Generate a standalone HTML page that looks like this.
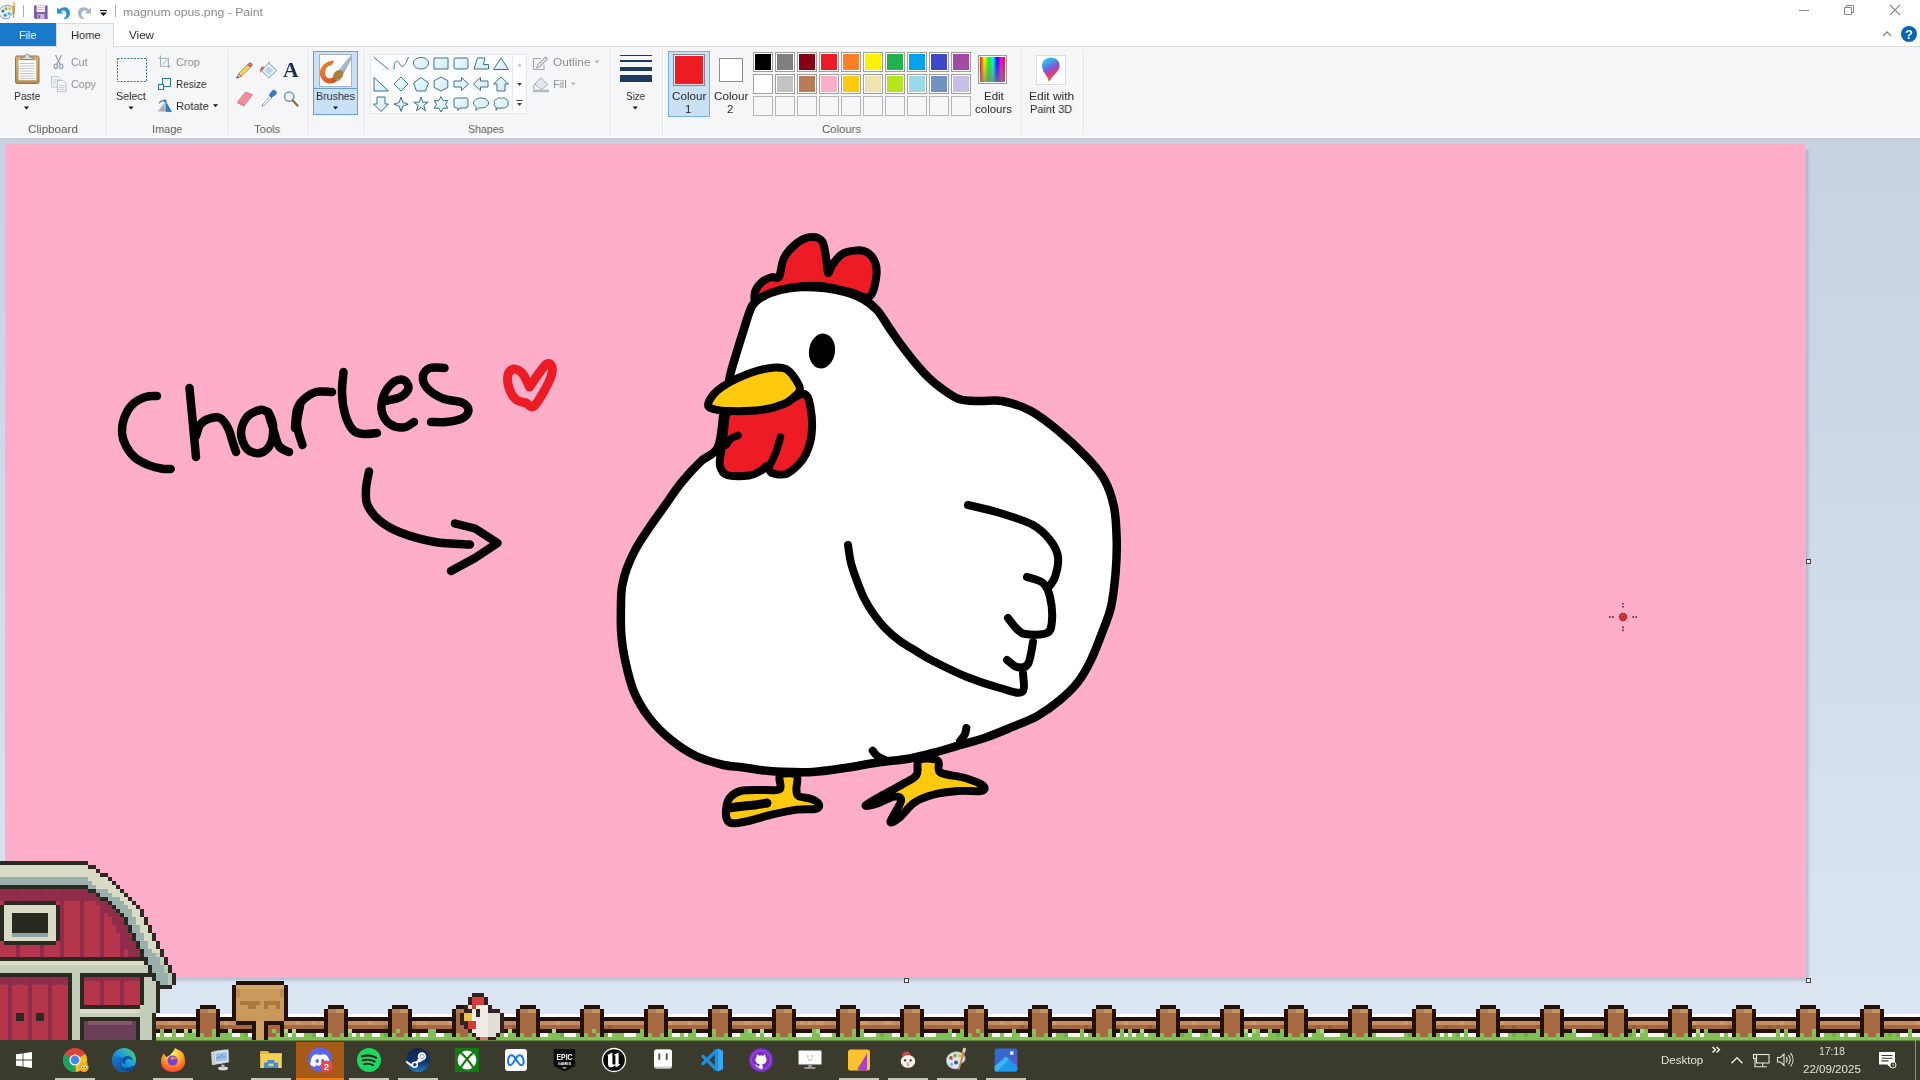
<!DOCTYPE html>
<html>
<head>
<meta charset="utf-8">
<title>magnum opus.png - Paint</title>
<style>
*{box-sizing:border-box;margin:0;padding:0}
html,body{width:1920px;height:1080px;overflow:hidden;background:#fff;font-family:"Liberation Sans",sans-serif;font-size:12px;color:#1e1e1e}
.abs{position:absolute}
svg{position:absolute;overflow:visible}
#titlebar{position:absolute;left:0;top:0;width:1920px;height:23px;background:#fff}
#tabrow{position:absolute;left:0;top:23px;width:1920px;height:24px;background:#fff;border-bottom:1px solid #dadbdc}
#ribbon{position:absolute;left:0;top:47px;width:1920px;height:91px;background:#f5f6f7}
#workspace{position:absolute;left:0;top:138px;width:1920px;height:878px;background:linear-gradient(to bottom,#c5cedc 0,#c9d2e2 6px,#c9d2e3 40px,#dbe4f1 860px,#dce5f2 100%)}
#canvas{position:absolute;left:5px;top:144px;width:1801px;height:834px;background:#ffaec9;overflow:hidden}
#canvas>svg{left:-5px;top:-144px}
#statusbar{position:absolute;left:0;top:1014px;width:1920px;height:26px;background:#fbfbfb}
#overlay{position:absolute;left:0;top:0;width:1920px;height:1040px;overflow:hidden}
#taskbar{position:absolute;left:0;top:1040px;width:1920px;height:40px;background:#3a3b2d;overflow:hidden}
.t{position:absolute;white-space:nowrap;line-height:14px;will-change:transform}
.sep{position:absolute;top:49px;width:1px;height:86px;background:#e2e3e4}
.glabel{position:absolute;top:122px;height:14px;line-height:14px;text-align:center;color:#5b5b5b;white-space:nowrap}
.dis{color:#8d8d8d}
</style>
</head>
<body>
<div id="titlebar">
</div>
<div id="tabrow">
</div>
<div id="ribbon">
</div>
<div id="chrome" class="abs" style="left:0;top:0;width:1920px;height:140px"><span class="t" style="left:123.00px;top:5.75px;font-size:11.5px;line-height:13.5px;color:#8b8b8b;transform:scaleX(1.0631);transform-origin:0 0;">magnum opus.png - Paint</span>
<div class="abs" style="left:0;top:23px;width:56px;height:23px;background:#1979ca"></div>
<div class="abs" style="left:56px;top:23px;width:58px;height:24px;background:#f5f6f7;border:1px solid #dadbdc;border-bottom:none"></div>
<span class="t" style="left:19.40px;top:28.78px;font-size:11.5px;line-height:13.5px;color:#fff;transform:scaleX(0.9444);transform-origin:0 0;">File</span>
<span class="t" style="left:70.60px;top:28.78px;font-size:11.5px;line-height:13.5px;color:#2a2a2a;transform:scaleX(0.9650);transform-origin:0 0;">Home</span>
<span class="t" style="left:129.40px;top:28.78px;font-size:11.5px;line-height:13.5px;color:#2a2a2a;transform:scaleX(1.0114);transform-origin:0 0;">View</span>
<div class="abs" style="left:106px;top:49px;width:1px;height:86px;background:#e5e6e8"></div><div class="abs" style="left:107px;top:49px;width:1px;height:86px;background:#fafafb"></div>
<div class="abs" style="left:228px;top:49px;width:1px;height:86px;background:#e5e6e8"></div><div class="abs" style="left:229px;top:49px;width:1px;height:86px;background:#fafafb"></div>
<div class="abs" style="left:308px;top:49px;width:1px;height:86px;background:#e5e6e8"></div><div class="abs" style="left:309px;top:49px;width:1px;height:86px;background:#fafafb"></div>
<div class="abs" style="left:364px;top:49px;width:1px;height:86px;background:#e5e6e8"></div><div class="abs" style="left:365px;top:49px;width:1px;height:86px;background:#fafafb"></div>
<div class="abs" style="left:610px;top:49px;width:1px;height:86px;background:#e5e6e8"></div><div class="abs" style="left:611px;top:49px;width:1px;height:86px;background:#fafafb"></div>
<div class="abs" style="left:662px;top:49px;width:1px;height:86px;background:#e5e6e8"></div><div class="abs" style="left:663px;top:49px;width:1px;height:86px;background:#fafafb"></div>
<div class="abs" style="left:1021px;top:49px;width:1px;height:86px;background:#e5e6e8"></div><div class="abs" style="left:1022px;top:49px;width:1px;height:86px;background:#fafafb"></div>
<div class="abs" style="left:1083px;top:49px;width:1px;height:86px;background:#e5e6e8"></div><div class="abs" style="left:1084px;top:49px;width:1px;height:86px;background:#fafafb"></div>
<span class="t" style="left:27.50px;top:123.25px;font-size:11.5px;line-height:13.5px;color:#5c5c5c;transform:scaleX(1.0158);transform-origin:0 0;">Clipboard</span>
<span class="t" style="left:151.50px;top:123.25px;font-size:11.5px;line-height:13.5px;color:#5c5c5c;transform:scaleX(0.9512);transform-origin:0 0;">Image</span>
<span class="t" style="left:254.00px;top:123.25px;font-size:11.5px;line-height:13.5px;color:#5c5c5c;transform:scaleX(0.9797);transform-origin:0 0;">Tools</span>
<span class="t" style="left:468.30px;top:123.25px;font-size:11.5px;line-height:13.5px;color:#5c5c5c;transform:scaleX(0.9230);transform-origin:0 0;">Shapes</span>
<span class="t" style="left:821.70px;top:123.25px;font-size:11.5px;line-height:13.5px;color:#5c5c5c;transform:scaleX(0.9842);transform-origin:0 0;">Colours</span>
<span class="t" style="left:13.50px;top:89.75px;font-size:11.5px;line-height:13.5px;color:#2a2a2a;transform:scaleX(0.8944);transform-origin:0 0;">Paste</span>
<span class="t" style="left:71.00px;top:55.75px;font-size:11.5px;line-height:13.5px;color:#8e8e8e;transform:scaleX(0.9220);transform-origin:0 0;">Cut</span>
<span class="t" style="left:71.00px;top:77.75px;font-size:11.5px;line-height:13.5px;color:#8e8e8e;transform:scaleX(0.9313);transform-origin:0 0;">Copy</span>
<span class="t" style="left:116.30px;top:89.75px;font-size:11.5px;line-height:13.5px;color:#2a2a2a;transform:scaleX(0.9324);transform-origin:0 0;">Select</span>
<span class="t" style="left:175.60px;top:55.75px;font-size:11.5px;line-height:13.5px;color:#8e8e8e;transform:scaleX(0.9549);transform-origin:0 0;">Crop</span>
<span class="t" style="left:175.60px;top:77.75px;font-size:11.5px;line-height:13.5px;color:#2a2a2a;transform:scaleX(0.8706);transform-origin:0 0;">Resize</span>
<span class="t" style="left:175.60px;top:99.75px;font-size:11.5px;line-height:13.5px;color:#2a2a2a;transform:scaleX(0.9710);transform-origin:0 0;">Rotate</span>
<span class="t" style="left:283.4px;top:60px;font-family:'Liberation Serif',serif;font-weight:bold;font-size:20px;line-height:20px;color:#1e3050;transform:scaleX(1.08);transform-origin:0 0">A</span>
<div class="abs" style="left:313px;top:51px;width:45px;height:64px;background:#c9e0f7;border:1px solid #62a2e4"></div><div class="abs" style="left:314px;top:88px;width:43px;height:1px;background:#62a2e4"></div>
<div class="abs" style="left:319px;top:54px;width:33px;height:33px;background:#fff;border:1px solid #a9b3bf"></div>
<span class="t" style="left:315.80px;top:89.75px;font-size:11.5px;line-height:13.5px;color:#2a2a2a;transform:scaleX(0.9245);transform-origin:0 0;">Brushes</span>
<div class="abs" style="left:370px;top:54px;width:157px;height:60px;background:#fcfdfe;border:1px solid #e3e6ea"></div><div class="abs" style="left:512px;top:55px;width:1px;height:58px;background:#e6e8eb"></div>
<span class="t" style="left:552.80px;top:55.75px;font-size:11.5px;line-height:13.5px;color:#8e8e8e;transform:scaleX(1.0292);transform-origin:0 0;">Outline</span>
<span class="t" style="left:552.80px;top:77.75px;font-size:11.5px;line-height:13.5px;color:#8e8e8e;transform:scaleX(0.9259);transform-origin:0 0;">Fill</span>
<span class="t" style="left:625.80px;top:89.75px;font-size:11.5px;line-height:13.5px;color:#2a2a2a;transform:scaleX(0.8493);transform-origin:0 0;">Size</span>
<div class="abs" style="left:668px;top:51px;width:42px;height:66px;background:#c9e0f7;border:1px solid #7aaee6"></div>
<div class="abs" style="left:673px;top:54px;width:32px;height:32px;background:#ed1c24;border:1px solid #7f8890;box-shadow:inset 0 0 0 1px #fbe9ea"></div>
<div class="abs" style="left:719px;top:58px;width:24px;height:24px;background:#fff;border:1px solid #8e8e8e"></div>
<span class="t" style="left:671.70px;top:89.75px;font-size:11.5px;line-height:13.5px;color:#2a2a2a;transform:scaleX(1.0125);transform-origin:0 0;">Colour</span>
<span class="t" style="left:685.10px;top:102.75px;font-size:11.5px;line-height:13.5px;color:#2a2a2a;transform:scaleX(1.0000);transform-origin:0 0;">1</span>
<span class="t" style="left:713.60px;top:89.75px;font-size:11.5px;line-height:13.5px;color:#2a2a2a;transform:scaleX(1.0155);transform-origin:0 0;">Colour</span>
<span class="t" style="left:727.10px;top:102.75px;font-size:11.5px;line-height:13.5px;color:#2a2a2a;transform:scaleX(1.0000);transform-origin:0 0;">2</span>
<div class="abs" style="left:753px;top:52px;width:20px;height:20px;background:#000000;border:1px solid #a0a0a0;box-shadow:inset 0 0 0 1px #fff"></div>
<div class="abs" style="left:775px;top:52px;width:20px;height:20px;background:#7f7f7f;border:1px solid #a0a0a0;box-shadow:inset 0 0 0 1px #fff"></div>
<div class="abs" style="left:797px;top:52px;width:20px;height:20px;background:#880015;border:1px solid #a0a0a0;box-shadow:inset 0 0 0 1px #fff"></div>
<div class="abs" style="left:819px;top:52px;width:20px;height:20px;background:#ed1c24;border:1px solid #a0a0a0;box-shadow:inset 0 0 0 1px #fff"></div>
<div class="abs" style="left:841px;top:52px;width:20px;height:20px;background:#ff7f27;border:1px solid #a0a0a0;box-shadow:inset 0 0 0 1px #fff"></div>
<div class="abs" style="left:863px;top:52px;width:20px;height:20px;background:#fff200;border:1px solid #a0a0a0;box-shadow:inset 0 0 0 1px #fff"></div>
<div class="abs" style="left:885px;top:52px;width:20px;height:20px;background:#22b14c;border:1px solid #a0a0a0;box-shadow:inset 0 0 0 1px #fff"></div>
<div class="abs" style="left:907px;top:52px;width:20px;height:20px;background:#00a2e8;border:1px solid #a0a0a0;box-shadow:inset 0 0 0 1px #fff"></div>
<div class="abs" style="left:929px;top:52px;width:20px;height:20px;background:#3f48cc;border:1px solid #a0a0a0;box-shadow:inset 0 0 0 1px #fff"></div>
<div class="abs" style="left:951px;top:52px;width:20px;height:20px;background:#a349a4;border:1px solid #a0a0a0;box-shadow:inset 0 0 0 1px #fff"></div>
<div class="abs" style="left:753px;top:74px;width:20px;height:20px;background:#ffffff;border:1px solid #a0a0a0;box-shadow:inset 0 0 0 1px #fff"></div>
<div class="abs" style="left:775px;top:74px;width:20px;height:20px;background:#c3c3c3;border:1px solid #a0a0a0;box-shadow:inset 0 0 0 1px #fff"></div>
<div class="abs" style="left:797px;top:74px;width:20px;height:20px;background:#b97a57;border:1px solid #a0a0a0;box-shadow:inset 0 0 0 1px #fff"></div>
<div class="abs" style="left:819px;top:74px;width:20px;height:20px;background:#ffaec9;border:1px solid #a0a0a0;box-shadow:inset 0 0 0 1px #fff"></div>
<div class="abs" style="left:841px;top:74px;width:20px;height:20px;background:#ffc90e;border:1px solid #a0a0a0;box-shadow:inset 0 0 0 1px #fff"></div>
<div class="abs" style="left:863px;top:74px;width:20px;height:20px;background:#efe4b0;border:1px solid #a0a0a0;box-shadow:inset 0 0 0 1px #fff"></div>
<div class="abs" style="left:885px;top:74px;width:20px;height:20px;background:#b5e61d;border:1px solid #a0a0a0;box-shadow:inset 0 0 0 1px #fff"></div>
<div class="abs" style="left:907px;top:74px;width:20px;height:20px;background:#99d9ea;border:1px solid #a0a0a0;box-shadow:inset 0 0 0 1px #fff"></div>
<div class="abs" style="left:929px;top:74px;width:20px;height:20px;background:#7092be;border:1px solid #a0a0a0;box-shadow:inset 0 0 0 1px #fff"></div>
<div class="abs" style="left:951px;top:74px;width:20px;height:20px;background:#c8bfe7;border:1px solid #a0a0a0;box-shadow:inset 0 0 0 1px #fff"></div>
<div class="abs" style="left:753px;top:96px;width:20px;height:20px;background:#f5f6f7;border:1px solid #b4b4b4"></div>
<div class="abs" style="left:775px;top:96px;width:20px;height:20px;background:#f5f6f7;border:1px solid #b4b4b4"></div>
<div class="abs" style="left:797px;top:96px;width:20px;height:20px;background:#f5f6f7;border:1px solid #b4b4b4"></div>
<div class="abs" style="left:819px;top:96px;width:20px;height:20px;background:#f5f6f7;border:1px solid #b4b4b4"></div>
<div class="abs" style="left:841px;top:96px;width:20px;height:20px;background:#f5f6f7;border:1px solid #b4b4b4"></div>
<div class="abs" style="left:863px;top:96px;width:20px;height:20px;background:#f5f6f7;border:1px solid #b4b4b4"></div>
<div class="abs" style="left:885px;top:96px;width:20px;height:20px;background:#f5f6f7;border:1px solid #b4b4b4"></div>
<div class="abs" style="left:907px;top:96px;width:20px;height:20px;background:#f5f6f7;border:1px solid #b4b4b4"></div>
<div class="abs" style="left:929px;top:96px;width:20px;height:20px;background:#f5f6f7;border:1px solid #b4b4b4"></div>
<div class="abs" style="left:951px;top:96px;width:20px;height:20px;background:#f5f6f7;border:1px solid #b4b4b4"></div>
<div class="abs" style="left:978px;top:55px;width:29px;height:29px;border:1px solid #9a9a9a;background:#fff;padding:1px"><div style="width:25px;height:25px;background:linear-gradient(to bottom,rgba(128,128,128,0) 0,rgba(128,128,128,.75) 100%),linear-gradient(to right,#f00 0,#ff0 17%,#0f0 36%,#0ff 52%,#00f 68%,#f0f 84%,#f00 100%)"></div></div>
<span class="t" style="left:983.60px;top:89.75px;font-size:11.5px;line-height:13.5px;color:#2a2a2a;transform:scaleX(0.9790);transform-origin:0 0;">Edit</span>
<span class="t" style="left:974.80px;top:102.75px;font-size:11.5px;line-height:13.5px;color:#2a2a2a;transform:scaleX(0.9981);transform-origin:0 0;">colours</span>
<div class="abs" style="left:1036px;top:55px;width:30px;height:30px;border:1px solid #dcdcdc;background:#fff"></div>
<span class="t" style="left:1028.60px;top:89.75px;font-size:11.5px;line-height:13.5px;color:#2a2a2a;transform:scaleX(1.0400);transform-origin:0 0;">Edit with</span>
<span class="t" style="left:1029.50px;top:102.75px;font-size:11.5px;line-height:13.5px;color:#2a2a2a;transform:scaleX(0.9568);transform-origin:0 0;">Paint 3D</span>
<svg width="1920" height="140" viewBox="0 0 1920 140" style="left:0;top:0">
<path d="M23.5 5v12M115.5 5v12" stroke="#acacac" stroke-width="1" fill="none"/>
<g><path d="M-1 12.5C-1 8 3 5.5 7.5 5.5C12.5 5.5 15 8.5 14 12C13.2 14.5 11 14 10 15.5C9.3 16.8 10.3 18 8.5 18.6C5 19.6 -1 17.5 -1 12.5Z" fill="#e9eef3" stroke="#7d93ad" stroke-width="1"/><circle cx="3" cy="11" r="1.5" fill="#6a6a6a"/><circle cx="6" cy="8.8" r="1.5" fill="#7fc241"/><circle cx="9.8" cy="8.6" r="1.5" fill="#e8c53a"/><circle cx="5.2" cy="15.2" r="1.6" fill="#2f9de0"/><circle cx="9" cy="13.5" r="1.4" fill="#4fb4ea"/><path d="M13.5 2.2L15.2 3L14.6 9L14 17.8L13 17.8L12.4 9Z" fill="#e08a2c"/><path d="M12.3 2.5L15.4 1.6L15 6L12.8 6Z" fill="#e8c9a6"/></g>
<g><path d="M34 5.5h13.6v13.6H35.4L34 17.7Z" fill="#7f5aa8"/><rect x="36.6" y="5.5" width="8.4" height="6.6" fill="#f3eef8"/><path d="M37.5 7.5h6.6M37.5 9.5h6.6" stroke="#c9b9dd" stroke-width="0.8"/><rect x="37.4" y="14" width="7" height="5.1" fill="#c9b6dc"/><rect x="38.4" y="15" width="1.8" height="3.4" fill="#7f5aa8"/></g>
<path d="M57 7.2L57 13.4L63.2 13.4L61 11.2C63.6 9.6 66.6 11.2 66.4 14.2C66.3 16.2 65 17.8 63.4 18.6L65 19.2C68.4 18 70.2 15.6 70 12.4C69.6 7.4 63.6 5.2 59.2 9.4Z" fill="#2b8fd8"/>
<path d="M91 7.2L91 13.4L84.8 13.4L87 11.2C84.4 9.6 81.4 11.2 81.6 14.2C81.7 16.2 83 17.8 84.6 18.6L83 19.2C79.6 18 77.8 15.6 78 12.4C78.4 7.4 84.4 5.2 88.8 9.4Z" fill="#a9b4c4"/>
<path d="M100 10.5h7" stroke="#111" stroke-width="1"/><path d="M100 12.5h7l-3.5 3.5Z" fill="#111"/>
<g stroke="#8a8a8a" stroke-width="1" fill="none"><path d="M1799 10.5h10"/><path d="M1844.5 7.5h7v7h-7Z"/><path d="M1846.5 7.5v-2h7v7h-2"/><path d="M1890 5l10 10M1900 5l-10 10" stroke-width="1.1"/></g>
<path d="M1883 36l4-4l4 4" stroke="#8a8a8a" stroke-width="1.3" fill="none"/>
<circle cx="1909" cy="34" r="8" fill="#0a64b4"/>
<text x="1909" y="38.6" text-anchor="middle" font-family="Liberation Sans,sans-serif" font-weight="bold" font-size="13" fill="#fff">?</text>
<path d="M24.0 106.5h5l-2.5 3Z" fill="#111"/>
<path d="M128.5 106.5h5l-2.5 3Z" fill="#111"/>
<path d="M213.0 104.2h5l-2.5 3Z" fill="#111"/>
<defs><linearGradient id="gclip" x1="0" y1="0" x2="0" y2="1"><stop offset="0" stop-color="#d6b177"/><stop offset="1" stop-color="#b98d4f"/></linearGradient></defs>
<g><rect x="15.5" y="56" width="23.5" height="27.5" rx="1.5" fill="url(#gclip)" stroke="#9a7440" stroke-width="1"/><rect x="18.3" y="60" width="18" height="20.2" fill="#fdfdfd" stroke="#c9b48f" stroke-width="0.6"/><path d="M20 63.5h14.5M20 66h14.5M20 68.5h14.5M20 71h14.5M20 73.5h14.5M20 76h14.5M20 78.3h14.5" stroke="#b9bcc2" stroke-width="0.9"/><path d="M21.5 59.5v-2.3h3.2c0.2-2 1.2-3 2.6-3s2.4 1 2.6 3h3.2v2.3Z" fill="#d8dce2" stroke="#70767f" stroke-width="0.8"/></g>
<g fill="none" stroke="#9aa6b6" stroke-width="1.4"><path d="M55.5 55l4.8 9.5M61.5 55l-4.8 9.5"/><ellipse cx="55.8" cy="66.3" rx="1.7" ry="2.2"/><ellipse cx="61.2" cy="66.3" rx="1.7" ry="2.2"/></g>
<g fill="#f4f6f9" stroke="#b4bdca" stroke-width="0.9"><path d="M51.5 76.5h6l2.5 2.5v8h-8.5Z"/><path d="M57.5 80.5h5.5l3 3v8.2h-8.5Z"/><path d="M53 80h5M53 82h3.5M53 84h3.5M59 85.5h5.5M59 87.5h5.5M59 89.5h5.5" stroke-width="0.7"/></g>
<rect x="117.5" y="58.5" width="29" height="23" fill="none" stroke="#3d6f96" stroke-width="1" stroke-dasharray="2 1.3"/>
<g fill="none" stroke="#a3aebd" stroke-width="1.1"><path d="M160.5 55.5v10.8h10.5M158 58.3h10.4v10"/><path d="M162.5 64.3l5-5" stroke="#b8c2d0"/></g>
<g fill="#f5f6f7" stroke="#2c77a6" stroke-width="1"><rect x="162.5" y="78.5" width="8" height="8"/><rect x="158.5" y="84.5" width="5" height="5" fill="#e6f1f8"/></g>
<defs><linearGradient id="grot" x1="0" y1="0" x2="1" y2="1"><stop offset="0" stop-color="#f0f1f3"/><stop offset="1" stop-color="#8d9199"/></linearGradient></defs>
<g><path d="M164.6 102v9.6h-7.2Z" fill="url(#grot)"/><path d="M165.8 102v9.6h5.6Z" fill="#2b7fc4" stroke="#1d5f9c" stroke-width="0.6"/><path d="M159.2 103.4c1-2.4 4-3.4 6.6-2.4" fill="none" stroke="#2d6cab" stroke-width="1.1"/><path d="M164.6 99l2.6 2l-3 1.4Z" fill="#2d6cab"/></g>
<g><path d="M238.6 73.6L247.6 64.6L250.4 67.4L241.4 76.4Z" fill="#efd55e" stroke="#8c7a2c" stroke-width="0.7"/><path d="M247.6 64.6l1.4-1.4c0.7-0.7 1.6-0.7 2.2-0.1l0.7 0.7c0.6 0.6 0.6 1.5-0.1 2.2l-1.4 1.4Z" fill="#d9707c" stroke="#9a4550" stroke-width="0.6"/><path d="M238.6 73.6L236.6 78.2L241.4 76.4Z" fill="#e7c9a0" stroke="#6b5a3a" stroke-width="0.6"/><path d="M236.6 78.2l0.8-1.9l1.2 1.2Z" fill="#333"/></g>
<g><path d="M268.6 63L276.8 70.4L268.6 78L261.6 70.6Z" fill="#e3eef8" stroke="#7c96b4" stroke-width="0.9"/><path d="M268.6 66.5L273 70.5L268.6 74.5L264.8 70.5Z" fill="#b9d6ee"/><path d="M263.4 66.2c-2.6 0.6-3.6 3.4-3 7c0.6-2.2 1.6-3.6 3.4-4.4Z" fill="#e2532c"/><path d="M268.6 63c-0.2-1.4 1-1.6 1.2-0.6" fill="none" stroke="#777" stroke-width="0.7"/></g>
<g><path d="M237.6 101.6L245.6 91.8L252.8 94.6L245 104.8Z" fill="#ef8f98" stroke="#d7737e" stroke-width="0.6"/><path d="M237.6 101.6L245 104.8L244.4 106.4L237.4 103.2Z" fill="#e07684"/></g>
<g><path d="M262.4 104.8L270.2 96.2L272 98L263.8 106Z" fill="#f3f6fa" stroke="#8a97a8" stroke-width="0.8"/><path d="M269.2 95.2l2.6-3.8c1-1.4 2.6-1.6 3.8-0.4s1 2.8-0.4 3.8l-3.8 2.6Z" fill="#2f7fc8" stroke="#1d5b98" stroke-width="0.6"/><path d="M262.4 104.8l-0.8 1.8l1.8-0.8Z" fill="#555"/></g>
<g><circle cx="289.2" cy="96.6" r="4.7" fill="#e9f1f9" stroke="#8896a8" stroke-width="1.5"/><path d="M292.8 100.4L297.4 105.6" stroke="#8a6a4a" stroke-width="2.2" stroke-linecap="round"/></g>
<defs><linearGradient id="gsw" x1="0" y1="0" x2="1" y2="1"><stop offset="0" stop-color="#f08a3a"/><stop offset="1" stop-color="#d9491c"/></linearGradient><linearGradient id="gfer" x1="0" y1="0" x2="1" y2="1"><stop offset="0" stop-color="#e8edf3"/><stop offset="1" stop-color="#6f86a6"/></linearGradient></defs>
<g><path d="M331.6 60.8C322 62.6 318 70.6 320.6 77C323.4 83.6 331.4 85.6 337 81L334 76.6C330.4 80 326.6 78.6 325.4 75C324 70.6 326.6 65.6 332.6 64.2Z" fill="url(#gsw)"/><path d="M331.6 60.8c1.2-0.6 2-0.2 2.2 0.8l-1.2 2.6Z" fill="#e8692c"/><path d="M350.4 55.4L351.6 59L343.6 73.4L338.6 69.8Z" fill="url(#gfer)"/><ellipse cx="338.2" cy="75" rx="5.6" ry="4.4" transform="rotate(-40 338.2 75)" fill="#b07d3c"/><path d="M333.4 79.6c1.8 2 5 1.4 7.4-0.8" stroke="#8e5d28" stroke-width="0.8" fill="none"/></g>
<path d="M333.0 106.5h5l-2.5 3Z" fill="#111"/>
<path d="M517 66.2h5l-2.5-3Z" fill="#c3c7cc"/><path d="M517 83h5l-2.5 3Z" fill="#444"/><path d="M516.5 100.5h6" stroke="#444" stroke-width="1"/><path d="M517 103h5l-2.5 3Z" fill="#444"/>
<defs><linearGradient id="gsh" x1="0" y1="0" x2="1" y2="1"><stop offset="0" stop-color="#f3fbff"/><stop offset="1" stop-color="#cfeaf8"/></linearGradient></defs>
<g stroke="#3f6f8f" stroke-width="1" stroke-linejoin="miter"><path transform="translate(371 54)" d="M2.5 3L17.5 15.5" fill="none"/><path transform="translate(391 54)" d="M3 15.5C3 6 6.5 5.5 8.5 9.5S12.5 15.5 17.5 3" fill="none"/><path transform="translate(411 54)" d="M10 3.5C14.4 3.5 17.5 6 17.5 9.2S14.4 15 10 15S2.5 12.4 2.5 9.2S5.6 3.5 10 3.5Z" fill="url(#gsh)"/><path transform="translate(431 54)" d="M3 4h14v11H3Z" fill="url(#gsh)"/><path transform="translate(451 54)" d="M5 4h10a2 2 0 0 1 2 2v7a2 2 0 0 1-2 2H5a2 2 0 0 1-2-2V6a2 2 0 0 1 2-2Z" fill="url(#gsh)"/><path transform="translate(471 54)" d="M6.5 4H14L12.4 10.5H17.5V15H3Z" fill="url(#gsh)"/><path transform="translate(491 54)" d="M10 4L17.5 15.5H2.5Z" fill="url(#gsh)"/><path transform="translate(371 74)" d="M3 3.5V17H17.5Z" fill="url(#gsh)"/><path transform="translate(391 74)" d="M10 3L17 10L10 17L3 10Z" fill="url(#gsh)"/><path transform="translate(411 74)" d="M10 3.5L17.5 9L14.5 17H5.5L2.5 9Z" fill="url(#gsh)"/><path transform="translate(431 74)" d="M10 3L16.8 6.6V13.6L10 17L3.2 13.6V6.6Z" fill="url(#gsh)"/><path transform="translate(451 74)" d="M3 7h7.5V3.5L17.5 10L10.5 16.5V13H3Z" fill="url(#gsh)"/><path transform="translate(471 74)" d="M17 7H9.5V3.5L2.5 10L9.5 16.5V13H17Z" fill="url(#gsh)"/><path transform="translate(491 74)" d="M10 3L17.5 10H14V17H6V10H2.5Z" fill="url(#gsh)"/><path transform="translate(371 94)" d="M6 3h8v7h3.5L10 17.5L2.5 10H6Z" fill="url(#gsh)"/><path transform="translate(391 94)" d="M10 3L11.8 8.4L17.2 10.2L11.8 12L10 17.4L8.2 12L2.8 10.2L8.2 8.4Z" fill="url(#gsh)"/><path transform="translate(411 94)" d="M10 3L11.8 8.2H17.2L12.8 11.4L14.5 16.8L10 13.5L5.5 16.8L7.2 11.4L2.8 8.2H8.2Z" fill="url(#gsh)"/><path transform="translate(431 94)" d="M10 2.6L12.2 6.6H16.8L14.5 10.4L16.8 14.2H12.2L10 18L7.8 14.2H3.2L5.5 10.4L3.2 6.6H7.8Z" fill="url(#gsh)"/><path transform="translate(451 94)" d="M5 4h10a2 2 0 0 1 2 2v6a2 2 0 0 1-2 2H9L6.8 16.6L7 14H5a2 2 0 0 1-2-2V6a2 2 0 0 1 2-2Z" fill="url(#gsh)"/><path transform="translate(471 94)" d="M10 4C14.2 4 17.5 6.2 17.5 9S14.2 14 10 14C9.2 14 8.4 13.9 7.7 13.8L4.8 16.5L5.4 12.9C3.6 12 2.5 10.6 2.5 9C2.5 6.2 5.8 4 10 4Z" fill="url(#gsh)"/><path transform="translate(491 94)" d="M6 5.2C7 3.4 9.4 3.6 10.2 4.6C11.4 3.2 14.4 3.6 14.8 5.4C16.8 5.4 18 7.4 16.8 9C18 10.6 17 12.8 15 12.8C14.4 14.4 12 14.6 11 13.6C10 14.8 7.6 14.6 7 13.4L5 16.4L5.2 13C3.2 12.6 2.6 10.4 3.8 9.2C2.4 7.8 3.6 5.2 6 5.2Z" fill="url(#gsh)"/></g>
<path d="M594.5 60.4h5l-2.5 3Z" fill="#b5b5b5"/>
<path d="M570.7 82.4h5l-2.5 3Z" fill="#b5b5b5"/>
<g fill="none" stroke="#a2a9b3" stroke-width="1.1"><path d="M541 58.5h-7.5v11h10.5v-4.5"/><path d="M536.5 68l1-3l8-8l2 2l-8 8Z" fill="#e8ebef"/></g>
<g><path d="M540.8 77.6L547.8 84.6L541.4 89.6L535 84Z" fill="#e4e8ee" stroke="#a2a9b3" stroke-width="1"/><path d="M535 84c-1.4 1.6-1.6 3.6-1 5.4" fill="none" stroke="#a2a9b3" stroke-width="1.1"/><rect x="533" y="89.6" width="16" height="2.6" fill="#b4bac4"/></g>
<g fill="#1e3a5f"><rect x="620" y="55" width="32" height="1"/><rect x="620" y="60" width="32" height="2"/><rect x="620" y="67" width="32" height="4"/><rect x="620" y="75" width="32" height="7"/></g>
<path d="M632.7 106.5h5l-2.5 3Z" fill="#111"/>
<defs><linearGradient id="gp3" x1="0.2" y1="0" x2="0.6" y2="1"><stop offset="0" stop-color="#35d2ea"/><stop offset="0.22" stop-color="#3fa4ea"/><stop offset="0.45" stop-color="#6f62da"/><stop offset="0.66" stop-color="#d9378c"/><stop offset="0.86" stop-color="#f0523a"/><stop offset="1" stop-color="#f7c948"/></linearGradient></defs>
<path d="M1051 57.6C1056.2 57.6 1059.6 61.2 1059.6 65.8C1059.6 70.8 1055 73.8 1052 77.4C1050.8 78.8 1050 80.4 1048.6 81.8C1048.4 79.4 1047.8 77.6 1046.2 75.4C1044 72.4 1042 69.8 1042 65.8C1042 61.2 1045.8 57.6 1051 57.6Z" fill="url(#gp3)"/>
</svg></div>
<div id="workspace"></div>
<div id="canvas"><svg width="1920" height="1080" viewBox="0 0 1920 1080">
<path d="M756.0 304.0C754.3 303.2 754.0 295.7 755.0 292.0C756.0 288.3 759.2 284.5 762.0 282.0C764.8 279.5 769.2 277.8 772.0 277.0C774.8 276.2 777.0 280.2 779.0 277.0C781.0 273.8 781.0 263.7 784.0 258.0C787.0 252.3 792.5 246.5 797.0 243.0C801.5 239.5 806.8 237.3 811.0 237.0C815.2 236.7 819.5 237.7 822.0 241.0C824.5 244.3 825.0 251.7 826.0 257.0C827.0 262.3 826.8 271.8 828.0 273.0C829.2 274.2 830.3 267.3 833.0 264.0C835.7 260.7 838.8 255.2 844.0 253.0C849.2 250.8 858.8 249.5 864.0 251.0C869.2 252.5 873.0 257.3 875.0 262.0C877.0 266.7 877.0 273.2 876.0 279.0C875.0 284.8 873.3 294.8 869.0 297.0C864.7 299.2 858.2 293.8 850.0 292.0C841.8 290.2 830.0 286.7 820.0 286.0C810.0 285.3 799.2 286.2 790.0 288.0C780.8 289.8 770.7 294.3 765.0 297.0C759.3 299.7 757.7 304.8 756.0 304.0Z" fill="#ed1c24" stroke="#000" stroke-width="8" stroke-linecap="round" stroke-linejoin="round" />
<path d="M752.0 306.0C755.0 300.7 757.3 299.7 762.0 297.0C766.7 294.3 773.5 291.7 780.0 290.0C786.5 288.3 793.5 287.3 801.0 287.0C808.5 286.7 817.7 287.2 825.0 288.0C832.3 288.8 838.7 290.2 845.0 292.0C851.3 293.8 857.7 296.0 863.0 299.0C868.3 302.0 872.5 305.0 877.0 310.0C881.5 315.0 885.8 323.0 890.0 329.0C894.2 335.0 897.5 340.0 902.0 346.0C906.5 352.0 912.5 359.7 917.0 365.0C921.5 370.3 925.0 374.2 929.0 378.0C933.0 381.8 936.0 384.5 941.0 388.0C946.0 391.5 952.5 396.8 959.0 399.0C965.5 401.2 972.8 400.7 980.0 401.0C987.2 401.3 993.7 399.4 1002.0 401.0C1010.3 402.6 1020.7 405.6 1030.0 410.5C1039.3 415.4 1048.7 422.8 1058.0 430.5C1067.3 438.2 1078.3 448.4 1086.0 456.5C1093.7 464.6 1099.3 470.6 1104.0 479.0C1108.7 487.4 1111.9 496.8 1114.0 507.0C1116.1 517.2 1116.4 529.0 1116.7 540.0C1117.0 551.0 1116.5 561.8 1115.6 573.0C1114.6 584.2 1113.3 597.0 1111.0 607.0C1108.7 617.0 1105.3 624.2 1102.0 633.0C1098.7 641.8 1095.0 651.8 1091.0 660.0C1087.0 668.2 1083.2 675.3 1078.0 682.0C1072.8 688.7 1066.7 694.4 1060.0 700.0C1053.3 705.6 1045.8 711.1 1038.0 715.6C1030.2 720.1 1021.9 723.0 1013.0 726.7C1004.1 730.4 993.7 734.9 984.5 738.0C975.3 741.1 965.4 743.4 958.0 745.6C950.6 747.8 948.0 748.9 940.0 751.0C932.0 753.1 920.3 756.6 910.0 758.5C899.7 760.4 888.8 760.9 878.0 762.5C867.2 764.1 855.8 766.4 845.0 768.0C834.2 769.6 823.7 771.4 813.0 772.0C802.3 772.6 789.8 772.1 781.0 771.8C772.2 771.5 766.8 770.8 760.0 770.0C753.2 769.2 746.1 767.8 740.0 767.0C733.9 766.2 730.8 766.8 723.5 765.0C716.2 763.2 704.9 760.3 696.0 756.0C687.1 751.7 677.8 745.4 670.0 739.0C662.2 732.6 655.0 725.3 649.0 717.5C643.0 709.7 637.9 701.2 634.0 692.0C630.1 682.8 627.6 671.6 625.5 662.0C623.4 652.4 622.0 644.3 621.3 634.5C620.5 624.7 620.9 610.9 621.0 603.0C621.1 595.1 621.0 592.8 622.0 587.0C623.0 581.2 624.4 575.0 626.8 568.5C629.2 562.0 632.3 555.1 636.2 548.0C640.1 540.9 645.4 533.3 650.4 526.0C655.4 518.7 660.8 511.3 666.0 504.0C671.2 496.7 676.0 489.1 681.8 482.0C687.6 474.9 694.7 467.3 700.7 461.5C706.7 455.7 714.1 455.6 718.0 447.0C721.9 438.4 722.0 421.8 724.0 410.0C726.0 398.2 728.2 384.7 730.0 376.0C731.8 367.3 732.7 365.8 735.0 358.0C737.3 350.2 741.2 337.7 744.0 329.0C746.8 320.3 749.0 311.3 752.0 306.0Z" fill="#fff" stroke="#000" stroke-width="8.5" stroke-linecap="round" stroke-linejoin="round" />
<path d="M872.7 750.7C873.5 751.6 875.4 754.7 877.6 756.3C879.8 757.9 884.6 759.7 886.0 760.4" fill="none" stroke="#000" stroke-width="8" stroke-linecap="round" stroke-linejoin="round" />
<path d="M966.4 728.0C966.1 729.1 965.9 732.3 964.8 734.5C963.7 736.7 960.8 739.9 960.0 741.0" fill="none" stroke="#000" stroke-width="8" stroke-linecap="round" stroke-linejoin="round" />
<path d="M848.0 545.0C848.5 548.0 849.5 557.0 851.0 563.0C852.5 569.0 854.8 575.2 857.0 581.0C859.2 586.8 861.3 592.7 864.0 598.0C866.7 603.3 869.5 608.0 873.0 613.0C876.5 618.0 880.5 623.3 885.0 628.0C889.5 632.7 894.8 637.2 900.0 641.0C905.2 644.8 910.5 647.7 916.0 651.0C921.5 654.3 924.5 656.7 933.0 661.0C941.5 665.3 955.8 672.5 967.0 677.0C978.2 681.5 990.8 685.5 1000.0 688.0C1009.2 690.5 1018.2 694.5 1022.0 692.0C1025.8 689.5 1022.8 676.2 1023.0 673.0" fill="none" stroke="#000" stroke-width="8" stroke-linecap="round" stroke-linejoin="round" />
<path d="M1007.0 660.0C1008.7 661.2 1013.5 666.3 1017.0 667.0C1020.5 667.7 1025.3 668.2 1028.0 664.0C1030.7 659.8 1032.2 645.7 1033.0 642.0" fill="none" stroke="#000" stroke-width="8" stroke-linecap="round" stroke-linejoin="round" />
<path d="M1008.0 618.0C1009.3 619.7 1013.2 625.3 1016.0 628.0C1018.8 630.7 1019.8 633.2 1025.0 634.0C1030.2 634.8 1042.5 635.3 1047.0 633.0C1051.5 630.7 1051.5 626.0 1052.0 620.0C1052.5 614.0 1051.5 603.2 1050.0 597.0C1048.5 590.8 1046.8 586.3 1043.0 583.0C1039.2 579.7 1029.7 578.0 1027.0 577.0" fill="none" stroke="#000" stroke-width="8" stroke-linecap="round" stroke-linejoin="round" />
<path d="M968.0 505.0C973.3 506.3 989.2 509.7 1000.0 513.0C1010.8 516.3 1024.7 520.5 1033.0 525.0C1041.3 529.5 1045.8 534.7 1050.0 540.0C1054.2 545.3 1057.2 550.8 1058.0 557.0C1058.8 563.2 1056.7 571.8 1055.0 577.0C1053.3 582.2 1049.2 586.2 1048.0 588.0" fill="none" stroke="#000" stroke-width="8" stroke-linecap="round" stroke-linejoin="round" />
<path d="M780.0 775.0C777.3 777.3 782.5 786.5 780.0 789.0C777.5 791.5 771.6 789.7 765.0 790.0C758.4 790.3 746.3 789.8 740.5 791.0C734.7 792.2 732.3 795.1 730.0 797.5C727.7 799.9 727.2 802.1 726.6 805.6C726.0 809.1 725.7 815.5 726.6 818.5C727.5 821.5 728.7 822.9 732.3 823.3C735.9 823.7 741.7 822.5 748.4 821.0C755.1 819.5 764.6 816.3 772.7 814.4C780.8 812.5 789.8 810.5 797.0 809.6C804.2 808.7 812.4 809.7 816.0 808.8C819.6 807.9 819.5 805.6 818.7 804.0C817.9 802.4 814.8 800.3 811.4 799.0C808.0 797.7 801.0 797.6 798.5 796.0C796.0 794.4 796.8 792.9 796.4 789.4C796.0 785.9 799.1 777.4 796.4 775.0C793.7 772.6 782.7 772.7 780.0 775.0Z" fill="#ffc90e" stroke="#000" stroke-width="8" stroke-linecap="round" stroke-linejoin="round" />
<path d="M729.0 808.0C731.5 807.7 739.7 806.5 744.0 806.0C748.3 805.5 751.2 805.5 755.0 805.0C758.8 804.5 765.0 803.3 767.0 803.0" fill="none" stroke="#000" stroke-width="9" stroke-linecap="round" stroke-linejoin="round" />
<path d="M919.0 760.0C915.5 762.4 919.3 770.9 916.5 775.0C913.7 779.1 907.9 781.0 902.0 784.5C896.1 788.0 887.1 792.5 881.0 796.0C874.9 799.5 866.1 804.2 865.5 805.5C864.9 806.8 872.8 805.0 877.5 803.5C882.2 802.0 890.1 796.9 894.0 796.5C897.9 796.1 901.6 796.8 901.0 801.0C900.4 805.2 890.8 818.7 890.5 821.5C890.2 824.3 895.0 821.2 899.0 818.0C903.0 814.8 908.7 806.4 914.5 802.5C920.3 798.6 926.8 796.4 934.0 794.5C941.2 792.6 950.2 791.6 958.0 791.0C965.8 790.4 976.8 791.9 981.0 791.0C985.2 790.1 985.7 787.7 983.0 785.5C980.3 783.3 972.1 780.2 965.0 778.0C957.9 775.8 945.1 775.4 940.5 772.5C935.9 769.6 941.1 762.6 937.5 760.5C933.9 758.4 922.5 757.6 919.0 760.0Z" fill="#ffc90e" stroke="#000" stroke-width="8" stroke-linecap="round" stroke-linejoin="round" />
<path d="M728.0 412.0C723.7 415.7 725.2 425.3 724.0 432.0C722.8 438.7 721.7 446.3 721.0 452.0C720.3 457.7 719.0 462.2 720.0 466.0C721.0 469.8 722.2 473.4 727.0 475.0C731.8 476.6 743.2 476.3 749.0 475.5C754.8 474.7 759.0 471.6 762.0 470.0C765.0 468.4 765.3 465.5 767.0 466.0C768.7 466.5 768.8 471.7 772.0 473.0C775.2 474.3 781.7 475.3 786.0 474.0C790.3 472.7 794.7 468.3 798.0 465.0C801.3 461.7 803.8 459.0 806.0 454.0C808.2 449.0 810.7 442.2 811.5 435.0C812.3 427.8 812.2 417.8 811.0 411.0C809.8 404.2 809.2 395.0 804.0 394.0C798.8 393.0 789.0 402.3 780.0 405.0C771.0 407.7 758.7 408.8 750.0 410.0C741.3 411.2 732.3 408.3 728.0 412.0Z" fill="#ed1c24" stroke="#000" stroke-width="8" stroke-linecap="round" stroke-linejoin="round" />
<path d="M738.0 435.5C736.8 436.0 733.0 436.9 731.0 438.5C729.0 440.1 726.8 443.9 726.0 445.0" fill="none" stroke="#000" stroke-width="7.5" stroke-linecap="round" stroke-linejoin="round" />
<path d="M780.5 437.0C779.8 439.5 777.9 447.0 776.0 452.0C774.1 457.0 770.2 464.5 769.0 467.0" fill="none" stroke="#000" stroke-width="7.5" stroke-linecap="round" stroke-linejoin="round" />
<path d="M708.0 405.0C708.0 402.7 710.7 398.0 713.0 395.0C715.3 392.0 717.8 389.8 722.0 387.0C726.2 384.2 732.0 380.8 738.0 378.0C744.0 375.2 751.8 372.2 758.0 370.5C764.2 368.8 770.3 367.8 775.0 367.5C779.7 367.2 782.8 367.4 786.0 369.0C789.2 370.6 791.7 373.7 794.0 377.0C796.3 380.3 800.0 385.7 800.0 389.0C800.0 392.3 796.7 394.5 794.0 397.0C791.3 399.5 789.5 401.8 784.0 404.0C778.5 406.2 770.2 408.8 761.0 410.0C751.8 411.2 737.0 411.2 729.0 411.0C721.0 410.8 716.5 410.0 713.0 409.0C709.5 408.0 708.0 407.3 708.0 405.0Z" fill="#ffc90e" stroke="#000" stroke-width="8" stroke-linecap="round" stroke-linejoin="round" />
<ellipse cx="822" cy="351" rx="13" ry="17.5" fill="#000" transform="rotate(8 822 351)"/>
<path d="M157.0 396.0C155.1 396.2 149.5 395.6 145.4 397.0C141.3 398.4 136.0 400.9 132.4 404.5C128.8 408.1 125.7 413.9 124.0 418.7C122.3 423.4 121.7 428.4 122.0 433.0C122.3 437.6 123.8 441.9 126.0 446.0C128.2 450.1 131.1 454.4 135.0 457.6C138.9 460.8 144.8 463.5 149.3 465.4C153.9 467.2 158.7 468.1 162.3 468.7C165.9 469.3 169.3 468.9 170.7 469.0" fill="none" stroke="#000" stroke-width="8.5" stroke-linecap="round" stroke-linejoin="round" />
<path d="M189.5 388.0C189.9 392.3 191.2 406.0 192.0 414.0C192.8 422.0 193.3 428.8 194.0 436.0C194.7 443.2 195.7 453.5 196.0 457.0" fill="none" stroke="#000" stroke-width="8.5" stroke-linecap="round" stroke-linejoin="round" />
<path d="M196.0 436.0C196.7 434.2 198.0 427.8 200.0 425.0C202.0 422.2 204.7 420.2 208.0 419.0C211.3 417.8 216.7 416.5 220.0 418.0C223.3 419.5 226.0 424.3 228.0 428.0C230.0 431.7 230.7 436.0 232.0 440.0C233.3 444.0 235.3 450.0 236.0 452.0" fill="none" stroke="#000" stroke-width="8.5" stroke-linecap="round" stroke-linejoin="round" />
<path d="M268.0 412.0C266.7 411.7 263.5 409.2 260.0 410.0C256.5 410.8 250.2 413.2 247.0 417.0C243.8 420.8 241.0 427.7 241.0 433.0C241.0 438.3 243.8 445.7 247.0 449.0C250.2 452.3 256.1 453.8 260.0 453.0C263.9 452.2 268.3 448.7 270.5 444.0C272.7 439.3 273.4 430.3 273.0 425.0C272.6 419.7 268.0 411.5 268.0 412.0C268.0 412.5 271.2 422.3 273.0 428.0C274.8 433.7 276.3 442.0 279.0 446.0C281.7 450.0 287.3 451.0 289.0 452.0" fill="none" stroke="#000" stroke-width="8.5" stroke-linecap="round" stroke-linejoin="round" />
<path d="M300.0 406.0C299.5 409.2 296.6 418.5 297.0 425.0C297.4 431.5 301.6 441.7 302.5 445.0" fill="none" stroke="#000" stroke-width="8.5" stroke-linecap="round" stroke-linejoin="round" />
<path d="M295.0 428.0C295.3 425.0 295.7 414.7 297.0 410.0C298.3 405.3 299.8 403.0 303.0 400.0C306.2 397.0 311.2 393.3 316.0 392.0C320.8 390.7 329.3 392.0 332.0 392.0" fill="none" stroke="#000" stroke-width="8.5" stroke-linecap="round" stroke-linejoin="round" />
<path d="M343.5 372.0C343.2 375.5 341.8 386.0 342.0 393.0C342.2 400.0 343.2 407.8 345.0 414.0C346.8 420.2 349.9 426.7 353.0 430.0C356.1 433.3 359.5 433.5 363.5 434.0C367.5 434.5 374.8 433.2 377.0 433.0" fill="none" stroke="#000" stroke-width="8.5" stroke-linecap="round" stroke-linejoin="round" />
<path d="M385.0 401.0C387.6 400.3 396.6 399.2 400.5 397.0C404.4 394.8 408.0 390.8 408.5 388.0C409.0 385.2 406.1 380.9 403.5 380.0C400.9 379.1 396.3 379.8 393.0 382.5C389.7 385.2 385.3 391.1 383.5 396.0C381.7 400.9 380.9 407.3 382.0 412.0C383.1 416.7 386.4 421.4 390.0 424.0C393.6 426.6 399.5 427.8 403.5 427.5C407.5 427.2 412.2 422.9 414.0 422.0" fill="none" stroke="#000" stroke-width="8.5" stroke-linecap="round" stroke-linejoin="round" />
<path d="M444.5 368.0C442.1 368.0 433.6 366.7 430.0 368.0C426.4 369.3 423.5 372.7 423.0 376.0C422.5 379.3 423.7 384.2 427.0 388.0C430.3 391.8 437.2 396.1 443.0 398.5C448.8 400.9 457.8 400.5 462.0 402.5C466.2 404.5 468.5 407.8 468.5 410.5C468.5 413.2 465.8 416.6 462.0 418.5C458.2 420.4 451.2 421.4 446.0 422.0C440.8 422.6 433.5 422.0 431.0 422.0" fill="none" stroke="#000" stroke-width="8.5" stroke-linecap="round" stroke-linejoin="round" />
<path d="M529.5 387.0C528.3 384.8 525.2 376.5 522.5 373.5C519.8 370.5 515.9 368.8 513.5 369.0C511.1 369.2 508.8 371.8 508.0 375.0C507.2 378.2 507.7 383.9 509.0 388.0C510.3 392.1 513.2 397.0 516.0 399.5C518.8 402.0 523.1 401.8 526.0 403.0C528.9 404.2 530.7 408.2 533.5 406.5C536.3 404.8 540.0 398.2 543.0 393.0C546.0 387.8 550.1 379.6 551.5 375.0C552.9 370.4 552.3 367.3 551.5 365.5C550.7 363.7 548.5 362.8 546.5 364.0C544.5 365.2 542.3 368.7 539.5 372.5C536.7 376.3 531.2 384.6 529.5 387.0" fill="none" stroke="#ed1c24" stroke-width="9" stroke-linecap="round" stroke-linejoin="round" />
<path d="M369.0 471.5C368.5 474.4 366.2 483.4 366.0 489.0C365.8 494.6 365.2 499.8 367.5 505.0C369.8 510.2 374.0 515.9 379.5 520.5C385.0 525.1 391.2 528.9 400.5 532.5C409.8 536.1 423.4 540.0 435.0 542.0C446.6 544.0 464.2 544.1 470.0 544.5" fill="none" stroke="#000" stroke-width="8.5" stroke-linecap="round" stroke-linejoin="round" />
<path d="M455.0 523.5L475.0 528.5L497.5 543.0L475.0 558.0L451.0 571.0" fill="none" stroke="#000" stroke-width="8.5" stroke-linecap="round" stroke-linejoin="round" />
</svg></div>
<div class="abs" style="left:1806px;top:150px;width:5px;height:833px;background:linear-gradient(to right,rgba(150,160,185,.62),rgba(170,180,205,.28) 60%,rgba(190,200,220,0))"></div>
<div class="abs" style="left:10px;top:978px;width:1796px;height:5px;background:linear-gradient(to bottom,rgba(150,160,185,.62),rgba(170,180,205,.28) 60%,rgba(190,200,220,0))"></div>
<div class="abs" style="left:1806px;top:978px;width:5px;height:5px;background:radial-gradient(circle at 0 0,rgba(150,160,185,.62),rgba(190,200,220,0) 5px)"></div>
<div class="abs" style="left:1806px;top:559px;width:5px;height:5px;background:#fff;border:1px solid #3f4048"></div>
<div class="abs" style="left:904px;top:978px;width:5px;height:5px;background:#fff;border:1px solid #3f4048"></div>
<div class="abs" style="left:1806px;top:978px;width:5px;height:5px;background:#fff;border:1px solid #3f4048"></div>
<svg width="40" height="40" viewBox="1603 597 40 40" style="left:1603px;top:597px"><circle cx="1623" cy="617" r="4.2" fill="#c4242e"/><circle cx="1623" cy="617" r="2" fill="none" stroke="#e0525a" stroke-width="0.8"/><g stroke="#4d1230" stroke-width="1.4" stroke-dasharray="1.6 1.4" fill="none"><path d="M1609 617h5.2M1632.4 617h5.2M1623 603v5.2M1623 626.6v5.2"/></g></svg>
<!--ribbon-bottom--><div class="abs" style="left:0;top:136px;width:1920px;height:2px;background:#fafbfc"></div>
<div id="statusbar"></div>
<div id="overlay"><svg width="1920" height="1040" viewBox="0 0 1920 1040" shape-rendering="crispEdges" style="left:0;top:0">
<rect x="0" y="861" width="88" height="4" fill="#2b2a21"/>
<rect x="0" y="865" width="88" height="4" fill="#d9dbc6"/>
<rect x="88" y="865" width="8" height="4" fill="#2b2a21"/>
<rect x="0" y="869" width="96" height="4" fill="#d9dbc6"/>
<rect x="96" y="869" width="4" height="4" fill="#2b2a21"/>
<rect x="0" y="873" width="100" height="4" fill="#d9dbc6"/>
<rect x="100" y="873" width="8" height="4" fill="#2b2a21"/>
<rect x="0" y="877" width="88" height="4" fill="#9bafad"/>
<rect x="88" y="877" width="20" height="4" fill="#d9dbc6"/>
<rect x="108" y="877" width="4" height="4" fill="#2b2a21"/>
<rect x="0" y="881" width="92" height="4" fill="#9bafad"/>
<rect x="92" y="881" width="20" height="4" fill="#d9dbc6"/>
<rect x="112" y="881" width="4" height="4" fill="#2b2a21"/>
<rect x="0" y="885" width="88" height="4" fill="#2b2a21"/>
<rect x="88" y="885" width="8" height="4" fill="#9bafad"/>
<rect x="96" y="885" width="20" height="4" fill="#d9dbc6"/>
<rect x="116" y="885" width="4" height="4" fill="#2b2a21"/>
<rect x="0" y="889" width="16" height="4" fill="#922c4b"/>
<rect x="16" y="889" width="4" height="4" fill="#8e2b4c"/>
<rect x="20" y="889" width="20" height="4" fill="#922c4b"/>
<rect x="40" y="889" width="4" height="4" fill="#8e2b4c"/>
<rect x="44" y="889" width="16" height="4" fill="#922c4b"/>
<rect x="60" y="889" width="4" height="4" fill="#8e2b4c"/>
<rect x="64" y="889" width="24" height="4" fill="#922c4b"/>
<rect x="88" y="889" width="8" height="4" fill="#2b2a21"/>
<rect x="96" y="889" width="12" height="4" fill="#9bafad"/>
<rect x="108" y="889" width="12" height="4" fill="#d9dbc6"/>
<rect x="120" y="889" width="4" height="4" fill="#2b2a21"/>
<rect x="0" y="893" width="16" height="4" fill="#922c4b"/>
<rect x="16" y="893" width="4" height="4" fill="#8e2b4c"/>
<rect x="20" y="893" width="20" height="4" fill="#922c4b"/>
<rect x="40" y="893" width="4" height="4" fill="#8e2b4c"/>
<rect x="44" y="893" width="16" height="4" fill="#922c4b"/>
<rect x="60" y="893" width="4" height="4" fill="#8e2b4c"/>
<rect x="64" y="893" width="16" height="4" fill="#922c4b"/>
<rect x="80" y="893" width="4" height="4" fill="#8e2b4c"/>
<rect x="84" y="893" width="12" height="4" fill="#922c4b"/>
<rect x="96" y="893" width="4" height="4" fill="#2b2a21"/>
<rect x="100" y="893" width="12" height="4" fill="#9bafad"/>
<rect x="112" y="893" width="12" height="4" fill="#d9dbc6"/>
<rect x="124" y="893" width="4" height="4" fill="#2b2a21"/>
<rect x="0" y="897" width="16" height="4" fill="#922c4b"/>
<rect x="16" y="897" width="4" height="4" fill="#8e2b4c"/>
<rect x="20" y="897" width="20" height="4" fill="#922c4b"/>
<rect x="40" y="897" width="4" height="4" fill="#8e2b4c"/>
<rect x="44" y="897" width="16" height="4" fill="#922c4b"/>
<rect x="60" y="897" width="4" height="4" fill="#8e2b4c"/>
<rect x="64" y="897" width="16" height="4" fill="#922c4b"/>
<rect x="80" y="897" width="4" height="4" fill="#8e2b4c"/>
<rect x="84" y="897" width="16" height="4" fill="#922c4b"/>
<rect x="100" y="897" width="8" height="4" fill="#2b2a21"/>
<rect x="108" y="897" width="12" height="4" fill="#9bafad"/>
<rect x="120" y="897" width="8" height="4" fill="#d9dbc6"/>
<rect x="128" y="897" width="4" height="4" fill="#2b2a21"/>
<rect x="0" y="901" width="4" height="4" fill="#b5364a"/>
<rect x="4" y="901" width="52" height="4" fill="#2b2a21"/>
<rect x="56" y="901" width="4" height="4" fill="#b5364a"/>
<rect x="60" y="901" width="4" height="4" fill="#8e2b4c"/>
<rect x="64" y="901" width="16" height="4" fill="#b5364a"/>
<rect x="80" y="901" width="4" height="4" fill="#8e2b4c"/>
<rect x="84" y="901" width="12" height="4" fill="#b5364a"/>
<rect x="96" y="901" width="12" height="4" fill="#922c4b"/>
<rect x="108" y="901" width="4" height="4" fill="#2b2a21"/>
<rect x="112" y="901" width="12" height="4" fill="#9bafad"/>
<rect x="124" y="901" width="8" height="4" fill="#d9dbc6"/>
<rect x="132" y="901" width="4" height="4" fill="#2b2a21"/>
<rect x="0" y="905" width="4" height="4" fill="#2b2a21"/>
<rect x="4" y="905" width="52" height="4" fill="#d9dbc6"/>
<rect x="56" y="905" width="4" height="4" fill="#2b2a21"/>
<rect x="60" y="905" width="4" height="4" fill="#8e2b4c"/>
<rect x="64" y="905" width="16" height="4" fill="#b5364a"/>
<rect x="80" y="905" width="4" height="4" fill="#8e2b4c"/>
<rect x="84" y="905" width="16" height="4" fill="#b5364a"/>
<rect x="100" y="905" width="12" height="4" fill="#922c4b"/>
<rect x="112" y="905" width="4" height="4" fill="#2b2a21"/>
<rect x="116" y="905" width="12" height="4" fill="#9bafad"/>
<rect x="128" y="905" width="8" height="4" fill="#d9dbc6"/>
<rect x="136" y="905" width="4" height="4" fill="#2b2a21"/>
<rect x="0" y="909" width="4" height="4" fill="#2b2a21"/>
<rect x="4" y="909" width="52" height="4" fill="#d9dbc6"/>
<rect x="56" y="909" width="4" height="4" fill="#2b2a21"/>
<rect x="60" y="909" width="4" height="4" fill="#8e2b4c"/>
<rect x="64" y="909" width="16" height="4" fill="#b5364a"/>
<rect x="80" y="909" width="4" height="4" fill="#8e2b4c"/>
<rect x="84" y="909" width="16" height="4" fill="#b5364a"/>
<rect x="100" y="909" width="4" height="4" fill="#8e2b4c"/>
<rect x="104" y="909" width="12" height="4" fill="#922c4b"/>
<rect x="116" y="909" width="4" height="4" fill="#2b2a21"/>
<rect x="120" y="909" width="12" height="4" fill="#9bafad"/>
<rect x="132" y="909" width="8" height="4" fill="#d9dbc6"/>
<rect x="140" y="909" width="4" height="4" fill="#2b2a21"/>
<rect x="0" y="913" width="4" height="4" fill="#2b2a21"/>
<rect x="4" y="913" width="8" height="4" fill="#d9dbc6"/>
<rect x="12" y="913" width="36" height="4" fill="#27291f"/>
<rect x="48" y="913" width="8" height="4" fill="#d9dbc6"/>
<rect x="56" y="913" width="4" height="4" fill="#2b2a21"/>
<rect x="60" y="913" width="4" height="4" fill="#8e2b4c"/>
<rect x="64" y="913" width="16" height="4" fill="#b5364a"/>
<rect x="80" y="913" width="4" height="4" fill="#8e2b4c"/>
<rect x="84" y="913" width="16" height="4" fill="#b5364a"/>
<rect x="100" y="913" width="4" height="4" fill="#8e2b4c"/>
<rect x="104" y="913" width="4" height="4" fill="#b5364a"/>
<rect x="108" y="913" width="12" height="4" fill="#922c4b"/>
<rect x="120" y="913" width="4" height="4" fill="#2b2a21"/>
<rect x="124" y="913" width="8" height="4" fill="#9bafad"/>
<rect x="132" y="913" width="8" height="4" fill="#d9dbc6"/>
<rect x="140" y="913" width="4" height="4" fill="#2b2a21"/>
<rect x="0" y="917" width="4" height="4" fill="#2b2a21"/>
<rect x="4" y="917" width="8" height="4" fill="#d9dbc6"/>
<rect x="12" y="917" width="36" height="4" fill="#27291f"/>
<rect x="48" y="917" width="8" height="4" fill="#d9dbc6"/>
<rect x="56" y="917" width="4" height="4" fill="#2b2a21"/>
<rect x="60" y="917" width="4" height="4" fill="#8e2b4c"/>
<rect x="64" y="917" width="16" height="4" fill="#b5364a"/>
<rect x="80" y="917" width="4" height="4" fill="#8e2b4c"/>
<rect x="84" y="917" width="16" height="4" fill="#b5364a"/>
<rect x="100" y="917" width="4" height="4" fill="#8e2b4c"/>
<rect x="104" y="917" width="8" height="4" fill="#b5364a"/>
<rect x="112" y="917" width="12" height="4" fill="#922c4b"/>
<rect x="124" y="917" width="4" height="4" fill="#2b2a21"/>
<rect x="128" y="917" width="8" height="4" fill="#9bafad"/>
<rect x="136" y="917" width="8" height="4" fill="#d9dbc6"/>
<rect x="144" y="917" width="4" height="4" fill="#2b2a21"/>
<rect x="0" y="921" width="4" height="4" fill="#2b2a21"/>
<rect x="4" y="921" width="8" height="4" fill="#d9dbc6"/>
<rect x="12" y="921" width="36" height="4" fill="#27291f"/>
<rect x="48" y="921" width="8" height="4" fill="#d9dbc6"/>
<rect x="56" y="921" width="4" height="4" fill="#2b2a21"/>
<rect x="60" y="921" width="4" height="4" fill="#8e2b4c"/>
<rect x="64" y="921" width="16" height="4" fill="#b5364a"/>
<rect x="80" y="921" width="4" height="4" fill="#8e2b4c"/>
<rect x="84" y="921" width="16" height="4" fill="#b5364a"/>
<rect x="100" y="921" width="4" height="4" fill="#8e2b4c"/>
<rect x="104" y="921" width="8" height="4" fill="#b5364a"/>
<rect x="112" y="921" width="12" height="4" fill="#922c4b"/>
<rect x="124" y="921" width="4" height="4" fill="#2b2a21"/>
<rect x="128" y="921" width="8" height="4" fill="#9bafad"/>
<rect x="136" y="921" width="8" height="4" fill="#d9dbc6"/>
<rect x="144" y="921" width="4" height="4" fill="#2b2a21"/>
<rect x="0" y="925" width="4" height="4" fill="#2b2a21"/>
<rect x="4" y="925" width="8" height="4" fill="#d9dbc6"/>
<rect x="12" y="925" width="36" height="4" fill="#27291f"/>
<rect x="48" y="925" width="8" height="4" fill="#d9dbc6"/>
<rect x="56" y="925" width="4" height="4" fill="#2b2a21"/>
<rect x="60" y="925" width="4" height="4" fill="#8e2b4c"/>
<rect x="64" y="925" width="16" height="4" fill="#b5364a"/>
<rect x="80" y="925" width="4" height="4" fill="#8e2b4c"/>
<rect x="84" y="925" width="16" height="4" fill="#b5364a"/>
<rect x="100" y="925" width="4" height="4" fill="#8e2b4c"/>
<rect x="104" y="925" width="12" height="4" fill="#b5364a"/>
<rect x="116" y="925" width="12" height="4" fill="#922c4b"/>
<rect x="128" y="925" width="4" height="4" fill="#2b2a21"/>
<rect x="132" y="925" width="8" height="4" fill="#9bafad"/>
<rect x="140" y="925" width="8" height="4" fill="#d9dbc6"/>
<rect x="148" y="925" width="4" height="4" fill="#2b2a21"/>
<rect x="0" y="929" width="4" height="4" fill="#2b2a21"/>
<rect x="4" y="929" width="8" height="4" fill="#d9dbc6"/>
<rect x="12" y="929" width="36" height="4" fill="#27291f"/>
<rect x="48" y="929" width="8" height="4" fill="#d9dbc6"/>
<rect x="56" y="929" width="4" height="4" fill="#2b2a21"/>
<rect x="60" y="929" width="4" height="4" fill="#8e2b4c"/>
<rect x="64" y="929" width="16" height="4" fill="#b5364a"/>
<rect x="80" y="929" width="4" height="4" fill="#8e2b4c"/>
<rect x="84" y="929" width="16" height="4" fill="#b5364a"/>
<rect x="100" y="929" width="4" height="4" fill="#8e2b4c"/>
<rect x="104" y="929" width="12" height="4" fill="#b5364a"/>
<rect x="116" y="929" width="12" height="4" fill="#922c4b"/>
<rect x="128" y="929" width="4" height="4" fill="#2b2a21"/>
<rect x="132" y="929" width="8" height="4" fill="#9bafad"/>
<rect x="140" y="929" width="8" height="4" fill="#d9dbc6"/>
<rect x="148" y="929" width="4" height="4" fill="#2b2a21"/>
<rect x="0" y="933" width="4" height="4" fill="#2b2a21"/>
<rect x="4" y="933" width="8" height="4" fill="#d9dbc6"/>
<rect x="12" y="933" width="36" height="4" fill="#8fa3a5"/>
<rect x="48" y="933" width="8" height="4" fill="#d9dbc6"/>
<rect x="56" y="933" width="4" height="4" fill="#2b2a21"/>
<rect x="60" y="933" width="4" height="4" fill="#8e2b4c"/>
<rect x="64" y="933" width="16" height="4" fill="#b5364a"/>
<rect x="80" y="933" width="4" height="4" fill="#8e2b4c"/>
<rect x="84" y="933" width="16" height="4" fill="#b5364a"/>
<rect x="100" y="933" width="4" height="4" fill="#8e2b4c"/>
<rect x="104" y="933" width="16" height="4" fill="#b5364a"/>
<rect x="120" y="933" width="12" height="4" fill="#922c4b"/>
<rect x="132" y="933" width="4" height="4" fill="#2b2a21"/>
<rect x="136" y="933" width="8" height="4" fill="#9bafad"/>
<rect x="144" y="933" width="8" height="4" fill="#d9dbc6"/>
<rect x="152" y="933" width="4" height="4" fill="#2b2a21"/>
<rect x="0" y="937" width="4" height="4" fill="#2b2a21"/>
<rect x="4" y="937" width="52" height="4" fill="#d9dbc6"/>
<rect x="56" y="937" width="4" height="4" fill="#2b2a21"/>
<rect x="60" y="937" width="4" height="4" fill="#8e2b4c"/>
<rect x="64" y="937" width="16" height="4" fill="#b5364a"/>
<rect x="80" y="937" width="4" height="4" fill="#8e2b4c"/>
<rect x="84" y="937" width="16" height="4" fill="#b5364a"/>
<rect x="100" y="937" width="4" height="4" fill="#8e2b4c"/>
<rect x="104" y="937" width="16" height="4" fill="#b5364a"/>
<rect x="120" y="937" width="12" height="4" fill="#922c4b"/>
<rect x="132" y="937" width="4" height="4" fill="#2b2a21"/>
<rect x="136" y="937" width="8" height="4" fill="#9bafad"/>
<rect x="144" y="937" width="8" height="4" fill="#d9dbc6"/>
<rect x="152" y="937" width="4" height="4" fill="#2b2a21"/>
<rect x="0" y="941" width="4" height="4" fill="#b5364a"/>
<rect x="4" y="941" width="52" height="4" fill="#2b2a21"/>
<rect x="56" y="941" width="4" height="4" fill="#b5364a"/>
<rect x="60" y="941" width="4" height="4" fill="#8e2b4c"/>
<rect x="64" y="941" width="16" height="4" fill="#b5364a"/>
<rect x="80" y="941" width="4" height="4" fill="#8e2b4c"/>
<rect x="84" y="941" width="16" height="4" fill="#b5364a"/>
<rect x="100" y="941" width="4" height="4" fill="#8e2b4c"/>
<rect x="104" y="941" width="16" height="4" fill="#b5364a"/>
<rect x="120" y="941" width="4" height="4" fill="#8e2b4c"/>
<rect x="124" y="941" width="12" height="4" fill="#922c4b"/>
<rect x="136" y="941" width="4" height="4" fill="#2b2a21"/>
<rect x="140" y="941" width="8" height="4" fill="#9bafad"/>
<rect x="148" y="941" width="8" height="4" fill="#d9dbc6"/>
<rect x="156" y="941" width="4" height="4" fill="#2b2a21"/>
<rect x="0" y="945" width="16" height="4" fill="#b5364a"/>
<rect x="16" y="945" width="4" height="4" fill="#8e2b4c"/>
<rect x="20" y="945" width="20" height="4" fill="#b5364a"/>
<rect x="40" y="945" width="4" height="4" fill="#8e2b4c"/>
<rect x="44" y="945" width="16" height="4" fill="#b5364a"/>
<rect x="60" y="945" width="4" height="4" fill="#8e2b4c"/>
<rect x="64" y="945" width="16" height="4" fill="#b5364a"/>
<rect x="80" y="945" width="4" height="4" fill="#8e2b4c"/>
<rect x="84" y="945" width="16" height="4" fill="#b5364a"/>
<rect x="100" y="945" width="4" height="4" fill="#8e2b4c"/>
<rect x="104" y="945" width="16" height="4" fill="#b5364a"/>
<rect x="120" y="945" width="4" height="4" fill="#8e2b4c"/>
<rect x="124" y="945" width="12" height="4" fill="#922c4b"/>
<rect x="136" y="945" width="4" height="4" fill="#2b2a21"/>
<rect x="140" y="945" width="8" height="4" fill="#9bafad"/>
<rect x="148" y="945" width="8" height="4" fill="#d9dbc6"/>
<rect x="156" y="945" width="4" height="4" fill="#2b2a21"/>
<rect x="0" y="949" width="16" height="4" fill="#b5364a"/>
<rect x="16" y="949" width="4" height="4" fill="#8e2b4c"/>
<rect x="20" y="949" width="20" height="4" fill="#b5364a"/>
<rect x="40" y="949" width="4" height="4" fill="#8e2b4c"/>
<rect x="44" y="949" width="16" height="4" fill="#b5364a"/>
<rect x="60" y="949" width="4" height="4" fill="#8e2b4c"/>
<rect x="64" y="949" width="16" height="4" fill="#b5364a"/>
<rect x="80" y="949" width="4" height="4" fill="#8e2b4c"/>
<rect x="84" y="949" width="16" height="4" fill="#b5364a"/>
<rect x="100" y="949" width="4" height="4" fill="#8e2b4c"/>
<rect x="104" y="949" width="16" height="4" fill="#b5364a"/>
<rect x="120" y="949" width="4" height="4" fill="#8e2b4c"/>
<rect x="124" y="949" width="4" height="4" fill="#b5364a"/>
<rect x="128" y="949" width="12" height="4" fill="#922c4b"/>
<rect x="140" y="949" width="4" height="4" fill="#2b2a21"/>
<rect x="144" y="949" width="8" height="4" fill="#9bafad"/>
<rect x="152" y="949" width="8" height="4" fill="#d9dbc6"/>
<rect x="160" y="949" width="4" height="4" fill="#2b2a21"/>
<rect x="0" y="953" width="16" height="4" fill="#b5364a"/>
<rect x="16" y="953" width="4" height="4" fill="#8e2b4c"/>
<rect x="20" y="953" width="20" height="4" fill="#b5364a"/>
<rect x="40" y="953" width="4" height="4" fill="#8e2b4c"/>
<rect x="44" y="953" width="16" height="4" fill="#b5364a"/>
<rect x="60" y="953" width="4" height="4" fill="#8e2b4c"/>
<rect x="64" y="953" width="16" height="4" fill="#b5364a"/>
<rect x="80" y="953" width="4" height="4" fill="#8e2b4c"/>
<rect x="84" y="953" width="16" height="4" fill="#b5364a"/>
<rect x="100" y="953" width="4" height="4" fill="#8e2b4c"/>
<rect x="104" y="953" width="16" height="4" fill="#b5364a"/>
<rect x="120" y="953" width="4" height="4" fill="#8e2b4c"/>
<rect x="124" y="953" width="4" height="4" fill="#b5364a"/>
<rect x="128" y="953" width="12" height="4" fill="#922c4b"/>
<rect x="140" y="953" width="4" height="4" fill="#2b2a21"/>
<rect x="144" y="953" width="12" height="4" fill="#9bafad"/>
<rect x="156" y="953" width="4" height="4" fill="#c4cfbb"/>
<rect x="160" y="953" width="4" height="4" fill="#2b2a21"/>
<rect x="0" y="957" width="148" height="4" fill="#2b2a21"/>
<rect x="148" y="957" width="12" height="4" fill="#9bafad"/>
<rect x="160" y="957" width="4" height="4" fill="#c4cfbb"/>
<rect x="164" y="957" width="4" height="4" fill="#2b2a21"/>
<rect x="0" y="961" width="144" height="4" fill="#d9dbc6"/>
<rect x="144" y="961" width="4" height="4" fill="#2b2a21"/>
<rect x="148" y="961" width="12" height="4" fill="#9bafad"/>
<rect x="160" y="961" width="4" height="4" fill="#c4cfbb"/>
<rect x="164" y="961" width="4" height="4" fill="#2b2a21"/>
<rect x="0" y="965" width="148" height="4" fill="#c4cfbb"/>
<rect x="148" y="965" width="4" height="4" fill="#2b2a21"/>
<rect x="152" y="965" width="12" height="4" fill="#9bafad"/>
<rect x="164" y="965" width="4" height="4" fill="#c4cfbb"/>
<rect x="168" y="965" width="4" height="4" fill="#2b2a21"/>
<rect x="0" y="969" width="148" height="4" fill="#c4cfbb"/>
<rect x="148" y="969" width="4" height="4" fill="#2b2a21"/>
<rect x="152" y="969" width="12" height="4" fill="#9bafad"/>
<rect x="164" y="969" width="4" height="4" fill="#b7c6bf"/>
<rect x="168" y="969" width="4" height="4" fill="#2b2a21"/>
<rect x="0" y="973" width="72" height="4" fill="#2b2a21"/>
<rect x="72" y="973" width="8" height="4" fill="#c4cfbb"/>
<rect x="80" y="973" width="76" height="4" fill="#2b2a21"/>
<rect x="156" y="973" width="12" height="4" fill="#9bafad"/>
<rect x="168" y="973" width="4" height="4" fill="#b7c6bf"/>
<rect x="172" y="973" width="4" height="4" fill="#2b2a21"/>
<rect x="0" y="977" width="8" height="4" fill="#922c4b"/>
<rect x="8" y="977" width="4" height="4" fill="#8e2b4c"/>
<rect x="12" y="977" width="16" height="4" fill="#922c4b"/>
<rect x="28" y="977" width="4" height="4" fill="#8e2b4c"/>
<rect x="32" y="977" width="16" height="4" fill="#922c4b"/>
<rect x="48" y="977" width="4" height="4" fill="#8e2b4c"/>
<rect x="52" y="977" width="16" height="4" fill="#922c4b"/>
<rect x="68" y="977" width="4" height="4" fill="#2b2a21"/>
<rect x="72" y="977" width="8" height="4" fill="#c4cfbb"/>
<rect x="80" y="977" width="4" height="4" fill="#2b2a21"/>
<rect x="84" y="977" width="16" height="4" fill="#922c4b"/>
<rect x="100" y="977" width="4" height="4" fill="#8e2b4c"/>
<rect x="104" y="977" width="16" height="4" fill="#922c4b"/>
<rect x="120" y="977" width="4" height="4" fill="#8e2b4c"/>
<rect x="124" y="977" width="16" height="4" fill="#922c4b"/>
<rect x="140" y="977" width="4" height="4" fill="#2b2a21"/>
<rect x="144" y="977" width="8" height="4" fill="#c4cfbb"/>
<rect x="152" y="977" width="4" height="4" fill="#2b2a21"/>
<rect x="156" y="977" width="12" height="4" fill="#9bafad"/>
<rect x="168" y="977" width="4" height="4" fill="#b7c6bf"/>
<rect x="172" y="977" width="4" height="4" fill="#2b2a21"/>
<rect x="0" y="981" width="8" height="4" fill="#922c4b"/>
<rect x="8" y="981" width="4" height="4" fill="#8e2b4c"/>
<rect x="12" y="981" width="16" height="4" fill="#922c4b"/>
<rect x="28" y="981" width="4" height="4" fill="#8e2b4c"/>
<rect x="32" y="981" width="16" height="4" fill="#922c4b"/>
<rect x="48" y="981" width="4" height="4" fill="#8e2b4c"/>
<rect x="52" y="981" width="16" height="4" fill="#922c4b"/>
<rect x="68" y="981" width="4" height="4" fill="#2b2a21"/>
<rect x="72" y="981" width="8" height="4" fill="#c4cfbb"/>
<rect x="80" y="981" width="4" height="4" fill="#2b2a21"/>
<rect x="84" y="981" width="16" height="4" fill="#b5364a"/>
<rect x="100" y="981" width="4" height="4" fill="#8e2b4c"/>
<rect x="104" y="981" width="16" height="4" fill="#b5364a"/>
<rect x="120" y="981" width="4" height="4" fill="#8e2b4c"/>
<rect x="124" y="981" width="16" height="4" fill="#b5364a"/>
<rect x="140" y="981" width="4" height="4" fill="#2b2a21"/>
<rect x="144" y="981" width="12" height="4" fill="#c4cfbb"/>
<rect x="156" y="981" width="4" height="4" fill="#2b2a21"/>
<rect x="160" y="981" width="8" height="4" fill="#9bafad"/>
<rect x="168" y="981" width="4" height="4" fill="#b7c6bf"/>
<rect x="172" y="981" width="4" height="4" fill="#2b2a21"/>
<rect x="236" y="981" width="48" height="4" fill="#24120a"/>
<rect x="0" y="985" width="8" height="4" fill="#b5364a"/>
<rect x="8" y="985" width="4" height="4" fill="#8e2b4c"/>
<rect x="12" y="985" width="16" height="4" fill="#b5364a"/>
<rect x="28" y="985" width="4" height="4" fill="#8e2b4c"/>
<rect x="32" y="985" width="16" height="4" fill="#b5364a"/>
<rect x="48" y="985" width="4" height="4" fill="#8e2b4c"/>
<rect x="52" y="985" width="16" height="4" fill="#b5364a"/>
<rect x="68" y="985" width="4" height="4" fill="#2b2a21"/>
<rect x="72" y="985" width="8" height="4" fill="#c4cfbb"/>
<rect x="80" y="985" width="4" height="4" fill="#2b2a21"/>
<rect x="84" y="985" width="16" height="4" fill="#b5364a"/>
<rect x="100" y="985" width="4" height="4" fill="#8e2b4c"/>
<rect x="104" y="985" width="16" height="4" fill="#b5364a"/>
<rect x="120" y="985" width="4" height="4" fill="#8e2b4c"/>
<rect x="124" y="985" width="16" height="4" fill="#b5364a"/>
<rect x="140" y="985" width="4" height="4" fill="#2b2a21"/>
<rect x="144" y="985" width="12" height="4" fill="#c4cfbb"/>
<rect x="156" y="985" width="16" height="4" fill="#2b2a21"/>
<rect x="232" y="985" width="4" height="4" fill="#24120a"/>
<rect x="236" y="985" width="48" height="4" fill="#d3a666"/>
<rect x="284" y="985" width="4" height="4" fill="#24120a"/>
<rect x="0" y="989" width="8" height="4" fill="#b5364a"/>
<rect x="8" y="989" width="4" height="4" fill="#8e2b4c"/>
<rect x="12" y="989" width="16" height="4" fill="#b5364a"/>
<rect x="28" y="989" width="4" height="4" fill="#8e2b4c"/>
<rect x="32" y="989" width="16" height="4" fill="#b5364a"/>
<rect x="48" y="989" width="4" height="4" fill="#8e2b4c"/>
<rect x="52" y="989" width="16" height="4" fill="#b5364a"/>
<rect x="68" y="989" width="4" height="4" fill="#2b2a21"/>
<rect x="72" y="989" width="8" height="4" fill="#c4cfbb"/>
<rect x="80" y="989" width="4" height="4" fill="#2b2a21"/>
<rect x="84" y="989" width="16" height="4" fill="#b5364a"/>
<rect x="100" y="989" width="4" height="4" fill="#8e2b4c"/>
<rect x="104" y="989" width="16" height="4" fill="#b5364a"/>
<rect x="120" y="989" width="4" height="4" fill="#8e2b4c"/>
<rect x="124" y="989" width="16" height="4" fill="#b5364a"/>
<rect x="140" y="989" width="4" height="4" fill="#2b2a21"/>
<rect x="144" y="989" width="12" height="4" fill="#c4cfbb"/>
<rect x="156" y="989" width="4" height="4" fill="#2b2a21"/>
<rect x="232" y="989" width="4" height="4" fill="#24120a"/>
<rect x="236" y="989" width="4" height="4" fill="#b98a4c"/>
<rect x="240" y="989" width="40" height="4" fill="#c99a5b"/>
<rect x="280" y="989" width="4" height="4" fill="#b98a4c"/>
<rect x="284" y="989" width="4" height="4" fill="#24120a"/>
<rect x="0" y="993" width="8" height="4" fill="#b5364a"/>
<rect x="8" y="993" width="4" height="4" fill="#8e2b4c"/>
<rect x="12" y="993" width="16" height="4" fill="#b5364a"/>
<rect x="28" y="993" width="4" height="4" fill="#8e2b4c"/>
<rect x="32" y="993" width="16" height="4" fill="#b5364a"/>
<rect x="48" y="993" width="4" height="4" fill="#8e2b4c"/>
<rect x="52" y="993" width="16" height="4" fill="#b5364a"/>
<rect x="68" y="993" width="4" height="4" fill="#2b2a21"/>
<rect x="72" y="993" width="8" height="4" fill="#c4cfbb"/>
<rect x="80" y="993" width="4" height="4" fill="#2b2a21"/>
<rect x="84" y="993" width="16" height="4" fill="#b5364a"/>
<rect x="100" y="993" width="4" height="4" fill="#8e2b4c"/>
<rect x="104" y="993" width="16" height="4" fill="#b5364a"/>
<rect x="120" y="993" width="4" height="4" fill="#8e2b4c"/>
<rect x="124" y="993" width="16" height="4" fill="#b5364a"/>
<rect x="140" y="993" width="4" height="4" fill="#2b2a21"/>
<rect x="144" y="993" width="12" height="4" fill="#c4cfbb"/>
<rect x="156" y="993" width="4" height="4" fill="#2b2a21"/>
<rect x="232" y="993" width="4" height="4" fill="#24120a"/>
<rect x="236" y="993" width="4" height="4" fill="#b98a4c"/>
<rect x="240" y="993" width="40" height="4" fill="#c99a5b"/>
<rect x="280" y="993" width="4" height="4" fill="#b98a4c"/>
<rect x="284" y="993" width="4" height="4" fill="#24120a"/>
<rect x="472" y="993" width="12" height="4" fill="#33211f"/>
<rect x="0" y="997" width="8" height="4" fill="#b5364a"/>
<rect x="8" y="997" width="4" height="4" fill="#8e2b4c"/>
<rect x="12" y="997" width="16" height="4" fill="#b5364a"/>
<rect x="28" y="997" width="4" height="4" fill="#8e2b4c"/>
<rect x="32" y="997" width="16" height="4" fill="#b5364a"/>
<rect x="48" y="997" width="4" height="4" fill="#8e2b4c"/>
<rect x="52" y="997" width="16" height="4" fill="#b5364a"/>
<rect x="68" y="997" width="4" height="4" fill="#2b2a21"/>
<rect x="72" y="997" width="8" height="4" fill="#c4cfbb"/>
<rect x="80" y="997" width="4" height="4" fill="#2b2a21"/>
<rect x="84" y="997" width="16" height="4" fill="#b5364a"/>
<rect x="100" y="997" width="4" height="4" fill="#8e2b4c"/>
<rect x="104" y="997" width="16" height="4" fill="#b5364a"/>
<rect x="120" y="997" width="4" height="4" fill="#8e2b4c"/>
<rect x="124" y="997" width="16" height="4" fill="#b5364a"/>
<rect x="140" y="997" width="4" height="4" fill="#2b2a21"/>
<rect x="144" y="997" width="12" height="4" fill="#c4cfbb"/>
<rect x="156" y="997" width="4" height="4" fill="#2b2a21"/>
<rect x="232" y="997" width="4" height="4" fill="#24120a"/>
<rect x="236" y="997" width="48" height="4" fill="#c99a5b"/>
<rect x="284" y="997" width="4" height="4" fill="#24120a"/>
<rect x="468" y="997" width="4" height="4" fill="#33211f"/>
<rect x="472" y="997" width="12" height="4" fill="#d63b3a"/>
<rect x="484" y="997" width="4" height="4" fill="#33211f"/>
<rect x="0" y="1001" width="8" height="4" fill="#b5364a"/>
<rect x="8" y="1001" width="4" height="4" fill="#8e2b4c"/>
<rect x="12" y="1001" width="16" height="4" fill="#b5364a"/>
<rect x="28" y="1001" width="4" height="4" fill="#8e2b4c"/>
<rect x="32" y="1001" width="16" height="4" fill="#b5364a"/>
<rect x="48" y="1001" width="4" height="4" fill="#8e2b4c"/>
<rect x="52" y="1001" width="16" height="4" fill="#b5364a"/>
<rect x="68" y="1001" width="4" height="4" fill="#2b2a21"/>
<rect x="72" y="1001" width="8" height="4" fill="#c4cfbb"/>
<rect x="80" y="1001" width="4" height="4" fill="#2b2a21"/>
<rect x="84" y="1001" width="16" height="4" fill="#b5364a"/>
<rect x="100" y="1001" width="4" height="4" fill="#8e2b4c"/>
<rect x="104" y="1001" width="16" height="4" fill="#b5364a"/>
<rect x="120" y="1001" width="4" height="4" fill="#8e2b4c"/>
<rect x="124" y="1001" width="16" height="4" fill="#b5364a"/>
<rect x="140" y="1001" width="4" height="4" fill="#2b2a21"/>
<rect x="144" y="1001" width="12" height="4" fill="#c4cfbb"/>
<rect x="156" y="1001" width="4" height="4" fill="#2b2a21"/>
<rect x="232" y="1001" width="4" height="4" fill="#24120a"/>
<rect x="236" y="1001" width="4" height="4" fill="#c99a5b"/>
<rect x="240" y="1001" width="20" height="4" fill="#a87a3e"/>
<rect x="260" y="1001" width="4" height="4" fill="#c99a5b"/>
<rect x="264" y="1001" width="16" height="4" fill="#a87a3e"/>
<rect x="280" y="1001" width="4" height="4" fill="#c99a5b"/>
<rect x="284" y="1001" width="4" height="4" fill="#24120a"/>
<rect x="468" y="1001" width="4" height="4" fill="#33211f"/>
<rect x="472" y="1001" width="12" height="4" fill="#d63b3a"/>
<rect x="484" y="1001" width="4" height="4" fill="#33211f"/>
<rect x="0" y="1005" width="8" height="4" fill="#b5364a"/>
<rect x="8" y="1005" width="4" height="4" fill="#8e2b4c"/>
<rect x="12" y="1005" width="16" height="4" fill="#b5364a"/>
<rect x="28" y="1005" width="4" height="4" fill="#8e2b4c"/>
<rect x="32" y="1005" width="16" height="4" fill="#b5364a"/>
<rect x="48" y="1005" width="4" height="4" fill="#8e2b4c"/>
<rect x="52" y="1005" width="16" height="4" fill="#b5364a"/>
<rect x="68" y="1005" width="4" height="4" fill="#2b2a21"/>
<rect x="72" y="1005" width="8" height="4" fill="#c4cfbb"/>
<rect x="80" y="1005" width="60" height="4" fill="#2b2a21"/>
<rect x="140" y="1005" width="16" height="4" fill="#c4cfbb"/>
<rect x="156" y="1005" width="4" height="4" fill="#2b2a21"/>
<rect x="200" y="1005" width="16" height="4" fill="#24120a"/>
<rect x="232" y="1005" width="4" height="4" fill="#24120a"/>
<rect x="236" y="1005" width="12" height="4" fill="#c99a5b"/>
<rect x="248" y="1005" width="8" height="4" fill="#a87a3e"/>
<rect x="256" y="1005" width="8" height="4" fill="#c99a5b"/>
<rect x="264" y="1005" width="4" height="4" fill="#a87a3e"/>
<rect x="268" y="1005" width="8" height="4" fill="#c99a5b"/>
<rect x="276" y="1005" width="4" height="4" fill="#a87a3e"/>
<rect x="280" y="1005" width="4" height="4" fill="#c99a5b"/>
<rect x="284" y="1005" width="4" height="4" fill="#24120a"/>
<rect x="328" y="1005" width="16" height="4" fill="#24120a"/>
<rect x="392" y="1005" width="16" height="4" fill="#24120a"/>
<rect x="456" y="1005" width="8" height="4" fill="#24120a"/>
<rect x="464" y="1005" width="4" height="4" fill="#33211f"/>
<rect x="468" y="1005" width="4" height="4" fill="#e3dccf"/>
<rect x="472" y="1005" width="4" height="4" fill="#d63b3a"/>
<rect x="476" y="1005" width="12" height="4" fill="#f0ebe4"/>
<rect x="488" y="1005" width="4" height="4" fill="#33211f"/>
<rect x="520" y="1005" width="16" height="4" fill="#24120a"/>
<rect x="584" y="1005" width="16" height="4" fill="#24120a"/>
<rect x="648" y="1005" width="16" height="4" fill="#24120a"/>
<rect x="712" y="1005" width="16" height="4" fill="#24120a"/>
<rect x="776" y="1005" width="16" height="4" fill="#24120a"/>
<rect x="840" y="1005" width="16" height="4" fill="#24120a"/>
<rect x="904" y="1005" width="16" height="4" fill="#24120a"/>
<rect x="968" y="1005" width="16" height="4" fill="#24120a"/>
<rect x="1032" y="1005" width="16" height="4" fill="#24120a"/>
<rect x="1096" y="1005" width="16" height="4" fill="#24120a"/>
<rect x="1160" y="1005" width="16" height="4" fill="#24120a"/>
<rect x="1224" y="1005" width="16" height="4" fill="#24120a"/>
<rect x="1288" y="1005" width="16" height="4" fill="#24120a"/>
<rect x="1352" y="1005" width="16" height="4" fill="#24120a"/>
<rect x="1416" y="1005" width="16" height="4" fill="#24120a"/>
<rect x="1480" y="1005" width="16" height="4" fill="#24120a"/>
<rect x="1544" y="1005" width="16" height="4" fill="#24120a"/>
<rect x="1608" y="1005" width="16" height="4" fill="#24120a"/>
<rect x="1672" y="1005" width="16" height="4" fill="#24120a"/>
<rect x="1736" y="1005" width="16" height="4" fill="#24120a"/>
<rect x="1800" y="1005" width="16" height="4" fill="#24120a"/>
<rect x="1864" y="1005" width="16" height="4" fill="#24120a"/>
<rect x="0" y="1009" width="8" height="4" fill="#b5364a"/>
<rect x="8" y="1009" width="4" height="4" fill="#8e2b4c"/>
<rect x="12" y="1009" width="16" height="4" fill="#b5364a"/>
<rect x="28" y="1009" width="4" height="4" fill="#8e2b4c"/>
<rect x="32" y="1009" width="16" height="4" fill="#b5364a"/>
<rect x="48" y="1009" width="4" height="4" fill="#8e2b4c"/>
<rect x="52" y="1009" width="16" height="4" fill="#b5364a"/>
<rect x="68" y="1009" width="4" height="4" fill="#2b2a21"/>
<rect x="72" y="1009" width="8" height="4" fill="#c4cfbb"/>
<rect x="80" y="1009" width="60" height="4" fill="#d9dbc6"/>
<rect x="140" y="1009" width="16" height="4" fill="#c4cfbb"/>
<rect x="156" y="1009" width="4" height="4" fill="#2b2a21"/>
<rect x="196" y="1009" width="4" height="4" fill="#24120a"/>
<rect x="200" y="1009" width="8" height="4" fill="#b87c52"/>
<rect x="208" y="1009" width="8" height="4" fill="#c9925f"/>
<rect x="216" y="1009" width="4" height="4" fill="#24120a"/>
<rect x="232" y="1009" width="4" height="4" fill="#24120a"/>
<rect x="236" y="1009" width="48" height="4" fill="#c99a5b"/>
<rect x="284" y="1009" width="4" height="4" fill="#24120a"/>
<rect x="324" y="1009" width="4" height="4" fill="#24120a"/>
<rect x="328" y="1009" width="8" height="4" fill="#b87c52"/>
<rect x="336" y="1009" width="8" height="4" fill="#c9925f"/>
<rect x="344" y="1009" width="4" height="4" fill="#24120a"/>
<rect x="388" y="1009" width="4" height="4" fill="#24120a"/>
<rect x="392" y="1009" width="8" height="4" fill="#b87c52"/>
<rect x="400" y="1009" width="8" height="4" fill="#c9925f"/>
<rect x="408" y="1009" width="4" height="4" fill="#24120a"/>
<rect x="452" y="1009" width="4" height="4" fill="#24120a"/>
<rect x="456" y="1009" width="8" height="4" fill="#b87c52"/>
<rect x="464" y="1009" width="8" height="4" fill="#33211f"/>
<rect x="472" y="1009" width="4" height="4" fill="#f0ebe4"/>
<rect x="476" y="1009" width="4" height="4" fill="#2a2a24"/>
<rect x="480" y="1009" width="8" height="4" fill="#f0ebe4"/>
<rect x="488" y="1009" width="12" height="4" fill="#33211f"/>
<rect x="516" y="1009" width="4" height="4" fill="#24120a"/>
<rect x="520" y="1009" width="8" height="4" fill="#b87c52"/>
<rect x="528" y="1009" width="8" height="4" fill="#c9925f"/>
<rect x="536" y="1009" width="4" height="4" fill="#24120a"/>
<rect x="580" y="1009" width="4" height="4" fill="#24120a"/>
<rect x="584" y="1009" width="8" height="4" fill="#b87c52"/>
<rect x="592" y="1009" width="8" height="4" fill="#c9925f"/>
<rect x="600" y="1009" width="4" height="4" fill="#24120a"/>
<rect x="644" y="1009" width="4" height="4" fill="#24120a"/>
<rect x="648" y="1009" width="8" height="4" fill="#b87c52"/>
<rect x="656" y="1009" width="8" height="4" fill="#c9925f"/>
<rect x="664" y="1009" width="4" height="4" fill="#24120a"/>
<rect x="708" y="1009" width="4" height="4" fill="#24120a"/>
<rect x="712" y="1009" width="8" height="4" fill="#b87c52"/>
<rect x="720" y="1009" width="8" height="4" fill="#c9925f"/>
<rect x="728" y="1009" width="4" height="4" fill="#24120a"/>
<rect x="772" y="1009" width="4" height="4" fill="#24120a"/>
<rect x="776" y="1009" width="8" height="4" fill="#b87c52"/>
<rect x="784" y="1009" width="8" height="4" fill="#c9925f"/>
<rect x="792" y="1009" width="4" height="4" fill="#24120a"/>
<rect x="836" y="1009" width="4" height="4" fill="#24120a"/>
<rect x="840" y="1009" width="8" height="4" fill="#b87c52"/>
<rect x="848" y="1009" width="8" height="4" fill="#c9925f"/>
<rect x="856" y="1009" width="4" height="4" fill="#24120a"/>
<rect x="900" y="1009" width="4" height="4" fill="#24120a"/>
<rect x="904" y="1009" width="8" height="4" fill="#b87c52"/>
<rect x="912" y="1009" width="8" height="4" fill="#c9925f"/>
<rect x="920" y="1009" width="4" height="4" fill="#24120a"/>
<rect x="964" y="1009" width="4" height="4" fill="#24120a"/>
<rect x="968" y="1009" width="8" height="4" fill="#b87c52"/>
<rect x="976" y="1009" width="8" height="4" fill="#c9925f"/>
<rect x="984" y="1009" width="4" height="4" fill="#24120a"/>
<rect x="1028" y="1009" width="4" height="4" fill="#24120a"/>
<rect x="1032" y="1009" width="8" height="4" fill="#b87c52"/>
<rect x="1040" y="1009" width="8" height="4" fill="#c9925f"/>
<rect x="1048" y="1009" width="4" height="4" fill="#24120a"/>
<rect x="1092" y="1009" width="4" height="4" fill="#24120a"/>
<rect x="1096" y="1009" width="8" height="4" fill="#b87c52"/>
<rect x="1104" y="1009" width="8" height="4" fill="#c9925f"/>
<rect x="1112" y="1009" width="4" height="4" fill="#24120a"/>
<rect x="1156" y="1009" width="4" height="4" fill="#24120a"/>
<rect x="1160" y="1009" width="8" height="4" fill="#b87c52"/>
<rect x="1168" y="1009" width="8" height="4" fill="#c9925f"/>
<rect x="1176" y="1009" width="4" height="4" fill="#24120a"/>
<rect x="1220" y="1009" width="4" height="4" fill="#24120a"/>
<rect x="1224" y="1009" width="8" height="4" fill="#b87c52"/>
<rect x="1232" y="1009" width="8" height="4" fill="#c9925f"/>
<rect x="1240" y="1009" width="4" height="4" fill="#24120a"/>
<rect x="1284" y="1009" width="4" height="4" fill="#24120a"/>
<rect x="1288" y="1009" width="8" height="4" fill="#b87c52"/>
<rect x="1296" y="1009" width="8" height="4" fill="#c9925f"/>
<rect x="1304" y="1009" width="4" height="4" fill="#24120a"/>
<rect x="1348" y="1009" width="4" height="4" fill="#24120a"/>
<rect x="1352" y="1009" width="8" height="4" fill="#b87c52"/>
<rect x="1360" y="1009" width="8" height="4" fill="#c9925f"/>
<rect x="1368" y="1009" width="4" height="4" fill="#24120a"/>
<rect x="1412" y="1009" width="4" height="4" fill="#24120a"/>
<rect x="1416" y="1009" width="8" height="4" fill="#b87c52"/>
<rect x="1424" y="1009" width="8" height="4" fill="#c9925f"/>
<rect x="1432" y="1009" width="4" height="4" fill="#24120a"/>
<rect x="1476" y="1009" width="4" height="4" fill="#24120a"/>
<rect x="1480" y="1009" width="8" height="4" fill="#b87c52"/>
<rect x="1488" y="1009" width="8" height="4" fill="#c9925f"/>
<rect x="1496" y="1009" width="4" height="4" fill="#24120a"/>
<rect x="1540" y="1009" width="4" height="4" fill="#24120a"/>
<rect x="1544" y="1009" width="8" height="4" fill="#b87c52"/>
<rect x="1552" y="1009" width="8" height="4" fill="#c9925f"/>
<rect x="1560" y="1009" width="4" height="4" fill="#24120a"/>
<rect x="1604" y="1009" width="4" height="4" fill="#24120a"/>
<rect x="1608" y="1009" width="8" height="4" fill="#b87c52"/>
<rect x="1616" y="1009" width="8" height="4" fill="#c9925f"/>
<rect x="1624" y="1009" width="4" height="4" fill="#24120a"/>
<rect x="1668" y="1009" width="4" height="4" fill="#24120a"/>
<rect x="1672" y="1009" width="8" height="4" fill="#b87c52"/>
<rect x="1680" y="1009" width="8" height="4" fill="#c9925f"/>
<rect x="1688" y="1009" width="4" height="4" fill="#24120a"/>
<rect x="1732" y="1009" width="4" height="4" fill="#24120a"/>
<rect x="1736" y="1009" width="8" height="4" fill="#b87c52"/>
<rect x="1744" y="1009" width="8" height="4" fill="#c9925f"/>
<rect x="1752" y="1009" width="4" height="4" fill="#24120a"/>
<rect x="1796" y="1009" width="4" height="4" fill="#24120a"/>
<rect x="1800" y="1009" width="8" height="4" fill="#b87c52"/>
<rect x="1808" y="1009" width="8" height="4" fill="#c9925f"/>
<rect x="1816" y="1009" width="4" height="4" fill="#24120a"/>
<rect x="1860" y="1009" width="4" height="4" fill="#24120a"/>
<rect x="1864" y="1009" width="8" height="4" fill="#b87c52"/>
<rect x="1872" y="1009" width="8" height="4" fill="#c9925f"/>
<rect x="1880" y="1009" width="4" height="4" fill="#24120a"/>
<rect x="0" y="1013" width="8" height="4" fill="#b5364a"/>
<rect x="8" y="1013" width="4" height="4" fill="#8e2b4c"/>
<rect x="12" y="1013" width="4" height="4" fill="#b5364a"/>
<rect x="16" y="1013" width="8" height="4" fill="#2b2a21"/>
<rect x="24" y="1013" width="4" height="4" fill="#b5364a"/>
<rect x="28" y="1013" width="4" height="4" fill="#8e2b4c"/>
<rect x="32" y="1013" width="4" height="4" fill="#b5364a"/>
<rect x="36" y="1013" width="8" height="4" fill="#2b2a21"/>
<rect x="44" y="1013" width="4" height="4" fill="#b5364a"/>
<rect x="48" y="1013" width="4" height="4" fill="#8e2b4c"/>
<rect x="52" y="1013" width="16" height="4" fill="#b5364a"/>
<rect x="68" y="1013" width="4" height="4" fill="#2b2a21"/>
<rect x="72" y="1013" width="80" height="4" fill="#c4cfbb"/>
<rect x="152" y="1013" width="4" height="4" fill="#2b2a21"/>
<rect x="196" y="1013" width="4" height="4" fill="#24120a"/>
<rect x="200" y="1013" width="16" height="4" fill="#a66a43"/>
<rect x="216" y="1013" width="4" height="4" fill="#24120a"/>
<rect x="232" y="1013" width="4" height="4" fill="#24120a"/>
<rect x="236" y="1013" width="48" height="4" fill="#c99a5b"/>
<rect x="284" y="1013" width="4" height="4" fill="#24120a"/>
<rect x="324" y="1013" width="4" height="4" fill="#24120a"/>
<rect x="328" y="1013" width="16" height="4" fill="#a66a43"/>
<rect x="344" y="1013" width="4" height="4" fill="#24120a"/>
<rect x="388" y="1013" width="4" height="4" fill="#24120a"/>
<rect x="392" y="1013" width="16" height="4" fill="#a66a43"/>
<rect x="408" y="1013" width="4" height="4" fill="#24120a"/>
<rect x="452" y="1013" width="4" height="4" fill="#24120a"/>
<rect x="456" y="1013" width="4" height="4" fill="#a66a43"/>
<rect x="460" y="1013" width="4" height="4" fill="#33211f"/>
<rect x="464" y="1013" width="8" height="4" fill="#e8c24c"/>
<rect x="472" y="1013" width="4" height="4" fill="#f0ebe4"/>
<rect x="476" y="1013" width="4" height="4" fill="#2a2a24"/>
<rect x="480" y="1013" width="8" height="4" fill="#f0ebe4"/>
<rect x="488" y="1013" width="12" height="4" fill="#e2ddd6"/>
<rect x="500" y="1013" width="4" height="4" fill="#33211f"/>
<rect x="516" y="1013" width="4" height="4" fill="#24120a"/>
<rect x="520" y="1013" width="16" height="4" fill="#a66a43"/>
<rect x="536" y="1013" width="4" height="4" fill="#24120a"/>
<rect x="580" y="1013" width="4" height="4" fill="#24120a"/>
<rect x="584" y="1013" width="16" height="4" fill="#a66a43"/>
<rect x="600" y="1013" width="4" height="4" fill="#24120a"/>
<rect x="644" y="1013" width="4" height="4" fill="#24120a"/>
<rect x="648" y="1013" width="16" height="4" fill="#a66a43"/>
<rect x="664" y="1013" width="4" height="4" fill="#24120a"/>
<rect x="708" y="1013" width="4" height="4" fill="#24120a"/>
<rect x="712" y="1013" width="16" height="4" fill="#a66a43"/>
<rect x="728" y="1013" width="4" height="4" fill="#24120a"/>
<rect x="772" y="1013" width="4" height="4" fill="#24120a"/>
<rect x="776" y="1013" width="16" height="4" fill="#a66a43"/>
<rect x="792" y="1013" width="4" height="4" fill="#24120a"/>
<rect x="836" y="1013" width="4" height="4" fill="#24120a"/>
<rect x="840" y="1013" width="16" height="4" fill="#a66a43"/>
<rect x="856" y="1013" width="4" height="4" fill="#24120a"/>
<rect x="900" y="1013" width="4" height="4" fill="#24120a"/>
<rect x="904" y="1013" width="16" height="4" fill="#a66a43"/>
<rect x="920" y="1013" width="4" height="4" fill="#24120a"/>
<rect x="964" y="1013" width="4" height="4" fill="#24120a"/>
<rect x="968" y="1013" width="16" height="4" fill="#a66a43"/>
<rect x="984" y="1013" width="4" height="4" fill="#24120a"/>
<rect x="1028" y="1013" width="4" height="4" fill="#24120a"/>
<rect x="1032" y="1013" width="16" height="4" fill="#a66a43"/>
<rect x="1048" y="1013" width="4" height="4" fill="#24120a"/>
<rect x="1092" y="1013" width="4" height="4" fill="#24120a"/>
<rect x="1096" y="1013" width="16" height="4" fill="#a66a43"/>
<rect x="1112" y="1013" width="4" height="4" fill="#24120a"/>
<rect x="1156" y="1013" width="4" height="4" fill="#24120a"/>
<rect x="1160" y="1013" width="16" height="4" fill="#a66a43"/>
<rect x="1176" y="1013" width="4" height="4" fill="#24120a"/>
<rect x="1220" y="1013" width="4" height="4" fill="#24120a"/>
<rect x="1224" y="1013" width="16" height="4" fill="#a66a43"/>
<rect x="1240" y="1013" width="4" height="4" fill="#24120a"/>
<rect x="1284" y="1013" width="4" height="4" fill="#24120a"/>
<rect x="1288" y="1013" width="16" height="4" fill="#a66a43"/>
<rect x="1304" y="1013" width="4" height="4" fill="#24120a"/>
<rect x="1348" y="1013" width="4" height="4" fill="#24120a"/>
<rect x="1352" y="1013" width="16" height="4" fill="#a66a43"/>
<rect x="1368" y="1013" width="4" height="4" fill="#24120a"/>
<rect x="1412" y="1013" width="4" height="4" fill="#24120a"/>
<rect x="1416" y="1013" width="16" height="4" fill="#a66a43"/>
<rect x="1432" y="1013" width="4" height="4" fill="#24120a"/>
<rect x="1476" y="1013" width="4" height="4" fill="#24120a"/>
<rect x="1480" y="1013" width="16" height="4" fill="#a66a43"/>
<rect x="1496" y="1013" width="4" height="4" fill="#24120a"/>
<rect x="1540" y="1013" width="4" height="4" fill="#24120a"/>
<rect x="1544" y="1013" width="16" height="4" fill="#a66a43"/>
<rect x="1560" y="1013" width="4" height="4" fill="#24120a"/>
<rect x="1604" y="1013" width="4" height="4" fill="#24120a"/>
<rect x="1608" y="1013" width="16" height="4" fill="#a66a43"/>
<rect x="1624" y="1013" width="4" height="4" fill="#24120a"/>
<rect x="1668" y="1013" width="4" height="4" fill="#24120a"/>
<rect x="1672" y="1013" width="16" height="4" fill="#a66a43"/>
<rect x="1688" y="1013" width="4" height="4" fill="#24120a"/>
<rect x="1732" y="1013" width="4" height="4" fill="#24120a"/>
<rect x="1736" y="1013" width="16" height="4" fill="#a66a43"/>
<rect x="1752" y="1013" width="4" height="4" fill="#24120a"/>
<rect x="1796" y="1013" width="4" height="4" fill="#24120a"/>
<rect x="1800" y="1013" width="16" height="4" fill="#a66a43"/>
<rect x="1816" y="1013" width="4" height="4" fill="#24120a"/>
<rect x="1860" y="1013" width="4" height="4" fill="#24120a"/>
<rect x="1864" y="1013" width="16" height="4" fill="#a66a43"/>
<rect x="1880" y="1013" width="4" height="4" fill="#24120a"/>
<rect x="0" y="1017" width="8" height="4" fill="#b5364a"/>
<rect x="8" y="1017" width="4" height="4" fill="#8e2b4c"/>
<rect x="12" y="1017" width="4" height="4" fill="#b5364a"/>
<rect x="16" y="1017" width="8" height="4" fill="#2b2a21"/>
<rect x="24" y="1017" width="4" height="4" fill="#b5364a"/>
<rect x="28" y="1017" width="4" height="4" fill="#8e2b4c"/>
<rect x="32" y="1017" width="4" height="4" fill="#b5364a"/>
<rect x="36" y="1017" width="8" height="4" fill="#2b2a21"/>
<rect x="44" y="1017" width="4" height="4" fill="#b5364a"/>
<rect x="48" y="1017" width="4" height="4" fill="#8e2b4c"/>
<rect x="52" y="1017" width="16" height="4" fill="#b5364a"/>
<rect x="68" y="1017" width="4" height="4" fill="#2b2a21"/>
<rect x="72" y="1017" width="8" height="4" fill="#c4cfbb"/>
<rect x="80" y="1017" width="60" height="4" fill="#2b2a21"/>
<rect x="140" y="1017" width="12" height="4" fill="#c4cfbb"/>
<rect x="152" y="1017" width="4" height="4" fill="#2b2a21"/>
<rect x="156" y="1017" width="44" height="4" fill="#24120a"/>
<rect x="200" y="1017" width="16" height="4" fill="#a66a43"/>
<rect x="216" y="1017" width="20" height="4" fill="#24120a"/>
<rect x="236" y="1017" width="48" height="4" fill="#c99a5b"/>
<rect x="284" y="1017" width="44" height="4" fill="#24120a"/>
<rect x="328" y="1017" width="16" height="4" fill="#a66a43"/>
<rect x="344" y="1017" width="48" height="4" fill="#24120a"/>
<rect x="392" y="1017" width="16" height="4" fill="#a66a43"/>
<rect x="408" y="1017" width="48" height="4" fill="#24120a"/>
<rect x="456" y="1017" width="4" height="4" fill="#a66a43"/>
<rect x="460" y="1017" width="4" height="4" fill="#33211f"/>
<rect x="464" y="1017" width="8" height="4" fill="#e8c24c"/>
<rect x="472" y="1017" width="16" height="4" fill="#f0ebe4"/>
<rect x="488" y="1017" width="12" height="4" fill="#e2ddd6"/>
<rect x="500" y="1017" width="4" height="4" fill="#33211f"/>
<rect x="504" y="1017" width="16" height="4" fill="#24120a"/>
<rect x="520" y="1017" width="16" height="4" fill="#a66a43"/>
<rect x="536" y="1017" width="48" height="4" fill="#24120a"/>
<rect x="584" y="1017" width="16" height="4" fill="#a66a43"/>
<rect x="600" y="1017" width="48" height="4" fill="#24120a"/>
<rect x="648" y="1017" width="16" height="4" fill="#a66a43"/>
<rect x="664" y="1017" width="48" height="4" fill="#24120a"/>
<rect x="712" y="1017" width="16" height="4" fill="#a66a43"/>
<rect x="728" y="1017" width="48" height="4" fill="#24120a"/>
<rect x="776" y="1017" width="16" height="4" fill="#a66a43"/>
<rect x="792" y="1017" width="48" height="4" fill="#24120a"/>
<rect x="840" y="1017" width="16" height="4" fill="#a66a43"/>
<rect x="856" y="1017" width="48" height="4" fill="#24120a"/>
<rect x="904" y="1017" width="16" height="4" fill="#a66a43"/>
<rect x="920" y="1017" width="48" height="4" fill="#24120a"/>
<rect x="968" y="1017" width="16" height="4" fill="#a66a43"/>
<rect x="984" y="1017" width="48" height="4" fill="#24120a"/>
<rect x="1032" y="1017" width="16" height="4" fill="#a66a43"/>
<rect x="1048" y="1017" width="48" height="4" fill="#24120a"/>
<rect x="1096" y="1017" width="16" height="4" fill="#a66a43"/>
<rect x="1112" y="1017" width="48" height="4" fill="#24120a"/>
<rect x="1160" y="1017" width="16" height="4" fill="#a66a43"/>
<rect x="1176" y="1017" width="48" height="4" fill="#24120a"/>
<rect x="1224" y="1017" width="16" height="4" fill="#a66a43"/>
<rect x="1240" y="1017" width="48" height="4" fill="#24120a"/>
<rect x="1288" y="1017" width="16" height="4" fill="#a66a43"/>
<rect x="1304" y="1017" width="48" height="4" fill="#24120a"/>
<rect x="1352" y="1017" width="16" height="4" fill="#a66a43"/>
<rect x="1368" y="1017" width="48" height="4" fill="#24120a"/>
<rect x="1416" y="1017" width="16" height="4" fill="#a66a43"/>
<rect x="1432" y="1017" width="48" height="4" fill="#24120a"/>
<rect x="1480" y="1017" width="16" height="4" fill="#a66a43"/>
<rect x="1496" y="1017" width="48" height="4" fill="#24120a"/>
<rect x="1544" y="1017" width="16" height="4" fill="#a66a43"/>
<rect x="1560" y="1017" width="48" height="4" fill="#24120a"/>
<rect x="1608" y="1017" width="16" height="4" fill="#a66a43"/>
<rect x="1624" y="1017" width="48" height="4" fill="#24120a"/>
<rect x="1672" y="1017" width="16" height="4" fill="#a66a43"/>
<rect x="1688" y="1017" width="48" height="4" fill="#24120a"/>
<rect x="1736" y="1017" width="16" height="4" fill="#a66a43"/>
<rect x="1752" y="1017" width="48" height="4" fill="#24120a"/>
<rect x="1800" y="1017" width="16" height="4" fill="#a66a43"/>
<rect x="1816" y="1017" width="48" height="4" fill="#24120a"/>
<rect x="1864" y="1017" width="16" height="4" fill="#a66a43"/>
<rect x="1880" y="1017" width="40" height="4" fill="#24120a"/>
<rect x="0" y="1021" width="8" height="4" fill="#b5364a"/>
<rect x="8" y="1021" width="4" height="4" fill="#8e2b4c"/>
<rect x="12" y="1021" width="16" height="4" fill="#b5364a"/>
<rect x="28" y="1021" width="4" height="4" fill="#8e2b4c"/>
<rect x="32" y="1021" width="16" height="4" fill="#b5364a"/>
<rect x="48" y="1021" width="4" height="4" fill="#8e2b4c"/>
<rect x="52" y="1021" width="16" height="4" fill="#b5364a"/>
<rect x="68" y="1021" width="4" height="4" fill="#2b2a21"/>
<rect x="72" y="1021" width="8" height="4" fill="#c4cfbb"/>
<rect x="80" y="1021" width="4" height="4" fill="#2b2a21"/>
<rect x="84" y="1021" width="4" height="4" fill="#6a3f57"/>
<rect x="88" y="1021" width="44" height="4" fill="#87566a"/>
<rect x="132" y="1021" width="4" height="4" fill="#6a3f57"/>
<rect x="136" y="1021" width="4" height="4" fill="#2b2a21"/>
<rect x="140" y="1021" width="12" height="4" fill="#c4cfbb"/>
<rect x="152" y="1021" width="4" height="4" fill="#2b2a21"/>
<rect x="156" y="1021" width="12" height="4" fill="#c58d61"/>
<rect x="168" y="1021" width="12" height="4" fill="#cf9a6c"/>
<rect x="180" y="1021" width="16" height="4" fill="#c58d61"/>
<rect x="196" y="1021" width="4" height="4" fill="#24120a"/>
<rect x="200" y="1021" width="16" height="4" fill="#a66a43"/>
<rect x="216" y="1021" width="4" height="4" fill="#24120a"/>
<rect x="220" y="1021" width="4" height="4" fill="#c58d61"/>
<rect x="224" y="1021" width="4" height="4" fill="#cf9a6c"/>
<rect x="228" y="1021" width="8" height="4" fill="#c58d61"/>
<rect x="236" y="1021" width="20" height="4" fill="#24120a"/>
<rect x="256" y="1021" width="8" height="4" fill="#d1a263"/>
<rect x="264" y="1021" width="20" height="4" fill="#24120a"/>
<rect x="284" y="1021" width="12" height="4" fill="#c58d61"/>
<rect x="296" y="1021" width="4" height="4" fill="#cf9a6c"/>
<rect x="300" y="1021" width="12" height="4" fill="#c58d61"/>
<rect x="312" y="1021" width="4" height="4" fill="#cf9a6c"/>
<rect x="316" y="1021" width="4" height="4" fill="#c58d61"/>
<rect x="320" y="1021" width="4" height="4" fill="#cf9a6c"/>
<rect x="324" y="1021" width="4" height="4" fill="#24120a"/>
<rect x="328" y="1021" width="16" height="4" fill="#a66a43"/>
<rect x="344" y="1021" width="4" height="4" fill="#24120a"/>
<rect x="348" y="1021" width="20" height="4" fill="#c58d61"/>
<rect x="368" y="1021" width="4" height="4" fill="#cf9a6c"/>
<rect x="372" y="1021" width="16" height="4" fill="#c58d61"/>
<rect x="388" y="1021" width="4" height="4" fill="#24120a"/>
<rect x="392" y="1021" width="16" height="4" fill="#a66a43"/>
<rect x="408" y="1021" width="4" height="4" fill="#24120a"/>
<rect x="412" y="1021" width="4" height="4" fill="#c58d61"/>
<rect x="416" y="1021" width="12" height="4" fill="#cf9a6c"/>
<rect x="428" y="1021" width="20" height="4" fill="#c58d61"/>
<rect x="448" y="1021" width="4" height="4" fill="#cf9a6c"/>
<rect x="452" y="1021" width="4" height="4" fill="#24120a"/>
<rect x="456" y="1021" width="4" height="4" fill="#a66a43"/>
<rect x="460" y="1021" width="8" height="4" fill="#33211f"/>
<rect x="468" y="1021" width="8" height="4" fill="#d63b3a"/>
<rect x="476" y="1021" width="12" height="4" fill="#f0ebe4"/>
<rect x="488" y="1021" width="12" height="4" fill="#e2ddd6"/>
<rect x="500" y="1021" width="4" height="4" fill="#33211f"/>
<rect x="504" y="1021" width="12" height="4" fill="#c58d61"/>
<rect x="516" y="1021" width="4" height="4" fill="#24120a"/>
<rect x="520" y="1021" width="16" height="4" fill="#a66a43"/>
<rect x="536" y="1021" width="4" height="4" fill="#24120a"/>
<rect x="540" y="1021" width="16" height="4" fill="#c58d61"/>
<rect x="556" y="1021" width="4" height="4" fill="#cf9a6c"/>
<rect x="560" y="1021" width="20" height="4" fill="#c58d61"/>
<rect x="580" y="1021" width="4" height="4" fill="#24120a"/>
<rect x="584" y="1021" width="16" height="4" fill="#a66a43"/>
<rect x="600" y="1021" width="4" height="4" fill="#24120a"/>
<rect x="604" y="1021" width="40" height="4" fill="#c58d61"/>
<rect x="644" y="1021" width="4" height="4" fill="#24120a"/>
<rect x="648" y="1021" width="16" height="4" fill="#a66a43"/>
<rect x="664" y="1021" width="4" height="4" fill="#24120a"/>
<rect x="668" y="1021" width="4" height="4" fill="#cf9a6c"/>
<rect x="672" y="1021" width="16" height="4" fill="#c58d61"/>
<rect x="688" y="1021" width="4" height="4" fill="#cf9a6c"/>
<rect x="692" y="1021" width="16" height="4" fill="#c58d61"/>
<rect x="708" y="1021" width="4" height="4" fill="#24120a"/>
<rect x="712" y="1021" width="16" height="4" fill="#a66a43"/>
<rect x="728" y="1021" width="4" height="4" fill="#24120a"/>
<rect x="732" y="1021" width="12" height="4" fill="#c58d61"/>
<rect x="744" y="1021" width="8" height="4" fill="#cf9a6c"/>
<rect x="752" y="1021" width="20" height="4" fill="#c58d61"/>
<rect x="772" y="1021" width="4" height="4" fill="#24120a"/>
<rect x="776" y="1021" width="16" height="4" fill="#a66a43"/>
<rect x="792" y="1021" width="4" height="4" fill="#24120a"/>
<rect x="796" y="1021" width="4" height="4" fill="#c58d61"/>
<rect x="800" y="1021" width="4" height="4" fill="#cf9a6c"/>
<rect x="804" y="1021" width="4" height="4" fill="#c58d61"/>
<rect x="808" y="1021" width="4" height="4" fill="#cf9a6c"/>
<rect x="812" y="1021" width="4" height="4" fill="#c58d61"/>
<rect x="816" y="1021" width="8" height="4" fill="#cf9a6c"/>
<rect x="824" y="1021" width="12" height="4" fill="#c58d61"/>
<rect x="836" y="1021" width="4" height="4" fill="#24120a"/>
<rect x="840" y="1021" width="16" height="4" fill="#a66a43"/>
<rect x="856" y="1021" width="4" height="4" fill="#24120a"/>
<rect x="860" y="1021" width="8" height="4" fill="#cf9a6c"/>
<rect x="868" y="1021" width="16" height="4" fill="#c58d61"/>
<rect x="884" y="1021" width="8" height="4" fill="#cf9a6c"/>
<rect x="892" y="1021" width="8" height="4" fill="#c58d61"/>
<rect x="900" y="1021" width="4" height="4" fill="#24120a"/>
<rect x="904" y="1021" width="16" height="4" fill="#a66a43"/>
<rect x="920" y="1021" width="4" height="4" fill="#24120a"/>
<rect x="924" y="1021" width="28" height="4" fill="#c58d61"/>
<rect x="952" y="1021" width="8" height="4" fill="#cf9a6c"/>
<rect x="960" y="1021" width="4" height="4" fill="#c58d61"/>
<rect x="964" y="1021" width="4" height="4" fill="#24120a"/>
<rect x="968" y="1021" width="16" height="4" fill="#a66a43"/>
<rect x="984" y="1021" width="4" height="4" fill="#24120a"/>
<rect x="988" y="1021" width="12" height="4" fill="#c58d61"/>
<rect x="1000" y="1021" width="4" height="4" fill="#cf9a6c"/>
<rect x="1004" y="1021" width="8" height="4" fill="#c58d61"/>
<rect x="1012" y="1021" width="12" height="4" fill="#cf9a6c"/>
<rect x="1024" y="1021" width="4" height="4" fill="#c58d61"/>
<rect x="1028" y="1021" width="4" height="4" fill="#24120a"/>
<rect x="1032" y="1021" width="16" height="4" fill="#a66a43"/>
<rect x="1048" y="1021" width="4" height="4" fill="#24120a"/>
<rect x="1052" y="1021" width="4" height="4" fill="#cf9a6c"/>
<rect x="1056" y="1021" width="36" height="4" fill="#c58d61"/>
<rect x="1092" y="1021" width="4" height="4" fill="#24120a"/>
<rect x="1096" y="1021" width="16" height="4" fill="#a66a43"/>
<rect x="1112" y="1021" width="4" height="4" fill="#24120a"/>
<rect x="1116" y="1021" width="8" height="4" fill="#c58d61"/>
<rect x="1124" y="1021" width="4" height="4" fill="#cf9a6c"/>
<rect x="1128" y="1021" width="28" height="4" fill="#c58d61"/>
<rect x="1156" y="1021" width="4" height="4" fill="#24120a"/>
<rect x="1160" y="1021" width="16" height="4" fill="#a66a43"/>
<rect x="1176" y="1021" width="4" height="4" fill="#24120a"/>
<rect x="1180" y="1021" width="12" height="4" fill="#c58d61"/>
<rect x="1192" y="1021" width="4" height="4" fill="#cf9a6c"/>
<rect x="1196" y="1021" width="24" height="4" fill="#c58d61"/>
<rect x="1220" y="1021" width="4" height="4" fill="#24120a"/>
<rect x="1224" y="1021" width="16" height="4" fill="#a66a43"/>
<rect x="1240" y="1021" width="4" height="4" fill="#24120a"/>
<rect x="1244" y="1021" width="8" height="4" fill="#c58d61"/>
<rect x="1252" y="1021" width="4" height="4" fill="#cf9a6c"/>
<rect x="1256" y="1021" width="28" height="4" fill="#c58d61"/>
<rect x="1284" y="1021" width="4" height="4" fill="#24120a"/>
<rect x="1288" y="1021" width="16" height="4" fill="#a66a43"/>
<rect x="1304" y="1021" width="4" height="4" fill="#24120a"/>
<rect x="1308" y="1021" width="40" height="4" fill="#c58d61"/>
<rect x="1348" y="1021" width="4" height="4" fill="#24120a"/>
<rect x="1352" y="1021" width="16" height="4" fill="#a66a43"/>
<rect x="1368" y="1021" width="4" height="4" fill="#24120a"/>
<rect x="1372" y="1021" width="32" height="4" fill="#c58d61"/>
<rect x="1404" y="1021" width="4" height="4" fill="#cf9a6c"/>
<rect x="1408" y="1021" width="4" height="4" fill="#c58d61"/>
<rect x="1412" y="1021" width="4" height="4" fill="#24120a"/>
<rect x="1416" y="1021" width="16" height="4" fill="#a66a43"/>
<rect x="1432" y="1021" width="4" height="4" fill="#24120a"/>
<rect x="1436" y="1021" width="4" height="4" fill="#cf9a6c"/>
<rect x="1440" y="1021" width="20" height="4" fill="#c58d61"/>
<rect x="1460" y="1021" width="4" height="4" fill="#cf9a6c"/>
<rect x="1464" y="1021" width="12" height="4" fill="#c58d61"/>
<rect x="1476" y="1021" width="4" height="4" fill="#24120a"/>
<rect x="1480" y="1021" width="16" height="4" fill="#a66a43"/>
<rect x="1496" y="1021" width="4" height="4" fill="#24120a"/>
<rect x="1500" y="1021" width="4" height="4" fill="#cf9a6c"/>
<rect x="1504" y="1021" width="36" height="4" fill="#c58d61"/>
<rect x="1540" y="1021" width="4" height="4" fill="#24120a"/>
<rect x="1544" y="1021" width="16" height="4" fill="#a66a43"/>
<rect x="1560" y="1021" width="4" height="4" fill="#24120a"/>
<rect x="1564" y="1021" width="40" height="4" fill="#c58d61"/>
<rect x="1604" y="1021" width="4" height="4" fill="#24120a"/>
<rect x="1608" y="1021" width="16" height="4" fill="#a66a43"/>
<rect x="1624" y="1021" width="4" height="4" fill="#24120a"/>
<rect x="1628" y="1021" width="40" height="4" fill="#c58d61"/>
<rect x="1668" y="1021" width="4" height="4" fill="#24120a"/>
<rect x="1672" y="1021" width="16" height="4" fill="#a66a43"/>
<rect x="1688" y="1021" width="4" height="4" fill="#24120a"/>
<rect x="1692" y="1021" width="4" height="4" fill="#cf9a6c"/>
<rect x="1696" y="1021" width="24" height="4" fill="#c58d61"/>
<rect x="1720" y="1021" width="4" height="4" fill="#cf9a6c"/>
<rect x="1724" y="1021" width="8" height="4" fill="#c58d61"/>
<rect x="1732" y="1021" width="4" height="4" fill="#24120a"/>
<rect x="1736" y="1021" width="16" height="4" fill="#a66a43"/>
<rect x="1752" y="1021" width="4" height="4" fill="#24120a"/>
<rect x="1756" y="1021" width="24" height="4" fill="#c58d61"/>
<rect x="1780" y="1021" width="4" height="4" fill="#cf9a6c"/>
<rect x="1784" y="1021" width="12" height="4" fill="#c58d61"/>
<rect x="1796" y="1021" width="4" height="4" fill="#24120a"/>
<rect x="1800" y="1021" width="16" height="4" fill="#a66a43"/>
<rect x="1816" y="1021" width="4" height="4" fill="#24120a"/>
<rect x="1820" y="1021" width="40" height="4" fill="#c58d61"/>
<rect x="1860" y="1021" width="4" height="4" fill="#24120a"/>
<rect x="1864" y="1021" width="16" height="4" fill="#a66a43"/>
<rect x="1880" y="1021" width="4" height="4" fill="#24120a"/>
<rect x="1884" y="1021" width="32" height="4" fill="#c58d61"/>
<rect x="1916" y="1021" width="4" height="4" fill="#cf9a6c"/>
<rect x="0" y="1025" width="8" height="4" fill="#b5364a"/>
<rect x="8" y="1025" width="4" height="4" fill="#8e2b4c"/>
<rect x="12" y="1025" width="16" height="4" fill="#b5364a"/>
<rect x="28" y="1025" width="4" height="4" fill="#8e2b4c"/>
<rect x="32" y="1025" width="16" height="4" fill="#b5364a"/>
<rect x="48" y="1025" width="4" height="4" fill="#8e2b4c"/>
<rect x="52" y="1025" width="16" height="4" fill="#b5364a"/>
<rect x="68" y="1025" width="4" height="4" fill="#2b2a21"/>
<rect x="72" y="1025" width="8" height="4" fill="#c4cfbb"/>
<rect x="80" y="1025" width="4" height="4" fill="#2b2a21"/>
<rect x="84" y="1025" width="52" height="4" fill="#6a3f57"/>
<rect x="136" y="1025" width="4" height="4" fill="#2b2a21"/>
<rect x="140" y="1025" width="12" height="4" fill="#c4cfbb"/>
<rect x="152" y="1025" width="4" height="4" fill="#2b2a21"/>
<rect x="156" y="1025" width="4" height="4" fill="#a3693f"/>
<rect x="160" y="1025" width="4" height="4" fill="#955e38"/>
<rect x="164" y="1025" width="32" height="4" fill="#a3693f"/>
<rect x="196" y="1025" width="4" height="4" fill="#24120a"/>
<rect x="200" y="1025" width="16" height="4" fill="#a66a43"/>
<rect x="216" y="1025" width="4" height="4" fill="#24120a"/>
<rect x="220" y="1025" width="4" height="4" fill="#955e38"/>
<rect x="224" y="1025" width="28" height="4" fill="#a3693f"/>
<rect x="252" y="1025" width="4" height="4" fill="#24120a"/>
<rect x="256" y="1025" width="8" height="4" fill="#d1a263"/>
<rect x="264" y="1025" width="4" height="4" fill="#24120a"/>
<rect x="268" y="1025" width="12" height="4" fill="#a66a43"/>
<rect x="280" y="1025" width="4" height="4" fill="#24120a"/>
<rect x="284" y="1025" width="40" height="4" fill="#a3693f"/>
<rect x="324" y="1025" width="4" height="4" fill="#24120a"/>
<rect x="328" y="1025" width="16" height="4" fill="#a66a43"/>
<rect x="344" y="1025" width="4" height="4" fill="#24120a"/>
<rect x="348" y="1025" width="36" height="4" fill="#a3693f"/>
<rect x="384" y="1025" width="4" height="4" fill="#955e38"/>
<rect x="388" y="1025" width="4" height="4" fill="#24120a"/>
<rect x="392" y="1025" width="16" height="4" fill="#a66a43"/>
<rect x="408" y="1025" width="4" height="4" fill="#24120a"/>
<rect x="412" y="1025" width="4" height="4" fill="#955e38"/>
<rect x="416" y="1025" width="36" height="4" fill="#a3693f"/>
<rect x="452" y="1025" width="4" height="4" fill="#24120a"/>
<rect x="456" y="1025" width="8" height="4" fill="#a66a43"/>
<rect x="464" y="1025" width="4" height="4" fill="#33211f"/>
<rect x="468" y="1025" width="8" height="4" fill="#d63b3a"/>
<rect x="476" y="1025" width="12" height="4" fill="#f0ebe4"/>
<rect x="488" y="1025" width="12" height="4" fill="#e2ddd6"/>
<rect x="500" y="1025" width="4" height="4" fill="#33211f"/>
<rect x="504" y="1025" width="8" height="4" fill="#a3693f"/>
<rect x="512" y="1025" width="4" height="4" fill="#955e38"/>
<rect x="516" y="1025" width="4" height="4" fill="#24120a"/>
<rect x="520" y="1025" width="16" height="4" fill="#a66a43"/>
<rect x="536" y="1025" width="4" height="4" fill="#24120a"/>
<rect x="540" y="1025" width="40" height="4" fill="#a3693f"/>
<rect x="580" y="1025" width="4" height="4" fill="#24120a"/>
<rect x="584" y="1025" width="16" height="4" fill="#a66a43"/>
<rect x="600" y="1025" width="4" height="4" fill="#24120a"/>
<rect x="604" y="1025" width="4" height="4" fill="#a3693f"/>
<rect x="608" y="1025" width="4" height="4" fill="#955e38"/>
<rect x="612" y="1025" width="32" height="4" fill="#a3693f"/>
<rect x="644" y="1025" width="4" height="4" fill="#24120a"/>
<rect x="648" y="1025" width="16" height="4" fill="#a66a43"/>
<rect x="664" y="1025" width="4" height="4" fill="#24120a"/>
<rect x="668" y="1025" width="40" height="4" fill="#a3693f"/>
<rect x="708" y="1025" width="4" height="4" fill="#24120a"/>
<rect x="712" y="1025" width="16" height="4" fill="#a66a43"/>
<rect x="728" y="1025" width="4" height="4" fill="#24120a"/>
<rect x="732" y="1025" width="40" height="4" fill="#a3693f"/>
<rect x="772" y="1025" width="4" height="4" fill="#24120a"/>
<rect x="776" y="1025" width="16" height="4" fill="#a66a43"/>
<rect x="792" y="1025" width="4" height="4" fill="#24120a"/>
<rect x="796" y="1025" width="40" height="4" fill="#a3693f"/>
<rect x="836" y="1025" width="4" height="4" fill="#24120a"/>
<rect x="840" y="1025" width="16" height="4" fill="#a66a43"/>
<rect x="856" y="1025" width="4" height="4" fill="#24120a"/>
<rect x="860" y="1025" width="40" height="4" fill="#a3693f"/>
<rect x="900" y="1025" width="4" height="4" fill="#24120a"/>
<rect x="904" y="1025" width="16" height="4" fill="#a66a43"/>
<rect x="920" y="1025" width="4" height="4" fill="#24120a"/>
<rect x="924" y="1025" width="40" height="4" fill="#a3693f"/>
<rect x="964" y="1025" width="4" height="4" fill="#24120a"/>
<rect x="968" y="1025" width="16" height="4" fill="#a66a43"/>
<rect x="984" y="1025" width="4" height="4" fill="#24120a"/>
<rect x="988" y="1025" width="32" height="4" fill="#a3693f"/>
<rect x="1020" y="1025" width="4" height="4" fill="#955e38"/>
<rect x="1024" y="1025" width="4" height="4" fill="#a3693f"/>
<rect x="1028" y="1025" width="4" height="4" fill="#24120a"/>
<rect x="1032" y="1025" width="16" height="4" fill="#a66a43"/>
<rect x="1048" y="1025" width="4" height="4" fill="#24120a"/>
<rect x="1052" y="1025" width="32" height="4" fill="#a3693f"/>
<rect x="1084" y="1025" width="4" height="4" fill="#955e38"/>
<rect x="1088" y="1025" width="4" height="4" fill="#a3693f"/>
<rect x="1092" y="1025" width="4" height="4" fill="#24120a"/>
<rect x="1096" y="1025" width="16" height="4" fill="#a66a43"/>
<rect x="1112" y="1025" width="4" height="4" fill="#24120a"/>
<rect x="1116" y="1025" width="4" height="4" fill="#955e38"/>
<rect x="1120" y="1025" width="28" height="4" fill="#a3693f"/>
<rect x="1148" y="1025" width="4" height="4" fill="#955e38"/>
<rect x="1152" y="1025" width="4" height="4" fill="#a3693f"/>
<rect x="1156" y="1025" width="4" height="4" fill="#24120a"/>
<rect x="1160" y="1025" width="16" height="4" fill="#a66a43"/>
<rect x="1176" y="1025" width="4" height="4" fill="#24120a"/>
<rect x="1180" y="1025" width="40" height="4" fill="#a3693f"/>
<rect x="1220" y="1025" width="4" height="4" fill="#24120a"/>
<rect x="1224" y="1025" width="16" height="4" fill="#a66a43"/>
<rect x="1240" y="1025" width="4" height="4" fill="#24120a"/>
<rect x="1244" y="1025" width="36" height="4" fill="#a3693f"/>
<rect x="1280" y="1025" width="4" height="4" fill="#955e38"/>
<rect x="1284" y="1025" width="4" height="4" fill="#24120a"/>
<rect x="1288" y="1025" width="16" height="4" fill="#a66a43"/>
<rect x="1304" y="1025" width="4" height="4" fill="#24120a"/>
<rect x="1308" y="1025" width="8" height="4" fill="#a3693f"/>
<rect x="1316" y="1025" width="4" height="4" fill="#955e38"/>
<rect x="1320" y="1025" width="8" height="4" fill="#a3693f"/>
<rect x="1328" y="1025" width="4" height="4" fill="#955e38"/>
<rect x="1332" y="1025" width="16" height="4" fill="#a3693f"/>
<rect x="1348" y="1025" width="4" height="4" fill="#24120a"/>
<rect x="1352" y="1025" width="16" height="4" fill="#a66a43"/>
<rect x="1368" y="1025" width="4" height="4" fill="#24120a"/>
<rect x="1372" y="1025" width="40" height="4" fill="#a3693f"/>
<rect x="1412" y="1025" width="4" height="4" fill="#24120a"/>
<rect x="1416" y="1025" width="16" height="4" fill="#a66a43"/>
<rect x="1432" y="1025" width="4" height="4" fill="#24120a"/>
<rect x="1436" y="1025" width="8" height="4" fill="#a3693f"/>
<rect x="1444" y="1025" width="4" height="4" fill="#955e38"/>
<rect x="1448" y="1025" width="28" height="4" fill="#a3693f"/>
<rect x="1476" y="1025" width="4" height="4" fill="#24120a"/>
<rect x="1480" y="1025" width="16" height="4" fill="#a66a43"/>
<rect x="1496" y="1025" width="4" height="4" fill="#24120a"/>
<rect x="1500" y="1025" width="4" height="4" fill="#955e38"/>
<rect x="1504" y="1025" width="8" height="4" fill="#a3693f"/>
<rect x="1512" y="1025" width="4" height="4" fill="#955e38"/>
<rect x="1516" y="1025" width="20" height="4" fill="#a3693f"/>
<rect x="1536" y="1025" width="4" height="4" fill="#955e38"/>
<rect x="1540" y="1025" width="4" height="4" fill="#24120a"/>
<rect x="1544" y="1025" width="16" height="4" fill="#a66a43"/>
<rect x="1560" y="1025" width="4" height="4" fill="#24120a"/>
<rect x="1564" y="1025" width="40" height="4" fill="#a3693f"/>
<rect x="1604" y="1025" width="4" height="4" fill="#24120a"/>
<rect x="1608" y="1025" width="16" height="4" fill="#a66a43"/>
<rect x="1624" y="1025" width="4" height="4" fill="#24120a"/>
<rect x="1628" y="1025" width="4" height="4" fill="#a3693f"/>
<rect x="1632" y="1025" width="4" height="4" fill="#955e38"/>
<rect x="1636" y="1025" width="8" height="4" fill="#a3693f"/>
<rect x="1644" y="1025" width="4" height="4" fill="#955e38"/>
<rect x="1648" y="1025" width="20" height="4" fill="#a3693f"/>
<rect x="1668" y="1025" width="4" height="4" fill="#24120a"/>
<rect x="1672" y="1025" width="16" height="4" fill="#a66a43"/>
<rect x="1688" y="1025" width="4" height="4" fill="#24120a"/>
<rect x="1692" y="1025" width="4" height="4" fill="#955e38"/>
<rect x="1696" y="1025" width="32" height="4" fill="#a3693f"/>
<rect x="1728" y="1025" width="4" height="4" fill="#955e38"/>
<rect x="1732" y="1025" width="4" height="4" fill="#24120a"/>
<rect x="1736" y="1025" width="16" height="4" fill="#a66a43"/>
<rect x="1752" y="1025" width="4" height="4" fill="#24120a"/>
<rect x="1756" y="1025" width="12" height="4" fill="#a3693f"/>
<rect x="1768" y="1025" width="4" height="4" fill="#955e38"/>
<rect x="1772" y="1025" width="4" height="4" fill="#a3693f"/>
<rect x="1776" y="1025" width="4" height="4" fill="#955e38"/>
<rect x="1780" y="1025" width="16" height="4" fill="#a3693f"/>
<rect x="1796" y="1025" width="4" height="4" fill="#24120a"/>
<rect x="1800" y="1025" width="16" height="4" fill="#a66a43"/>
<rect x="1816" y="1025" width="4" height="4" fill="#24120a"/>
<rect x="1820" y="1025" width="40" height="4" fill="#a3693f"/>
<rect x="1860" y="1025" width="4" height="4" fill="#24120a"/>
<rect x="1864" y="1025" width="16" height="4" fill="#a66a43"/>
<rect x="1880" y="1025" width="4" height="4" fill="#24120a"/>
<rect x="1884" y="1025" width="36" height="4" fill="#a3693f"/>
<rect x="0" y="1029" width="8" height="4" fill="#b5364a"/>
<rect x="8" y="1029" width="4" height="4" fill="#8e2b4c"/>
<rect x="12" y="1029" width="16" height="4" fill="#b5364a"/>
<rect x="28" y="1029" width="4" height="4" fill="#8e2b4c"/>
<rect x="32" y="1029" width="16" height="4" fill="#b5364a"/>
<rect x="48" y="1029" width="4" height="4" fill="#8e2b4c"/>
<rect x="52" y="1029" width="16" height="4" fill="#b5364a"/>
<rect x="68" y="1029" width="4" height="4" fill="#2b2a21"/>
<rect x="72" y="1029" width="8" height="4" fill="#c4cfbb"/>
<rect x="80" y="1029" width="4" height="4" fill="#2b2a21"/>
<rect x="84" y="1029" width="52" height="4" fill="#6a3f57"/>
<rect x="136" y="1029" width="4" height="4" fill="#2b2a21"/>
<rect x="140" y="1029" width="12" height="4" fill="#c4cfbb"/>
<rect x="152" y="1029" width="4" height="4" fill="#2b2a21"/>
<rect x="156" y="1029" width="4" height="4" fill="#24120a"/>
<rect x="160" y="1029" width="4" height="4" fill="#80c054"/>
<rect x="164" y="1029" width="8" height="4" fill="#24120a"/>
<rect x="172" y="1029" width="4" height="4" fill="#80c054"/>
<rect x="176" y="1029" width="8" height="4" fill="#24120a"/>
<rect x="184" y="1029" width="4" height="4" fill="#a7d98a"/>
<rect x="188" y="1029" width="4" height="4" fill="#24120a"/>
<rect x="192" y="1029" width="4" height="4" fill="#a7d98a"/>
<rect x="196" y="1029" width="4" height="4" fill="#24120a"/>
<rect x="200" y="1029" width="12" height="4" fill="#a66a43"/>
<rect x="212" y="1029" width="4" height="4" fill="#8fbf5e"/>
<rect x="216" y="1029" width="12" height="4" fill="#24120a"/>
<rect x="228" y="1029" width="4" height="4" fill="#a7d98a"/>
<rect x="232" y="1029" width="24" height="4" fill="#24120a"/>
<rect x="256" y="1029" width="8" height="4" fill="#d1a263"/>
<rect x="264" y="1029" width="4" height="4" fill="#24120a"/>
<rect x="268" y="1029" width="4" height="4" fill="#a66a43"/>
<rect x="272" y="1029" width="4" height="4" fill="#8fbf5e"/>
<rect x="276" y="1029" width="4" height="4" fill="#a66a43"/>
<rect x="280" y="1029" width="4" height="4" fill="#24120a"/>
<rect x="284" y="1029" width="4" height="4" fill="#a7d98a"/>
<rect x="288" y="1029" width="4" height="4" fill="#24120a"/>
<rect x="292" y="1029" width="4" height="4" fill="#a7d98a"/>
<rect x="296" y="1029" width="32" height="4" fill="#24120a"/>
<rect x="328" y="1029" width="16" height="4" fill="#a66a43"/>
<rect x="344" y="1029" width="4" height="4" fill="#24120a"/>
<rect x="348" y="1029" width="4" height="4" fill="#a7d98a"/>
<rect x="352" y="1029" width="40" height="4" fill="#24120a"/>
<rect x="392" y="1029" width="4" height="4" fill="#a66a43"/>
<rect x="396" y="1029" width="4" height="4" fill="#8fbf5e"/>
<rect x="400" y="1029" width="8" height="4" fill="#a66a43"/>
<rect x="408" y="1029" width="20" height="4" fill="#24120a"/>
<rect x="428" y="1029" width="8" height="4" fill="#80c054"/>
<rect x="436" y="1029" width="20" height="4" fill="#24120a"/>
<rect x="456" y="1029" width="12" height="4" fill="#a66a43"/>
<rect x="468" y="1029" width="4" height="4" fill="#33211f"/>
<rect x="472" y="1029" width="16" height="4" fill="#f0ebe4"/>
<rect x="488" y="1029" width="12" height="4" fill="#e2ddd6"/>
<rect x="500" y="1029" width="4" height="4" fill="#33211f"/>
<rect x="504" y="1029" width="4" height="4" fill="#24120a"/>
<rect x="508" y="1029" width="4" height="4" fill="#a7d98a"/>
<rect x="512" y="1029" width="8" height="4" fill="#24120a"/>
<rect x="520" y="1029" width="16" height="4" fill="#a66a43"/>
<rect x="536" y="1029" width="16" height="4" fill="#24120a"/>
<rect x="552" y="1029" width="4" height="4" fill="#a7d98a"/>
<rect x="556" y="1029" width="28" height="4" fill="#24120a"/>
<rect x="584" y="1029" width="8" height="4" fill="#a66a43"/>
<rect x="592" y="1029" width="4" height="4" fill="#8fbf5e"/>
<rect x="596" y="1029" width="4" height="4" fill="#a66a43"/>
<rect x="600" y="1029" width="40" height="4" fill="#24120a"/>
<rect x="640" y="1029" width="4" height="4" fill="#80c054"/>
<rect x="644" y="1029" width="4" height="4" fill="#24120a"/>
<rect x="648" y="1029" width="16" height="4" fill="#a66a43"/>
<rect x="664" y="1029" width="4" height="4" fill="#24120a"/>
<rect x="668" y="1029" width="4" height="4" fill="#80c054"/>
<rect x="672" y="1029" width="20" height="4" fill="#24120a"/>
<rect x="692" y="1029" width="4" height="4" fill="#80c054"/>
<rect x="696" y="1029" width="16" height="4" fill="#24120a"/>
<rect x="712" y="1029" width="4" height="4" fill="#8fbf5e"/>
<rect x="716" y="1029" width="12" height="4" fill="#a66a43"/>
<rect x="728" y="1029" width="16" height="4" fill="#24120a"/>
<rect x="744" y="1029" width="4" height="4" fill="#80c054"/>
<rect x="748" y="1029" width="4" height="4" fill="#a7d98a"/>
<rect x="752" y="1029" width="8" height="4" fill="#24120a"/>
<rect x="760" y="1029" width="4" height="4" fill="#a7d98a"/>
<rect x="764" y="1029" width="12" height="4" fill="#24120a"/>
<rect x="776" y="1029" width="16" height="4" fill="#a66a43"/>
<rect x="792" y="1029" width="20" height="4" fill="#24120a"/>
<rect x="812" y="1029" width="4" height="4" fill="#80c054"/>
<rect x="816" y="1029" width="4" height="4" fill="#a7d98a"/>
<rect x="820" y="1029" width="20" height="4" fill="#24120a"/>
<rect x="840" y="1029" width="12" height="4" fill="#a66a43"/>
<rect x="852" y="1029" width="4" height="4" fill="#8fbf5e"/>
<rect x="856" y="1029" width="4" height="4" fill="#24120a"/>
<rect x="860" y="1029" width="4" height="4" fill="#80c054"/>
<rect x="864" y="1029" width="40" height="4" fill="#24120a"/>
<rect x="904" y="1029" width="16" height="4" fill="#a66a43"/>
<rect x="920" y="1029" width="28" height="4" fill="#24120a"/>
<rect x="948" y="1029" width="4" height="4" fill="#80c054"/>
<rect x="952" y="1029" width="8" height="4" fill="#24120a"/>
<rect x="960" y="1029" width="4" height="4" fill="#80c054"/>
<rect x="964" y="1029" width="4" height="4" fill="#24120a"/>
<rect x="968" y="1029" width="8" height="4" fill="#a66a43"/>
<rect x="976" y="1029" width="4" height="4" fill="#8fbf5e"/>
<rect x="980" y="1029" width="4" height="4" fill="#a66a43"/>
<rect x="984" y="1029" width="28" height="4" fill="#24120a"/>
<rect x="1012" y="1029" width="4" height="4" fill="#80c054"/>
<rect x="1016" y="1029" width="16" height="4" fill="#24120a"/>
<rect x="1032" y="1029" width="4" height="4" fill="#8fbf5e"/>
<rect x="1036" y="1029" width="12" height="4" fill="#a66a43"/>
<rect x="1048" y="1029" width="32" height="4" fill="#24120a"/>
<rect x="1080" y="1029" width="4" height="4" fill="#80c054"/>
<rect x="1084" y="1029" width="12" height="4" fill="#24120a"/>
<rect x="1096" y="1029" width="12" height="4" fill="#a66a43"/>
<rect x="1108" y="1029" width="4" height="4" fill="#8fbf5e"/>
<rect x="1112" y="1029" width="8" height="4" fill="#24120a"/>
<rect x="1120" y="1029" width="4" height="4" fill="#80c054"/>
<rect x="1124" y="1029" width="4" height="4" fill="#24120a"/>
<rect x="1128" y="1029" width="4" height="4" fill="#80c054"/>
<rect x="1132" y="1029" width="8" height="4" fill="#24120a"/>
<rect x="1140" y="1029" width="4" height="4" fill="#a7d98a"/>
<rect x="1144" y="1029" width="16" height="4" fill="#24120a"/>
<rect x="1160" y="1029" width="16" height="4" fill="#a66a43"/>
<rect x="1176" y="1029" width="12" height="4" fill="#24120a"/>
<rect x="1188" y="1029" width="4" height="4" fill="#80c054"/>
<rect x="1192" y="1029" width="16" height="4" fill="#24120a"/>
<rect x="1208" y="1029" width="4" height="4" fill="#80c054"/>
<rect x="1212" y="1029" width="12" height="4" fill="#24120a"/>
<rect x="1224" y="1029" width="16" height="4" fill="#a66a43"/>
<rect x="1240" y="1029" width="4" height="4" fill="#24120a"/>
<rect x="1244" y="1029" width="4" height="4" fill="#a7d98a"/>
<rect x="1248" y="1029" width="4" height="4" fill="#24120a"/>
<rect x="1252" y="1029" width="4" height="4" fill="#a7d98a"/>
<rect x="1256" y="1029" width="4" height="4" fill="#80c054"/>
<rect x="1260" y="1029" width="8" height="4" fill="#24120a"/>
<rect x="1268" y="1029" width="4" height="4" fill="#80c054"/>
<rect x="1272" y="1029" width="8" height="4" fill="#24120a"/>
<rect x="1280" y="1029" width="4" height="4" fill="#80c054"/>
<rect x="1284" y="1029" width="4" height="4" fill="#24120a"/>
<rect x="1288" y="1029" width="16" height="4" fill="#a66a43"/>
<rect x="1304" y="1029" width="12" height="4" fill="#24120a"/>
<rect x="1316" y="1029" width="4" height="4" fill="#80c054"/>
<rect x="1320" y="1029" width="4" height="4" fill="#a7d98a"/>
<rect x="1324" y="1029" width="28" height="4" fill="#24120a"/>
<rect x="1352" y="1029" width="16" height="4" fill="#a66a43"/>
<rect x="1368" y="1029" width="48" height="4" fill="#24120a"/>
<rect x="1416" y="1029" width="16" height="4" fill="#a66a43"/>
<rect x="1432" y="1029" width="32" height="4" fill="#24120a"/>
<rect x="1464" y="1029" width="4" height="4" fill="#80c054"/>
<rect x="1468" y="1029" width="12" height="4" fill="#24120a"/>
<rect x="1480" y="1029" width="16" height="4" fill="#a66a43"/>
<rect x="1496" y="1029" width="40" height="4" fill="#24120a"/>
<rect x="1536" y="1029" width="4" height="4" fill="#80c054"/>
<rect x="1540" y="1029" width="4" height="4" fill="#24120a"/>
<rect x="1544" y="1029" width="16" height="4" fill="#a66a43"/>
<rect x="1560" y="1029" width="12" height="4" fill="#24120a"/>
<rect x="1572" y="1029" width="4" height="4" fill="#a7d98a"/>
<rect x="1576" y="1029" width="32" height="4" fill="#24120a"/>
<rect x="1608" y="1029" width="16" height="4" fill="#a66a43"/>
<rect x="1624" y="1029" width="8" height="4" fill="#24120a"/>
<rect x="1632" y="1029" width="4" height="4" fill="#80c054"/>
<rect x="1636" y="1029" width="4" height="4" fill="#24120a"/>
<rect x="1640" y="1029" width="4" height="4" fill="#a7d98a"/>
<rect x="1644" y="1029" width="4" height="4" fill="#80c054"/>
<rect x="1648" y="1029" width="24" height="4" fill="#24120a"/>
<rect x="1672" y="1029" width="16" height="4" fill="#a66a43"/>
<rect x="1688" y="1029" width="8" height="4" fill="#24120a"/>
<rect x="1696" y="1029" width="4" height="4" fill="#a7d98a"/>
<rect x="1700" y="1029" width="4" height="4" fill="#24120a"/>
<rect x="1704" y="1029" width="4" height="4" fill="#80c054"/>
<rect x="1708" y="1029" width="28" height="4" fill="#24120a"/>
<rect x="1736" y="1029" width="16" height="4" fill="#a66a43"/>
<rect x="1752" y="1029" width="24" height="4" fill="#24120a"/>
<rect x="1776" y="1029" width="4" height="4" fill="#80c054"/>
<rect x="1780" y="1029" width="4" height="4" fill="#24120a"/>
<rect x="1784" y="1029" width="4" height="4" fill="#80c054"/>
<rect x="1788" y="1029" width="12" height="4" fill="#24120a"/>
<rect x="1800" y="1029" width="12" height="4" fill="#a66a43"/>
<rect x="1812" y="1029" width="4" height="4" fill="#8fbf5e"/>
<rect x="1816" y="1029" width="48" height="4" fill="#24120a"/>
<rect x="1864" y="1029" width="16" height="4" fill="#a66a43"/>
<rect x="1880" y="1029" width="28" height="4" fill="#24120a"/>
<rect x="1908" y="1029" width="4" height="4" fill="#80c054"/>
<rect x="1912" y="1029" width="8" height="4" fill="#24120a"/>
<rect x="0" y="1033" width="8" height="4" fill="#b5364a"/>
<rect x="8" y="1033" width="4" height="4" fill="#8e2b4c"/>
<rect x="12" y="1033" width="16" height="4" fill="#b5364a"/>
<rect x="28" y="1033" width="4" height="4" fill="#8e2b4c"/>
<rect x="32" y="1033" width="16" height="4" fill="#b5364a"/>
<rect x="48" y="1033" width="4" height="4" fill="#8e2b4c"/>
<rect x="52" y="1033" width="16" height="4" fill="#b5364a"/>
<rect x="68" y="1033" width="4" height="4" fill="#2b2a21"/>
<rect x="72" y="1033" width="8" height="4" fill="#c4cfbb"/>
<rect x="80" y="1033" width="4" height="4" fill="#2b2a21"/>
<rect x="84" y="1033" width="52" height="4" fill="#6a3f57"/>
<rect x="136" y="1033" width="4" height="4" fill="#2b2a21"/>
<rect x="140" y="1033" width="12" height="4" fill="#c4cfbb"/>
<rect x="152" y="1033" width="4" height="4" fill="#2b2a21"/>
<rect x="156" y="1033" width="4" height="4" fill="#f6faee"/>
<rect x="160" y="1033" width="4" height="4" fill="#80c054"/>
<rect x="164" y="1033" width="8" height="4" fill="#f6faee"/>
<rect x="172" y="1033" width="4" height="4" fill="#80c054"/>
<rect x="176" y="1033" width="8" height="4" fill="#f6faee"/>
<rect x="184" y="1033" width="12" height="4" fill="#80c054"/>
<rect x="196" y="1033" width="4" height="4" fill="#24120a"/>
<rect x="200" y="1033" width="4" height="4" fill="#80c054"/>
<rect x="204" y="1033" width="8" height="4" fill="#a66a43"/>
<rect x="212" y="1033" width="4" height="4" fill="#80c054"/>
<rect x="216" y="1033" width="4" height="4" fill="#24120a"/>
<rect x="220" y="1033" width="12" height="4" fill="#80c054"/>
<rect x="232" y="1033" width="8" height="4" fill="#f6faee"/>
<rect x="240" y="1033" width="4" height="4" fill="#80c054"/>
<rect x="244" y="1033" width="4" height="4" fill="#6bb043"/>
<rect x="248" y="1033" width="4" height="4" fill="#f6faee"/>
<rect x="252" y="1033" width="4" height="4" fill="#24120a"/>
<rect x="256" y="1033" width="8" height="4" fill="#d1a263"/>
<rect x="264" y="1033" width="4" height="4" fill="#24120a"/>
<rect x="268" y="1033" width="8" height="4" fill="#a66a43"/>
<rect x="276" y="1033" width="4" height="4" fill="#80c054"/>
<rect x="280" y="1033" width="4" height="4" fill="#24120a"/>
<rect x="284" y="1033" width="4" height="4" fill="#80c054"/>
<rect x="288" y="1033" width="4" height="4" fill="#f6faee"/>
<rect x="292" y="1033" width="4" height="4" fill="#80c054"/>
<rect x="296" y="1033" width="8" height="4" fill="#f6faee"/>
<rect x="304" y="1033" width="8" height="4" fill="#80c054"/>
<rect x="312" y="1033" width="4" height="4" fill="#6bb043"/>
<rect x="316" y="1033" width="8" height="4" fill="#f6faee"/>
<rect x="324" y="1033" width="4" height="4" fill="#24120a"/>
<rect x="328" y="1033" width="4" height="4" fill="#80c054"/>
<rect x="332" y="1033" width="8" height="4" fill="#a66a43"/>
<rect x="340" y="1033" width="4" height="4" fill="#80c054"/>
<rect x="344" y="1033" width="4" height="4" fill="#24120a"/>
<rect x="348" y="1033" width="4" height="4" fill="#80c054"/>
<rect x="352" y="1033" width="4" height="4" fill="#f6faee"/>
<rect x="356" y="1033" width="4" height="4" fill="#80c054"/>
<rect x="360" y="1033" width="4" height="4" fill="#f6faee"/>
<rect x="364" y="1033" width="8" height="4" fill="#80c054"/>
<rect x="372" y="1033" width="8" height="4" fill="#f6faee"/>
<rect x="380" y="1033" width="4" height="4" fill="#80c054"/>
<rect x="384" y="1033" width="4" height="4" fill="#6bb043"/>
<rect x="388" y="1033" width="4" height="4" fill="#24120a"/>
<rect x="392" y="1033" width="4" height="4" fill="#80c054"/>
<rect x="396" y="1033" width="8" height="4" fill="#a66a43"/>
<rect x="404" y="1033" width="4" height="4" fill="#80c054"/>
<rect x="408" y="1033" width="4" height="4" fill="#24120a"/>
<rect x="412" y="1033" width="4" height="4" fill="#f6faee"/>
<rect x="416" y="1033" width="4" height="4" fill="#80c054"/>
<rect x="420" y="1033" width="8" height="4" fill="#f6faee"/>
<rect x="428" y="1033" width="8" height="4" fill="#80c054"/>
<rect x="436" y="1033" width="8" height="4" fill="#f6faee"/>
<rect x="444" y="1033" width="8" height="4" fill="#80c054"/>
<rect x="452" y="1033" width="4" height="4" fill="#24120a"/>
<rect x="456" y="1033" width="4" height="4" fill="#80c054"/>
<rect x="460" y="1033" width="8" height="4" fill="#a66a43"/>
<rect x="468" y="1033" width="4" height="4" fill="#80c054"/>
<rect x="472" y="1033" width="4" height="4" fill="#33211f"/>
<rect x="476" y="1033" width="12" height="4" fill="#f0ebe4"/>
<rect x="488" y="1033" width="8" height="4" fill="#e2ddd6"/>
<rect x="496" y="1033" width="4" height="4" fill="#33211f"/>
<rect x="500" y="1033" width="4" height="4" fill="#80c054"/>
<rect x="504" y="1033" width="4" height="4" fill="#f6faee"/>
<rect x="508" y="1033" width="8" height="4" fill="#80c054"/>
<rect x="516" y="1033" width="4" height="4" fill="#24120a"/>
<rect x="520" y="1033" width="4" height="4" fill="#80c054"/>
<rect x="524" y="1033" width="8" height="4" fill="#a66a43"/>
<rect x="532" y="1033" width="4" height="4" fill="#80c054"/>
<rect x="536" y="1033" width="4" height="4" fill="#24120a"/>
<rect x="540" y="1033" width="8" height="4" fill="#f6faee"/>
<rect x="548" y="1033" width="12" height="4" fill="#80c054"/>
<rect x="560" y="1033" width="4" height="4" fill="#6bb043"/>
<rect x="564" y="1033" width="12" height="4" fill="#f6faee"/>
<rect x="576" y="1033" width="4" height="4" fill="#80c054"/>
<rect x="580" y="1033" width="4" height="4" fill="#24120a"/>
<rect x="584" y="1033" width="4" height="4" fill="#80c054"/>
<rect x="588" y="1033" width="8" height="4" fill="#a66a43"/>
<rect x="596" y="1033" width="4" height="4" fill="#80c054"/>
<rect x="600" y="1033" width="4" height="4" fill="#24120a"/>
<rect x="604" y="1033" width="4" height="4" fill="#6bb043"/>
<rect x="608" y="1033" width="4" height="4" fill="#f6faee"/>
<rect x="612" y="1033" width="12" height="4" fill="#80c054"/>
<rect x="624" y="1033" width="12" height="4" fill="#f6faee"/>
<rect x="636" y="1033" width="8" height="4" fill="#80c054"/>
<rect x="644" y="1033" width="4" height="4" fill="#24120a"/>
<rect x="648" y="1033" width="4" height="4" fill="#80c054"/>
<rect x="652" y="1033" width="8" height="4" fill="#a66a43"/>
<rect x="660" y="1033" width="4" height="4" fill="#80c054"/>
<rect x="664" y="1033" width="4" height="4" fill="#24120a"/>
<rect x="668" y="1033" width="4" height="4" fill="#80c054"/>
<rect x="672" y="1033" width="8" height="4" fill="#f6faee"/>
<rect x="680" y="1033" width="4" height="4" fill="#80c054"/>
<rect x="684" y="1033" width="4" height="4" fill="#f6faee"/>
<rect x="688" y="1033" width="8" height="4" fill="#80c054"/>
<rect x="696" y="1033" width="12" height="4" fill="#f6faee"/>
<rect x="708" y="1033" width="4" height="4" fill="#24120a"/>
<rect x="712" y="1033" width="4" height="4" fill="#80c054"/>
<rect x="716" y="1033" width="8" height="4" fill="#a66a43"/>
<rect x="724" y="1033" width="4" height="4" fill="#80c054"/>
<rect x="728" y="1033" width="4" height="4" fill="#24120a"/>
<rect x="732" y="1033" width="8" height="4" fill="#f6faee"/>
<rect x="740" y="1033" width="16" height="4" fill="#80c054"/>
<rect x="756" y="1033" width="4" height="4" fill="#f6faee"/>
<rect x="760" y="1033" width="4" height="4" fill="#80c054"/>
<rect x="764" y="1033" width="8" height="4" fill="#f6faee"/>
<rect x="772" y="1033" width="4" height="4" fill="#24120a"/>
<rect x="776" y="1033" width="4" height="4" fill="#80c054"/>
<rect x="780" y="1033" width="8" height="4" fill="#a66a43"/>
<rect x="788" y="1033" width="4" height="4" fill="#80c054"/>
<rect x="792" y="1033" width="4" height="4" fill="#24120a"/>
<rect x="796" y="1033" width="16" height="4" fill="#f6faee"/>
<rect x="812" y="1033" width="8" height="4" fill="#80c054"/>
<rect x="820" y="1033" width="12" height="4" fill="#f6faee"/>
<rect x="832" y="1033" width="4" height="4" fill="#80c054"/>
<rect x="836" y="1033" width="4" height="4" fill="#24120a"/>
<rect x="840" y="1033" width="4" height="4" fill="#80c054"/>
<rect x="844" y="1033" width="8" height="4" fill="#a66a43"/>
<rect x="852" y="1033" width="4" height="4" fill="#80c054"/>
<rect x="856" y="1033" width="4" height="4" fill="#24120a"/>
<rect x="860" y="1033" width="4" height="4" fill="#80c054"/>
<rect x="864" y="1033" width="12" height="4" fill="#f6faee"/>
<rect x="876" y="1033" width="4" height="4" fill="#80c054"/>
<rect x="880" y="1033" width="4" height="4" fill="#6bb043"/>
<rect x="884" y="1033" width="8" height="4" fill="#80c054"/>
<rect x="892" y="1033" width="8" height="4" fill="#f6faee"/>
<rect x="900" y="1033" width="4" height="4" fill="#24120a"/>
<rect x="904" y="1033" width="4" height="4" fill="#80c054"/>
<rect x="908" y="1033" width="8" height="4" fill="#a66a43"/>
<rect x="916" y="1033" width="4" height="4" fill="#80c054"/>
<rect x="920" y="1033" width="4" height="4" fill="#24120a"/>
<rect x="924" y="1033" width="12" height="4" fill="#f6faee"/>
<rect x="936" y="1033" width="16" height="4" fill="#80c054"/>
<rect x="952" y="1033" width="4" height="4" fill="#f6faee"/>
<rect x="956" y="1033" width="8" height="4" fill="#80c054"/>
<rect x="964" y="1033" width="4" height="4" fill="#24120a"/>
<rect x="968" y="1033" width="4" height="4" fill="#80c054"/>
<rect x="972" y="1033" width="8" height="4" fill="#a66a43"/>
<rect x="980" y="1033" width="4" height="4" fill="#80c054"/>
<rect x="984" y="1033" width="4" height="4" fill="#24120a"/>
<rect x="988" y="1033" width="4" height="4" fill="#6bb043"/>
<rect x="992" y="1033" width="8" height="4" fill="#f6faee"/>
<rect x="1000" y="1033" width="4" height="4" fill="#80c054"/>
<rect x="1004" y="1033" width="8" height="4" fill="#f6faee"/>
<rect x="1012" y="1033" width="8" height="4" fill="#80c054"/>
<rect x="1020" y="1033" width="8" height="4" fill="#f6faee"/>
<rect x="1028" y="1033" width="4" height="4" fill="#24120a"/>
<rect x="1032" y="1033" width="4" height="4" fill="#80c054"/>
<rect x="1036" y="1033" width="8" height="4" fill="#a66a43"/>
<rect x="1044" y="1033" width="4" height="4" fill="#80c054"/>
<rect x="1048" y="1033" width="4" height="4" fill="#24120a"/>
<rect x="1052" y="1033" width="4" height="4" fill="#f6faee"/>
<rect x="1056" y="1033" width="8" height="4" fill="#80c054"/>
<rect x="1064" y="1033" width="4" height="4" fill="#6bb043"/>
<rect x="1068" y="1033" width="12" height="4" fill="#f6faee"/>
<rect x="1080" y="1033" width="4" height="4" fill="#80c054"/>
<rect x="1084" y="1033" width="4" height="4" fill="#f6faee"/>
<rect x="1088" y="1033" width="4" height="4" fill="#80c054"/>
<rect x="1092" y="1033" width="4" height="4" fill="#24120a"/>
<rect x="1096" y="1033" width="4" height="4" fill="#80c054"/>
<rect x="1100" y="1033" width="8" height="4" fill="#a66a43"/>
<rect x="1108" y="1033" width="4" height="4" fill="#80c054"/>
<rect x="1112" y="1033" width="4" height="4" fill="#24120a"/>
<rect x="1116" y="1033" width="4" height="4" fill="#f6faee"/>
<rect x="1120" y="1033" width="4" height="4" fill="#80c054"/>
<rect x="1124" y="1033" width="4" height="4" fill="#f6faee"/>
<rect x="1128" y="1033" width="4" height="4" fill="#80c054"/>
<rect x="1132" y="1033" width="4" height="4" fill="#f6faee"/>
<rect x="1136" y="1033" width="8" height="4" fill="#80c054"/>
<rect x="1144" y="1033" width="4" height="4" fill="#f6faee"/>
<rect x="1148" y="1033" width="8" height="4" fill="#80c054"/>
<rect x="1156" y="1033" width="4" height="4" fill="#24120a"/>
<rect x="1160" y="1033" width="4" height="4" fill="#80c054"/>
<rect x="1164" y="1033" width="8" height="4" fill="#a66a43"/>
<rect x="1172" y="1033" width="4" height="4" fill="#80c054"/>
<rect x="1176" y="1033" width="4" height="4" fill="#24120a"/>
<rect x="1180" y="1033" width="4" height="4" fill="#6bb043"/>
<rect x="1184" y="1033" width="8" height="4" fill="#80c054"/>
<rect x="1192" y="1033" width="8" height="4" fill="#f6faee"/>
<rect x="1200" y="1033" width="4" height="4" fill="#80c054"/>
<rect x="1204" y="1033" width="4" height="4" fill="#6bb043"/>
<rect x="1208" y="1033" width="4" height="4" fill="#80c054"/>
<rect x="1212" y="1033" width="8" height="4" fill="#f6faee"/>
<rect x="1220" y="1033" width="4" height="4" fill="#24120a"/>
<rect x="1224" y="1033" width="4" height="4" fill="#80c054"/>
<rect x="1228" y="1033" width="8" height="4" fill="#a66a43"/>
<rect x="1236" y="1033" width="4" height="4" fill="#80c054"/>
<rect x="1240" y="1033" width="4" height="4" fill="#24120a"/>
<rect x="1244" y="1033" width="4" height="4" fill="#80c054"/>
<rect x="1248" y="1033" width="4" height="4" fill="#f6faee"/>
<rect x="1252" y="1033" width="8" height="4" fill="#80c054"/>
<rect x="1260" y="1033" width="8" height="4" fill="#f6faee"/>
<rect x="1268" y="1033" width="8" height="4" fill="#80c054"/>
<rect x="1276" y="1033" width="4" height="4" fill="#6bb043"/>
<rect x="1280" y="1033" width="4" height="4" fill="#80c054"/>
<rect x="1284" y="1033" width="4" height="4" fill="#24120a"/>
<rect x="1288" y="1033" width="4" height="4" fill="#80c054"/>
<rect x="1292" y="1033" width="8" height="4" fill="#a66a43"/>
<rect x="1300" y="1033" width="4" height="4" fill="#80c054"/>
<rect x="1304" y="1033" width="4" height="4" fill="#24120a"/>
<rect x="1308" y="1033" width="4" height="4" fill="#f6faee"/>
<rect x="1312" y="1033" width="12" height="4" fill="#80c054"/>
<rect x="1324" y="1033" width="16" height="4" fill="#f6faee"/>
<rect x="1340" y="1033" width="8" height="4" fill="#80c054"/>
<rect x="1348" y="1033" width="4" height="4" fill="#24120a"/>
<rect x="1352" y="1033" width="4" height="4" fill="#80c054"/>
<rect x="1356" y="1033" width="8" height="4" fill="#a66a43"/>
<rect x="1364" y="1033" width="4" height="4" fill="#80c054"/>
<rect x="1368" y="1033" width="4" height="4" fill="#24120a"/>
<rect x="1372" y="1033" width="4" height="4" fill="#80c054"/>
<rect x="1376" y="1033" width="28" height="4" fill="#f6faee"/>
<rect x="1404" y="1033" width="4" height="4" fill="#80c054"/>
<rect x="1408" y="1033" width="4" height="4" fill="#6bb043"/>
<rect x="1412" y="1033" width="4" height="4" fill="#24120a"/>
<rect x="1416" y="1033" width="4" height="4" fill="#80c054"/>
<rect x="1420" y="1033" width="8" height="4" fill="#a66a43"/>
<rect x="1428" y="1033" width="4" height="4" fill="#80c054"/>
<rect x="1432" y="1033" width="4" height="4" fill="#24120a"/>
<rect x="1436" y="1033" width="4" height="4" fill="#6bb043"/>
<rect x="1440" y="1033" width="4" height="4" fill="#f6faee"/>
<rect x="1444" y="1033" width="4" height="4" fill="#80c054"/>
<rect x="1448" y="1033" width="4" height="4" fill="#f6faee"/>
<rect x="1452" y="1033" width="4" height="4" fill="#80c054"/>
<rect x="1456" y="1033" width="4" height="4" fill="#6bb043"/>
<rect x="1460" y="1033" width="4" height="4" fill="#f6faee"/>
<rect x="1464" y="1033" width="4" height="4" fill="#80c054"/>
<rect x="1468" y="1033" width="8" height="4" fill="#f6faee"/>
<rect x="1476" y="1033" width="4" height="4" fill="#24120a"/>
<rect x="1480" y="1033" width="4" height="4" fill="#80c054"/>
<rect x="1484" y="1033" width="8" height="4" fill="#a66a43"/>
<rect x="1492" y="1033" width="4" height="4" fill="#80c054"/>
<rect x="1496" y="1033" width="4" height="4" fill="#24120a"/>
<rect x="1500" y="1033" width="8" height="4" fill="#f6faee"/>
<rect x="1508" y="1033" width="4" height="4" fill="#80c054"/>
<rect x="1512" y="1033" width="4" height="4" fill="#6bb043"/>
<rect x="1516" y="1033" width="8" height="4" fill="#80c054"/>
<rect x="1524" y="1033" width="4" height="4" fill="#6bb043"/>
<rect x="1528" y="1033" width="12" height="4" fill="#80c054"/>
<rect x="1540" y="1033" width="4" height="4" fill="#24120a"/>
<rect x="1544" y="1033" width="4" height="4" fill="#80c054"/>
<rect x="1548" y="1033" width="8" height="4" fill="#a66a43"/>
<rect x="1556" y="1033" width="4" height="4" fill="#80c054"/>
<rect x="1560" y="1033" width="4" height="4" fill="#24120a"/>
<rect x="1564" y="1033" width="12" height="4" fill="#80c054"/>
<rect x="1576" y="1033" width="16" height="4" fill="#f6faee"/>
<rect x="1592" y="1033" width="8" height="4" fill="#80c054"/>
<rect x="1600" y="1033" width="4" height="4" fill="#6bb043"/>
<rect x="1604" y="1033" width="4" height="4" fill="#24120a"/>
<rect x="1608" y="1033" width="4" height="4" fill="#80c054"/>
<rect x="1612" y="1033" width="8" height="4" fill="#a66a43"/>
<rect x="1620" y="1033" width="4" height="4" fill="#80c054"/>
<rect x="1624" y="1033" width="4" height="4" fill="#24120a"/>
<rect x="1628" y="1033" width="4" height="4" fill="#6bb043"/>
<rect x="1632" y="1033" width="4" height="4" fill="#80c054"/>
<rect x="1636" y="1033" width="4" height="4" fill="#f6faee"/>
<rect x="1640" y="1033" width="8" height="4" fill="#80c054"/>
<rect x="1648" y="1033" width="16" height="4" fill="#f6faee"/>
<rect x="1664" y="1033" width="4" height="4" fill="#80c054"/>
<rect x="1668" y="1033" width="4" height="4" fill="#24120a"/>
<rect x="1672" y="1033" width="4" height="4" fill="#80c054"/>
<rect x="1676" y="1033" width="8" height="4" fill="#a66a43"/>
<rect x="1684" y="1033" width="4" height="4" fill="#80c054"/>
<rect x="1688" y="1033" width="4" height="4" fill="#24120a"/>
<rect x="1692" y="1033" width="4" height="4" fill="#f6faee"/>
<rect x="1696" y="1033" width="4" height="4" fill="#80c054"/>
<rect x="1700" y="1033" width="4" height="4" fill="#f6faee"/>
<rect x="1704" y="1033" width="16" height="4" fill="#80c054"/>
<rect x="1720" y="1033" width="4" height="4" fill="#f6faee"/>
<rect x="1724" y="1033" width="4" height="4" fill="#80c054"/>
<rect x="1728" y="1033" width="4" height="4" fill="#f6faee"/>
<rect x="1732" y="1033" width="4" height="4" fill="#24120a"/>
<rect x="1736" y="1033" width="4" height="4" fill="#80c054"/>
<rect x="1740" y="1033" width="8" height="4" fill="#a66a43"/>
<rect x="1748" y="1033" width="4" height="4" fill="#80c054"/>
<rect x="1752" y="1033" width="4" height="4" fill="#24120a"/>
<rect x="1756" y="1033" width="20" height="4" fill="#f6faee"/>
<rect x="1776" y="1033" width="4" height="4" fill="#80c054"/>
<rect x="1780" y="1033" width="4" height="4" fill="#f6faee"/>
<rect x="1784" y="1033" width="4" height="4" fill="#80c054"/>
<rect x="1788" y="1033" width="8" height="4" fill="#f6faee"/>
<rect x="1796" y="1033" width="4" height="4" fill="#24120a"/>
<rect x="1800" y="1033" width="4" height="4" fill="#80c054"/>
<rect x="1804" y="1033" width="8" height="4" fill="#a66a43"/>
<rect x="1812" y="1033" width="4" height="4" fill="#80c054"/>
<rect x="1816" y="1033" width="4" height="4" fill="#24120a"/>
<rect x="1820" y="1033" width="4" height="4" fill="#f6faee"/>
<rect x="1824" y="1033" width="8" height="4" fill="#80c054"/>
<rect x="1832" y="1033" width="4" height="4" fill="#6bb043"/>
<rect x="1836" y="1033" width="4" height="4" fill="#80c054"/>
<rect x="1840" y="1033" width="4" height="4" fill="#f6faee"/>
<rect x="1844" y="1033" width="4" height="4" fill="#80c054"/>
<rect x="1848" y="1033" width="8" height="4" fill="#f6faee"/>
<rect x="1856" y="1033" width="4" height="4" fill="#80c054"/>
<rect x="1860" y="1033" width="4" height="4" fill="#24120a"/>
<rect x="1864" y="1033" width="4" height="4" fill="#80c054"/>
<rect x="1868" y="1033" width="8" height="4" fill="#a66a43"/>
<rect x="1876" y="1033" width="4" height="4" fill="#80c054"/>
<rect x="1880" y="1033" width="4" height="4" fill="#24120a"/>
<rect x="1884" y="1033" width="4" height="4" fill="#80c054"/>
<rect x="1888" y="1033" width="4" height="4" fill="#6bb043"/>
<rect x="1892" y="1033" width="4" height="4" fill="#80c054"/>
<rect x="1896" y="1033" width="4" height="4" fill="#6bb043"/>
<rect x="1900" y="1033" width="8" height="4" fill="#f6faee"/>
<rect x="1908" y="1033" width="4" height="4" fill="#80c054"/>
<rect x="1912" y="1033" width="8" height="4" fill="#f6faee"/>
<rect x="0" y="1037" width="8" height="4" fill="#b5364a"/>
<rect x="8" y="1037" width="4" height="4" fill="#8e2b4c"/>
<rect x="12" y="1037" width="16" height="4" fill="#b5364a"/>
<rect x="28" y="1037" width="4" height="4" fill="#8e2b4c"/>
<rect x="32" y="1037" width="16" height="4" fill="#b5364a"/>
<rect x="48" y="1037" width="4" height="4" fill="#8e2b4c"/>
<rect x="52" y="1037" width="16" height="4" fill="#b5364a"/>
<rect x="68" y="1037" width="4" height="4" fill="#2b2a21"/>
<rect x="72" y="1037" width="8" height="4" fill="#c4cfbb"/>
<rect x="80" y="1037" width="4" height="4" fill="#2b2a21"/>
<rect x="84" y="1037" width="52" height="4" fill="#6a3f57"/>
<rect x="136" y="1037" width="4" height="4" fill="#2b2a21"/>
<rect x="140" y="1037" width="12" height="4" fill="#c4cfbb"/>
<rect x="152" y="1037" width="4" height="4" fill="#2b2a21"/>
<rect x="156" y="1037" width="96" height="4" fill="#80c054"/>
<rect x="252" y="1037" width="4" height="4" fill="#24120a"/>
<rect x="256" y="1037" width="8" height="4" fill="#d1a263"/>
<rect x="264" y="1037" width="4" height="4" fill="#24120a"/>
<rect x="268" y="1037" width="208" height="4" fill="#80c054"/>
<rect x="476" y="1037" width="4" height="4" fill="#33211f"/>
<rect x="480" y="1037" width="8" height="4" fill="#df775b"/>
<rect x="488" y="1037" width="8" height="4" fill="#33211f"/>
<rect x="496" y="1037" width="1424" height="4" fill="#80c054"/>
</svg></div>
<div id="taskbar"><span class="t" style="left:1661.40px;top:13.85px;font-size:11.5px;line-height:13.5px;color:#e6e6d8;transform:scaleX(1.0003);transform-origin:0 0;">Desktop</span>
<span class="t" style="left:1819.20px;top:5.48px;font-size:11.5px;line-height:13.5px;color:#e6e6d8;transform:scaleX(0.8966);transform-origin:0 0;">17:18</span>
<span class="t" style="left:1802.80px;top:23.48px;font-size:11.5px;line-height:13.5px;color:#e6e6d8;transform:scaleX(1.0043);transform-origin:0 0;">22/09/2025</span>
<svg width="1920" height="40" viewBox="0 1040 1920 40" style="left:0;top:0">
<rect x="296" y="1040" width="48" height="40" fill="#a65a17"/><rect x="296" y="1078" width="48" height="2" fill="#f27c12"/>
<rect x="55" y="1078" width="40" height="2" fill="#c9c9bb"/>
<rect x="153" y="1078" width="40" height="2" fill="#c9c9bb"/>
<rect x="251" y="1078" width="40" height="2" fill="#c9c9bb"/>
<rect x="349" y="1078" width="40" height="2" fill="#c9c9bb"/>
<rect x="398" y="1078" width="40" height="2" fill="#c9c9bb"/>
<rect x="839" y="1078" width="40" height="2" fill="#c9c9bb"/>
<rect x="888" y="1078" width="40" height="2" fill="#c9c9bb"/>
<rect x="937" y="1078" width="40" height="2" fill="#c9c9bb"/>
<rect x="986" y="1078" width="40" height="2" fill="#c9c9bb"/>
<rect x="156" y="1040" width="1764" height="1" fill="#5f8241"/><rect x="156" y="1041" width="1764" height="1" fill="#3d4727"/>
<g fill="#fff"><path d="M16 1054.3L22.6 1053.4V1059.6H16Z"/><path d="M23.4 1053.3L32 1052V1059.6H23.4Z"/><path d="M16 1060.4H22.6V1066.6L16 1065.7Z"/><path d="M23.4 1060.4H32V1068L23.4 1066.7Z"/></g>
<g><circle cx="75" cy="1060" r="12" fill="#db4437"/><path d="M75 1060L78.0 1054H85.4A12 12 0 0 1 75.5 1071.9Z" fill="#f4c20d"/><path d="M75 1060L75.5 1071.9A12 12 0 0 1 64.6 1054Z" fill="#1aa260"/><path d="M75 1060L64.6 1054L85.4 1054Z" fill="#db4437"/><circle cx="75" cy="1060" r="5.6" fill="#fff"/><circle cx="75" cy="1060" r="4.4" fill="#4285f4"/></g>
<g><circle cx="84" cy="1067.5" r="4.6" fill="#f5a623"/><circle cx="82.6" cy="1067" r="1.5" fill="#fff"/><circle cx="85.6" cy="1067" r="1.5" fill="#fff"/><circle cx="82.8" cy="1067.2" r="0.7" fill="#222"/><circle cx="85.4" cy="1067.2" r="0.7" fill="#222"/><path d="M80 1064l1.5-2.5l1.5 2Zm5 -0.5l1.5-2l1.5 2.5Z" fill="#f5a623"/></g>
<defs><linearGradient id="ge1" x1="0" y1="1" x2="1" y2="0"><stop offset="0" stop-color="#0c59a4"/><stop offset="0.55" stop-color="#1b9de2"/><stop offset="1" stop-color="#5bd85c"/></linearGradient><linearGradient id="ge2" x1="0" y1="0" x2="1" y2="1"><stop offset="0" stop-color="#1b78d0"/><stop offset="1" stop-color="#0b3f86"/></linearGradient></defs>
<g><circle cx="124" cy="1060" r="12" fill="url(#ge1)"/><path d="M112.4 1062.5C113.0 1068 120.0 1072 127.0 1071.4C131.0 1072 134.6 1069 135.6 1064.5C132.0 1067 126.0 1068.5 123.0 1067C120.5 1065.5 122.0 1062 125.0 1059.5C123.0 1057 120.6 1056.6 117.6 1056.8C114.4 1056.5 112.0 1058 112.4 1062.5Z" fill="url(#ge2)"/><path d="M122.0 1058.5c1.5-2.6 5.5-3 8-1.2c1.2 1 1.2 2.6 0 3.4c1.2-4-5.6-4.6-6-0.4Z" fill="#0b3f86" opacity="0.0"/><path d="M122.5 1059.800c0.400-3 3.600-4.600 6.600-3.600c2.600 0.800 4 3 3.400 5c-1-2.600-5-3.400-7 -0.600c-0.800 1.200-0.400 3 1 4.200c-2.600-0.600-4.400-2.600-4-5Z" fill="#0d4a94" opacity="0.9"/></g>
<defs><radialGradient id="gf1" cx="0.5" cy="0.25" r="0.85"><stop offset="0" stop-color="#fff36b"/><stop offset="0.35" stop-color="#ffbd2e"/><stop offset="0.7" stop-color="#ff6a1f"/><stop offset="1" stop-color="#ef2d66"/></radialGradient></defs>
<g><path d="M175.0 1048C178.0 1050 182.0 1051 183.4 1053.5C184.6 1056 185.0 1059 185.0 1062C185.0 1068 179.5 1072 173.0 1072C166.5 1072 161.0 1068 161.0 1061.5C161.0 1058 162.2 1055 164.4 1053.6C164.4 1055.4 165.4 1056.6 167.0 1057C171.0 1054.5 174.0 1051 175.0 1048Z" fill="url(#gf1)"/><circle cx="172.6" cy="1060.6" r="5" fill="#7b3fd6"/><path d="M170.4 1057.6c2.4-1.6 5.6-0.6 6.6 1.8c-1.6-1-3.4-0.6-4.4 0.6c-1.2 0-2-1-2.2-2.4Z" fill="#ff8a2a"/></g>
<g><path d="M211.0 1052l14-2.4l1 13l-14 2.6Z" fill="#cfd3d6"/><path d="M214.0 1051.2l14.4-1.6l0.4 12.6l-14 2Z" fill="#e4e7ea" stroke="#aab0b6" stroke-width="0.6"/><path d="M215.6 1053l11.4-1.2l0.3 8.6l-11.2 1.4Z" fill="#9fc3e6"/><path d="M216.0 1059.6l2-3l1.6 2l2-4l2 3.4l2-2" fill="none" stroke="#4a86c8" stroke-width="0.8"/><ellipse cx="223.0" cy="1068.4" rx="5" ry="1.8" fill="#d9dcdf"/><path d="M221.4 1064.6h3v3.4h-3Z" fill="#b9bec3"/></g>
<g><path d="M260.2 1051h7.4l2 2h12.2v3H260.2Z" fill="#e8b73a"/><rect x="260.2" y="1054" width="21.6" height="14" fill="#f7d154"/><path d="M263.9 1068v-5.6h3.6v-2.4h7v2.4h3.6v5.6Z" fill="#3c8fdd"/><rect x="268.5" y="1063.6" width="5" height="2.6" fill="#f7d154"/></g>
<g><circle cx="320" cy="1059.6" r="12" fill="#5865f2"/><path d="M313.0 1055.4c1.6-0.8 3-1.2 4.4-1.4l0.5 1c1.4-0.2 2.8-0.2 4.2 0l0.5-1c1.4 0.2 2.8 0.6 4.4 1.4c2 3 2.8 6 2.6 9.4c-1.6 1.2-3 1.8-4.6 2.2l-0.9-1.6c0.6-0.2 1.1-0.5 1.6-0.8c-3.6 1.6-7.8 1.6-11.4 0c0.5 0.3 1 0.6 1.6 0.8l-0.9 1.6c-1.6-0.4-3-1-4.6-2.2c-0.2-3.4 0.6-6.4 2.6-9.4Z" fill="#fff"/><ellipse cx="317.2" cy="1061" rx="1.7" ry="1.9" fill="#5865f2"/><ellipse cx="322.8" cy="1061" rx="1.7" ry="1.9" fill="#5865f2"/><circle cx="326.4" cy="1066.6" r="6.2" fill="#e5484d"/></g>
<text x="326.4" y="1070" text-anchor="middle" font-family="Liberation Sans,sans-serif" font-weight="bold" font-size="9.5" fill="#fff">2</text>
<g><circle cx="369" cy="1060" r="12" fill="#1ed760"/><g fill="none" stroke="#1a1a12" stroke-linecap="round"><path d="M362.0 1056.4c4.6-1.4 10-1 14 1.2" stroke-width="2.2"/><path d="M362.8 1060.4c4-1.2 8.4-0.8 11.8 1.2" stroke-width="1.9"/><path d="M363.8 1064.2c3.2-0.9 6.6-0.6 9.4 1" stroke-width="1.6"/></g></g>
<defs><linearGradient id="gst" x1="0" y1="0" x2="0" y2="1"><stop offset="0" stop-color="#13234a"/><stop offset="0.6" stop-color="#14366e"/><stop offset="1" stop-color="#1f7bbf"/></linearGradient></defs>
<g><circle cx="418" cy="1060" r="12" fill="url(#gst)"/><circle cx="422.0" cy="1056.4" r="4.2" fill="#fff"/><circle cx="422.0" cy="1056.4" r="2.6" fill="#8fb4d9"/><circle cx="422.0" cy="1056.4" r="1.7" fill="#fff" opacity="0.9"/><path d="M418.4 1058.4L414.0 1064.4L422.6 1061Z" fill="#fff"/><circle cx="414.8" cy="1064.8" r="3.2" fill="#fff"/><circle cx="414.8" cy="1064.8" r="1.8" fill="#1a4b86"/><path d="M406.0 1060.6L412.4 1064.4L412.0 1067L406.4 1063Z" fill="#fff"/></g>
<g><rect x="455" y="1048" width="24" height="24" fill="#107c10"/><circle cx="467" cy="1060" r="9.400" fill="#fff"/><g fill="none" stroke="#107c10" stroke-width="2.100"><path d="M460.6 1052.600Q466.5 1057 473.8 1068.400"/><path d="M473.4 1052.600Q467.5 1057 460.2 1068.400"/></g><path d="M464.4 1052.200l2.600 2.600l2.600-2.600Z" fill="#107c10" opacity="0"/></g>
<g><rect x="505.0" y="1049" width="22" height="22" rx="3" fill="#fdfcfb"/><path d="M508.4 1063.4c-1.200-4 0.600-8.200 3-8.200c2.600 0 4.400 3.600 5.600 5.600c1.400 2.400 2.800 4.400 4.400 4.400c2 0 2.600-2.600 2-5.400c-0.600-2.800-2.200-4.600-3.800-4.600c-2.200 0-3.800 2.800-5.200 5.400c-1.400 2.600-2.600 4.600-4.400 4.600c-1 0-1.400-0.800-1.600-1.800Z" fill="none" stroke="#1877f2" stroke-width="2"/></g>
<g><path d="M555.0 1049h19a1.200 1.200 0 0 1 1.200 1.200v16l-10.700 5l-10.700-5v-16a1.200 1.200 0 0 1 1.200-1.200Z" fill="#0c0c0c"/><text x="564.5" y="1060.4" text-anchor="middle" font-family="Liberation Sans,sans-serif" font-weight="bold" font-size="9" fill="#fff" textLength="16" lengthAdjust="spacingAndGlyphs">EPIC</text><text x="564.5" y="1065.400" text-anchor="middle" font-family="Liberation Sans,sans-serif" font-weight="bold" font-size="4" fill="#fff" textLength="13" lengthAdjust="spacingAndGlyphs">GAMES</text><path d="M562.0 1067.400h5l-2.500 1.400Z" fill="#fff"/></g>
<g><circle cx="614" cy="1060" r="11.500" fill="#0b0b0b" stroke="#fff" stroke-width="1.300"/><path d="M608.6 1054.400c1.400-0.800 2.600-1.400 3.800-1.600v10.200c0 1.600 1.600 2.200 3 1.200v-8.600c-0.600-0.400-1.200-0.600-1.800-0.600c1.400-1 3.200-1.800 5-2.200v11c0.400 0.600 1 0.600 1.800 0.200c-1.200 1.800-3 3-4.600 3.200c-0.200-0.800-0.400-1.400-0.400-2c-1.600 1.400-3.400 2.200-5 2c-1.400-0.200-2.400-1.200-2.400-3v-8.400c0-0.600-0.400-1-1-0.800c0.400-0.200 1-0.400 1.600-0.600Z" fill="#fff"/></g>
<g><rect x="654" y="1049.400" width="18" height="19.400" rx="2.500" fill="#c9ccd1"/><rect x="654" y="1049.400" width="18" height="17" rx="2.500" fill="#fdfdfd"/><rect x="658.4" y="1053.400" width="1.800" height="6.400" fill="#4b4b52"/><rect x="665.8" y="1053.400" width="1.800" height="6.400" fill="#4b4b52"/></g>
<g><g fill="none" stroke="#1b8ee0" stroke-width="3.400" stroke-linecap="round"><path d="M716.0 1051L703.0 1063.600"/><path d="M716.0 1069L703.0 1056.400"/></g><path d="M717.8 1048.400l5.200 2.400v18.400l-5.200 2.400Z" fill="#35aaf4"/><path d="M717.8 1048.400l-3 1.400v20.400l3 1.400Z" fill="#1f95e6"/></g>
<g><circle cx="761" cy="1060" r="12" fill="#7a2fc4"/><circle cx="761" cy="1060" r="9.600" fill="none" stroke="#9b4fe0" stroke-width="1.200"/><path d="M757.1 1054l1.600 1.800c1.400-0.400 3.200-0.400 4.600 0l1.600-1.800c0.600 1 0.700 2 0.500 3c0.900 1 1.300 2.200 1.100 3.600c-0.300 2.400-2 3.600-4.400 3.800c0.500 0.500 0.700 1.200 0.700 2v2.400h-3.600v-1.400c-1.700 0.400-2.700-0.300-3.300-1.600c-0.200-0.500-0.600-0.900-1.100-1.100c1.200-0.400 1.800 0.400 2.300 1.100c0.500 0.700 1.300 0.800 2.100 0.500c0.100-0.700 0.300-1.400 0.700-1.900c-2.400-0.200-4.100-1.400-4.400-3.800c-0.200-1.400 0.200-2.600 1.100-3.600c-0.200-1-0.100-2 0.500-3Z" fill="#fff"/></g>
<g><rect x="798.8" y="1050.800" width="22.400" height="13.400" fill="#fdfdfd" stroke="#d0d0d0" stroke-width="0.600"/><path d="M807.8 1055v2.600M812.2 1055v2.600M808.0 1059.400c1.200 1 2.800 1 4 0" fill="none" stroke="#9a9a9a" stroke-width="0.800"/><rect x="808.2" y="1064.400" width="3.600" height="3" fill="#9a9a92"/><rect x="804.5" y="1067.200" width="11" height="1.600" fill="#a8a8a0"/></g>
<g><rect x="848" y="1049.400" width="22" height="21" rx="2.500" fill="#fcc12d"/><path d="M867.0 1053.400v17h-7.400c-1.600 0-2.400-1-1.600-2.400Z" fill="#a23ccf" opacity="0.95"/><path d="M867.0 1053.400l-5.600 4.800l-6 1.800l1.200 3.600Z" fill="#c457e6" opacity="0.0"/></g>
<g><path d="M903.0 1053.400c0.600-2 2.400-2.600 3.400-1.400c1-1 3-0.400 3.200 1.600c1 0.200 1.600 1 1.400 2l-9 0.400c-0.400-1.200 0-2.200 1-2.600Z" fill="#c94a5a"/><ellipse cx="908.0" cy="1061.400" rx="7.200" ry="6.400" fill="#f4efec"/><circle cx="905.0" cy="1060.400" r="1.100" fill="#2a2a2a"/><circle cx="910.6" cy="1060.400" r="1.100" fill="#2a2a2a"/><path d="M906.2 1062.400l1.600 2.400l1.600-2.400Z" fill="#e8a33a"/><path d="M906.6 1064.600c0.600 1.600 1.800 1.600 2.400 0Z" fill="#c94a5a"/></g>
<g><path d="M946.4 1060.400c0-5 4.600-8.600 10-8.600c6 0 9.600 3.800 8.600 8c-0.800 3.200-3.600 2.800-5 4.400c-1 1.400 0.200 3-1.800 4.200c-4 2-11.800-1-11.800-8Z" fill="#dfe7ee" stroke="#8fa3b8" stroke-width="0.800"/><circle cx="951.0" cy="1058" r="1.900" fill="#c0504d"/><circle cx="955.0" cy="1055.600" r="1.900" fill="#6fb04a"/><circle cx="960.0" cy="1055.800" r="1.900" fill="#e2b93b"/><circle cx="956.0" cy="1062.400" r="2" fill="#2b5fa8"/><circle cx="951.4" cy="1064.400" r="1.700" fill="#7fb6e6"/><path d="M963.4 1048.600l2.400 0.800l-6.400 20.600l-1.400-0.400Z" fill="#c98a3c"/><path d="M963.2 1047.400l3 1l-1.200 4.400l-2.800-0.800Z" fill="#e6caa4"/></g>
<defs><linearGradient id="gph" x1="0" y1="0" x2="1" y2="1"><stop offset="0" stop-color="#2a6fd6"/><stop offset="0.550" stop-color="#3f62c8"/><stop offset="1" stop-color="#8a4fc0"/></linearGradient></defs>
<g><rect x="994.7" y="1048.600" width="22.600" height="23" rx="2" fill="url(#gph)"/><path d="M996.7 1071.600a2 2 0 0 1-2-2v-3l11.300-10.200l11.300 10.200v3a2 2 0 0 1-2 2Z" fill="#1f97ea"/><path d="M994.7 1069.600v-3l11.300-10.200l3 2.800l-11.800 12.400h-0.500a2 2 0 0 1-2-2Z" fill="#38b8f2"/><rect x="1010.2" y="1051.400" width="3.200" height="3.200" fill="#fff"/></g>
<path d="M1712.500 1047l3 2.800l-3 2.800M1716.500 1047l3 2.800l-3 2.800" fill="none" stroke="#fff" stroke-width="1.300"/>
<path d="M1731.500 1063.200l5.500-5.500l5.500 5.500" fill="none" stroke="#e6e6d8" stroke-width="1.500"/>
<g fill="none" stroke="#e6e6d8" stroke-width="1.100"><rect x="1756.500" y="1054.500" width="12.500" height="8.500"/><path d="M1762.700 1063v3.500M1758.500 1066.700h8.500"/><rect x="1753.500" y="1054.500" width="3" height="4" fill="#3a3b2d"/><path d="M1755 1058.500v8.200h3.500"/></g>
<g fill="none" stroke="#e6e6d8" stroke-width="1.100"><path d="M1777.500 1057.500h3l3.500-3.500v11.500l-3.500-3.500h-3Z"/><path d="M1786.200 1057.200c1.200 1.600 1.200 3.600 0 5.200M1788.400 1055.200c2.200 2.800 2.200 6.400 0 9.200M1790.600 1053.200c3.200 4 3.200 9.200 0 13.200"/></g>
<g><path d="M1879 1052h16v12.500h-4.500v3.200l-3.200-3.200H1879Z" fill="#fff"/><path d="M1881.500 1055.500h11M1881.500 1058.200h11M1881.500 1060.900h7" stroke="#3a3b2d" stroke-width="1.100"/><circle cx="1893" cy="1065" r="3" fill="#3a3b2d" stroke="#fff" stroke-width="0.900"/><path d="M1893 1063.600v1.600h1.200" stroke="#fff" stroke-width="0.700" fill="none"/></g>
<rect x="1915" y="1040" width="1" height="40" fill="#8d8e80"/>
</svg></div>
</body>
</html>
